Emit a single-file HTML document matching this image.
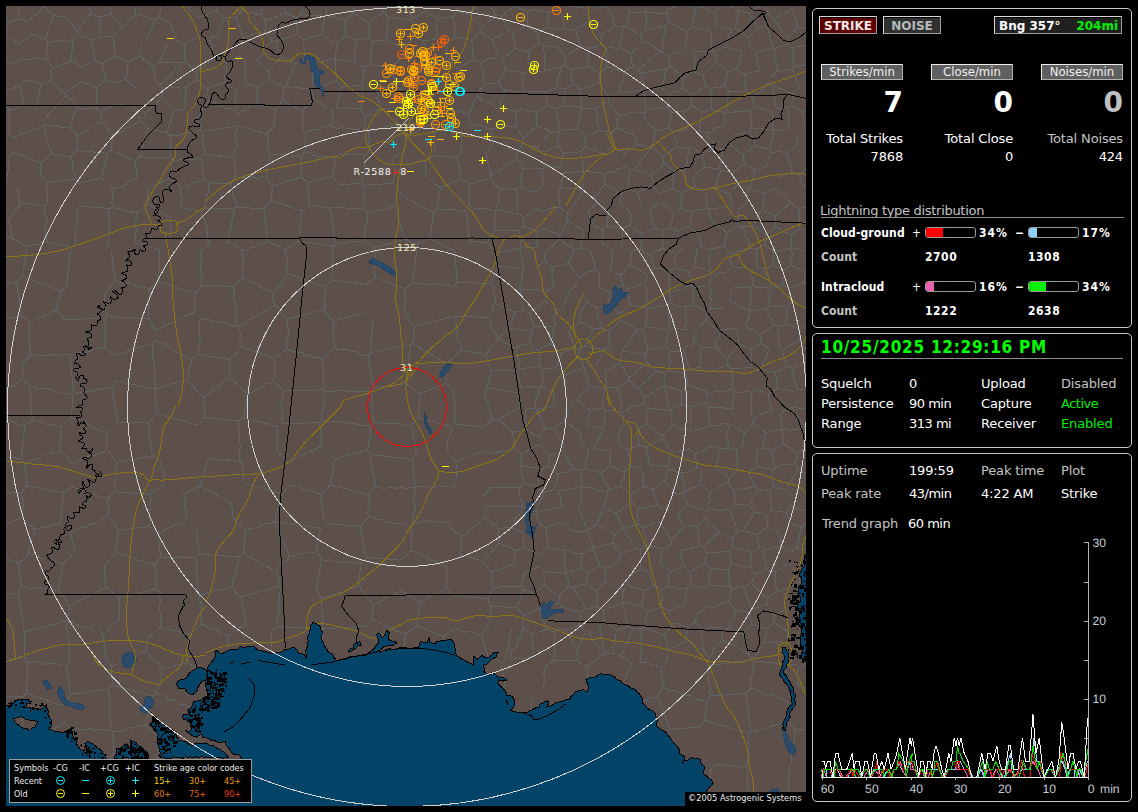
<!DOCTYPE html>
<html lang="en">
<head>
<meta charset="utf-8">
<title>Lightning Map</title>
<style>
html,body{margin:0;padding:0;background:#000;}
body{width:1138px;height:812px;position:relative;overflow:hidden;font-family:"DejaVu Sans","Liberation Sans",sans-serif;font-size:13px;color:#fff;}
#map{position:absolute;left:6px;top:6px;width:800px;height:800px;background:#5d504a;overflow:hidden;}
#map svg{position:absolute;left:0;top:0;}
.panel{position:absolute;left:812px;width:318px;border:1px solid #c8c8c8;border-radius:5px;background:#000;}
.t{position:absolute;white-space:pre;line-height:16px;height:16px;font-size:13px;letter-spacing:-0.15px;color:#fff;}
.r{text-align:right;}
.g{color:#c4c4c4;}
.gr{color:#00f000;}
.b{font-family:"DejaVu Sans Condensed","DejaVu Sans","Liberation Sans",sans-serif;font-weight:bold;font-size:12px;letter-spacing:0.1px;}
.hb{position:absolute;top:16px;height:16px;border:1px solid #d8d8d8;border-bottom-color:#a0a0a0;border-right-color:#a0a0a0;box-shadow:inset 0 1px 0 #000;font-family:"DejaVu Sans","Liberation Sans",sans-serif;font-weight:bold;font-size:12px;line-height:18px;text-align:center;white-space:pre;letter-spacing:0;}
.lb{position:absolute;top:64px;width:80px;height:14px;border:1px solid #ececec;border-bottom-color:#b0b0b0;border-right-color:#b0b0b0;background:#5f5f5f;font-family:"DejaVu Sans Condensed","Liberation Sans",sans-serif;font-size:13px;line-height:14px;text-align:center;color:#f0f0f0;}
.big{position:absolute;top:86px;width:90px;height:34px;line-height:34px;font-weight:bold;font-size:28px;text-align:right;letter-spacing:0;}
.bar{position:absolute;width:49px;height:9px;border:1px solid #9a9a9a;border-radius:3px;background:#000;overflow:hidden;}
.bar i{position:absolute;left:0;top:0;height:9px;display:block;}
.pc{letter-spacing:1px;}
.ct{letter-spacing:0.55px;}
.mn{letter-spacing:-0.5px;}
.hr{position:absolute;height:1px;background:#8c8c8c;}
</style>
</head>
<body>
<!-- ============ map ============ -->
<div id="map">
<svg width="800" height="800" viewBox="6 6 800 800" shape-rendering="crispEdges" fill="none" stroke-width="1">
<path id="counties" stroke="#606465" d="M-25.7 2.2L3 -8.7M-6.2 399.1L22.8 378.8M22.8 378.8L22.9 362.8M28.9 -6.4L42.1 1.8M42.1 1.8L49.2 -5.9M794.8 806.2L794.9 810.3L795 814.5L796.6 818.6L796.3 822.8L796.3 826.9L795.9 831.1M3.6 -8L2.1 14.8M16 -4.5L20.3 18.9M20.3 18.9L8.6 21.8M2.1 14.8L4.6 18.9L8.6 21.8M2.1 14.8L-2.8 14.7L-7.4 16.2L-11.6 18.8L-16.4 19.5M54 15.6L42.8 6.4M54 15.6L51.6 19.2L50.8 23.4L48.8 27.2L47.6 31.2L47.7 35.7L45.8 39.5M42.8 6.4L40.6 10.1L37.9 13.3L34.5 15.9L31.1 18.4L28.4 21.6M45.8 39.5L40.8 38.2L36.4 35.1L31.3 34.1M20.3 18.9L28.4 21.6M42.1 1.8L42.8 6.4M-15.4 245.3L11.1 236.6M11.1 236.6L11.5 232.1L11.4 227.7L9 223.5L9.9 219M-9.6 283.5L-5.2 283.5L-1 281.8L3.4 281.6L7.8 281.7L12.2 283.5L16.5 282M-14.3 321.5L22.1 316.5M16.5 282L22.1 316.5M26.7 247.3L22.9 244.6L19.3 241.3L14.4 240.1L11.1 236.6M26.7 247.3L22.6 276.1M16.5 282L22.6 276.1M-17.2 187.2L-13.5 185.4L-9.4 184.7L-5.2 184.1L-1.9 181.3L2.5 181.4L6 179M8.9 157.7L8.8 162L8.6 166.3L8.3 170.6L7.5 174.9L6 179M9.7 134.9L-21.1 128.3M9.7 134.9L12.5 137.8M8.9 157.7L12.7 152.4M20.4 202.6L18.3 207.1L14.9 210.7L11.8 214.5L9.9 219M20.4 202.6L18.1 198.2L19.2 193L17.1 188.6M9.7 134.9L9.9 110.2M9.9 110.2L-1 99.8M8.6 21.8L4.8 34.6M31.3 34.1L28.4 36.8L25.9 40.1L21.7 41.4L19.3 44.7M4.8 34.6L19.3 44.7M52.4 67.9L45.9 57.9M52.4 67.9L71.3 61M45.9 57.9L48.1 42.5M48.1 42.5L52.2 41.8L56.2 40.6L60.4 40.6L64.7 41.7L68.8 41.1L72.8 39.4M72.8 39.4L71.3 61M45.8 39.5L48.1 42.5M18.8 60L45.9 57.9M77.7 34.3L72.8 39.4M77.7 34.3L77.1 30.1M54 15.6L65.3 16.7M77.1 30.1L65.3 16.7M77.7 34.3L82.1 36.7L87.2 37.7L91.7 40.1M81 67.6L95 60.5M81 67.6L76.8 63.4L71.3 61M91.7 40.1L95 60.5M170.6 136.2L170.2 140.5L170.8 144.8L169.9 149.1L170.4 153.5L170.8 157.8M170.6 136.2L166.9 132.5M139.8 156.9L148 128.5M139.8 156.9L170.8 157.8M166.9 132.5L148 128.5M134.9 161L111.6 150.3M134.9 161L139.8 156.9M111.6 150.3L112.4 134.6M112.4 134.6L116.9 133.4L121.1 131.6L124.6 128.5L129 126.9L133.1 125L137.2 123L141 120.4M148 128.5L141 120.4M132.8 106.3L141 118.9M132.8 106.3L115.8 103.7M115.8 103.7L100.2 112.2M100.2 112.2L101.8 116.9L101.6 121.8M112.4 134.6L101.6 121.8M166.9 132.5L173.7 110.6M141 118.9L144 115.9L146.6 112.5L149.4 109.3L152.6 106.5L156.1 104L158.9 100.8L162.6 98.5M162.6 98.5L165.4 101.4L168.4 104.3L170.7 107.8L173.7 110.6M200.9 130.2L201.1 125.5L198 121.4L198.4 116.7M200.9 130.2L196.6 131.3L192.5 132.9L187.8 131.9L183.7 133.9L179.5 135.6L174.9 135L170.6 136.2M185.4 109.2L179.5 109.7L173.7 110.6M162.6 98.5L163 88.9M185.4 109.2L186.1 87M186.1 87L181.6 88.3L176.8 87.5L172.2 88L167.5 87.4L163 88.9M330.8 208.4L335.1 244.4M330.8 208.4L332.6 206.9M335.1 244.4L339.2 242.8L343.5 243.4L347.8 242.9L351.8 241.1L356.2 241.8L360.5 241.9L364.6 240.3M367.5 213.3L367.8 217.9L367.1 222.4L364.8 226.7L365.9 231.4L363.9 235.7L364.6 240.3M367.5 213.3L364.7 209.6M364.7 209.6L360.8 208L356.6 208.9L352.6 208.8L348.6 208.7L344.7 206.7L340.6 207.6L336.5 207.8L332.6 206.9M364.7 209.6L364.7 205.5L364 201.4L363.3 197.4L364.3 193.2L364.1 189.1L363 185.1M338.6 183.7L343.3 185L348.1 184.7L352.8 183.4L357.6 183.5L362.3 184.2M321.9 34.5L324.8 16.3M321.9 34.5L303.4 39.6M324.8 16.3L300.3 14.6M303.4 39.6L297.6 34.5M297.6 34.5L297.9 30.3L296.4 26.2L296.6 22L296.2 17.9M300.3 14.6L296.2 17.9M310.8 62.9L335.1 58.7M310.8 62.9L305.3 59.3M305.3 59.3L303.4 39.6M336 43.9L336.3 48.9L335.5 53.8L335.1 58.7M336 43.9L321.9 34.5M280.3 -7.2L280.7 -3L282.8 0.7L283.6 4.8L284.4 8.9L286.1 12.8M286.1 12.8L296.2 17.9M305.6 -0.7L304.5 3.2L302.1 6.6L302.4 11L300.3 14.6M324.8 16.3L326 15.1M327 -2.8L325.9 1.7L326 6.1L326.5 10.6L326 15.1M96 87.6L96.9 109.1M96 87.6L92.2 86.1L88.6 84.4L84.8 83L81.1 81.5M96.9 109.1L92.9 108.6L89 107.7L84.8 109.3L80.9 108.6L76.9 107.6M81.1 81.5L65.6 93.1M76.9 107.6L74.6 104.2L72.3 100.8L69.6 97.8L65.9 95.7M65.6 93.1L65.9 95.7M50.5 80.4L54.1 83.9L57.3 87.7L61.5 90.4L65.6 93.1M50.5 80.4L52.2 76.4L50.9 71.9L52.4 67.9M12.7 152.4L17 153.1L20.6 155.8L25.1 156L29 157.8L32.7 160L37 160.8L40.6 163.5M40.6 163.5L40.6 175M134.9 161L135.6 165.4L136.4 169.7L136.2 174.2L137 178.5M172.4 160.3L169.9 178.3M172.4 160.3L170.8 157.8M147.5 187.2L151.3 186L155 184.2L159.1 183.7L162.5 181.4L166.3 180.1L169.9 178.3M201.1 158.8L172.4 160.3M201.1 158.8L204.2 179.1M204.2 179.1L200.6 181.2L196.6 182.4L192.4 183L189 185.9L184.6 186.1L180.9 188.1M169.9 178.3L173.3 181.9L178 184L180.9 188.1M147.5 187.2L148 203.9M148 203.9L170.8 218.1M180.9 188.1L180.4 193.1L182.6 198L181 203L181.7 208M22.9 362.8L29.4 355.9M22.1 316.5L29.2 321.8M29.4 355.9L30.6 351.6L29.8 347.3L30.2 343.1L28.4 338.8L29.6 334.5L28.9 330.3L28.6 326L29.2 321.8M22.6 276.1L60.9 291.5M60.9 291.5L60.8 296.3L58 300.6L57.5 305.4L56.9 310.2M29.2 321.8L33.5 320.9L37.1 318.5L41.2 317L45.1 315.3L49.2 314.1L52.8 311.6L56.9 310.2M371.4 804.2L375.6 803.7L379.1 801.2L383.2 800.4L386.4 797.1L390.7 796.8L394.9 796.4L398.5 794.3L402.3 792.5M415.6 803.6L402.3 792.5M415.6 803.6L419.7 803L423.9 802.7L428.1 803.6L432.1 801.4L436.3 801.3L440.5 801.1L444.6 800.4L448.8 801M701.3 799.5L701.7 803.9L703.3 808.1L701.4 812.7L703.2 816.9L702.1 821.4L703.7 825.7M747.9 821.9L749.2 798.5M701.9 799L749.2 798.5M788 799.1L783.7 798.5L779.4 798.2L775.1 799.6L770.8 799.4L766.5 799.7L762.3 799L758 799.3L753.7 798.4L749.4 798M795.5 729.8L791.4 726L788 721.5M795.5 729.8L794.4 733.9L793.9 738L794.9 742.4L794.2 746.5L792.5 750.5L791.3 754.6L791.6 758.8L791.5 763M788 721.5L750.7 732.4M747.5 767.1L746.6 762.8L748.2 758.7L749.6 754.6L748.6 750.3L748.5 746L748.1 741.8L748.3 737.6L749.6 733.4M829.8 730.7L795.5 729.8M788 701.9L788.6 706.8L789.1 711.7L788.2 716.6L788 721.5M835.5 698.7L831.2 697.8L826.9 697L822.8 695.6L819.6 691.9L814.8 692.4L811 690.2L806.8 689.1L802.9 687.3L798.8 686M788 701.9L784 700.3L780.3 697.8L776 697L772.2 694.9L767.6 694.9L763.3 693.8L759.8 691L755.7 689.6L751.7 688M751.7 688L746.1 693.1M746.1 693.1L750.7 732.4M788 799.1L789.5 764.6M749.4 798L750 793.5L748.2 789.3L747.7 784.9L747.9 780.5L747.1 776.1L748.6 771.6L747.7 767.3M701.9 799L702.3 794.9L703.5 791.1L705.3 787.5L706.2 783.6L708.4 780.1L710.1 776.4L710.6 772.4L711.5 768.4L713.9 765.1M713.9 765.1L718.2 764.5L722.4 765L726.6 765.5L730.8 765L734.9 766.1L739.2 766.1L743.3 767.5L747.5 767.1M710.4 696L746.1 693.1M710.4 696L706.5 702.4M706.5 702.4L704.9 720.3M704.9 720.3L749.6 733.4M577.4 833.3L578.2 801.1M578.2 801.1L620 804.1M620 804.1L620.1 833.2M406.1 314.9L404.8 310.7L404.9 306.3L405 302L405.9 297.6L404.8 293.3L405.2 289M405.2 289L376.1 278M376.1 278L371.1 280.5L367.2 284.5M414.3 326.5L453.8 316.1M414.3 326.5L414.1 330.7L413.6 334.9L413.9 339.1L412 343.1M412 343.1L447 363.3M453.8 316.2L454.7 320.4L456.6 324.4L456.2 329L457.9 333.1L457.6 337.6L458.9 341.7L461.6 345.6L461.7 350M461.7 350L447 363.3M454 286.2L449.8 286L445.7 284.9L441.5 284.1L437.3 284.9L433.2 283.4L429 284.1L424.7 285.1L420.7 282.9L416.5 283.6L412.3 283.1M412.3 283.1L408.6 285.9L405.2 289M406.1 314.9L414.3 326.5M372.3 320L372.7 324.1L372.7 328.2L371.5 332.2L371.9 336.3L370.7 340.4L371.8 344.5L371.3 348.6L370.7 352.6M412 343.1L411 344.2M411 344.2L370.7 352.6M334.2 348L333.5 321M334.2 348L338.2 349.8L342.6 349.9L347.1 349.7L351.2 351L355.5 351.7L359.4 354.3L363.5 355.7L367.9 355.6M333.5 321L363.8 312.8M367.9 355.6L370.7 352.6M434.6 124.4L432.8 121.9M434.6 124.4L434.9 155.3M432.8 121.9L429.5 125.3L425 126.4L421 128.4L417.6 131.6L413.5 133.3L409.7 135.7L405.5 137.5M404.4 151L404.7 146.5L405.7 142.1L405.5 137.5M434.9 155.3L425.3 161.1M434.6 124.4L461.4 134.4M457 157.8L434.9 155.3M457 157.8L461.5 152M461.5 152L461.7 147.6L461.9 143.2L461.5 138.8L461.4 134.4M367.5 213.3L371.2 211.2L375.3 210.9L379.4 210.4L383.5 209.8L387.4 208.6L391 206.6L395.1 206M364.6 240.3L367.4 243.3L371.7 244.5L374.2 247.9M374.2 247.9L404.2 239.5M395.1 206L404.2 239.5M455 251L457 282.2M455 251L429.8 238.7M457 282.2L454 286.2M412.3 283.1L417.6 243.8M429.8 238.7L417.6 243.8M374.2 247.9L375.7 252.1L375 256.5L375.8 260.8L374.9 265.1L374.5 269.5L374.8 273.8L376.1 278M417.6 243.8L412.8 243.3L408.8 240.5L404.2 239.5M155.5 339.9L152.8 343.1M155.5 339.9L158.6 342.7L163 343.1L166.5 345.3L170.1 347.2L173.2 349.9L176.5 352.5L180.9 352.8L183.9 355.8L187.3 358L191.2 359.4M152.8 343.1L152.9 347.3L152.5 351.5L152.7 355.7L153.3 359.8L154.4 363.9L154.6 368.1L154.6 372.3L153.9 376.5L155.7 380.6L156 384.8L155.7 389M155.7 389L186.9 379.6M191.2 359.4L191.3 363.6L189.3 367.4L188.3 371.4L188.5 375.7L186.9 379.6M95 60.5L102.2 63.8M96 87.6L106 80.2M102.2 63.8L106 80.2M100.2 112.2L96.9 109.1M115.1 82.7L106 80.2M101.6 121.8L77 135.5M76.9 107.6L69.8 127.2M77 135.5L69.8 127.2M43.3 120.7L65.9 95.7M69.8 127.2L65.3 127.9L60.9 127.3L56.7 125.7L52.2 126.7L47.9 124.6L43.5 124.9M12.5 137.8L43.2 125.4M40.6 163.5L51.4 153.9M51.4 153.9L43.2 125.4M24 80.9L20.7 85.1M24 80.9L28.5 80.8L32.7 81.6L36.8 82.9L40.9 84.5M20.7 85.1L22.9 105.1M40.9 84.5L36.2 109.7M50.5 80.4L40.9 84.5M17 62.5L18.8 60M9.9 110.2L14.4 108.9L18.6 106.8L22.9 105.1M-0.2 92.8L20.7 85.1M17 62.5L-3.4 64.5M4.8 34.6L0.1 36.4L-4.4 38.4L-9.3 39.7M185.8 60.9L196.1 71.9M185.8 60.9L182.3 62.3M186.1 87L196.7 79.8M196.7 79.8L196.1 71.9M163 88.9L160.1 85M182.3 62.3L179.4 65.8L175.3 68.2L172.8 72L170.5 76.1L166.6 78.7L163.8 82.3L160.1 85M209.2 38.5L210.8 42.4L212.4 46.3L212.5 50.6L212.3 55L214.6 58.7M209.2 38.5L216 35.4M239.8 55.9L227.1 62M214.6 58.7L227.1 62M185.8 60.9L184.1 57L184.3 52.9L184.4 48.7L184.1 44.7M196.1 71.9L214.6 58.7M200.5 35.5L184.1 44.7M167.2 43.8L159.4 62.2M159.4 62.2L182.3 62.3M176.2 40.1L184.1 44.7M146.6 41L154.9 19.4M171.4 24.7L176.2 40.1M171.4 24.7L159.2 17.6M154.9 19.4L159.2 17.6M198.5 18.5L196.1 15L193 12.4L189.4 10.3M216 35.4L219.3 31.6L220.8 27L223.3 22.7L224.5 17.9M243.3 38L236.2 17.4M243.3 38L240 43.7M236.2 17.4L224.5 17.9M198.5 18.5L202.7 16L207.3 14.5L211.5 12.1L216.1 10.6M224.5 17.9L219.8 14.9L216.1 10.6M239.8 55.9L244.4 59.4M264.8 32.2L272.1 40.6M264.8 32.2L260.8 34.6L256 33.7L251.6 34.5L247.6 36.6L243.3 38M256.9 60.6L260.3 57.9L262.9 54.6L263.5 49.8L266.4 46.8L269.4 43.8L272.1 40.6M286.1 12.8L266 20.8M266 20.8L264.8 32.2M297.6 34.5L275.8 41.9M272.1 40.6L275.8 41.9M399.8 -7.9L402.6 -4.6L403.3 -0.1L405.9 3.3L407.8 7.1L409.5 11L411.2 15L413.3 18.7M413.3 18.7L417.4 16.4L421 13.2L425.3 11.3M429.3 -2L425.3 11.3M336 43.9L345.6 36.4M326 15.1L329.9 16.8L334.1 17L338 18.3L342 19.7L346.1 20.5M345.6 36.4L345.8 31.1L344.7 25.7L346.1 20.5M111.6 150.3L107.4 153.4M77 135.5L77.6 140.5L77.3 145.4L77.3 150.4M107.4 153.4L77.3 150.4M47.6 182.6L40.6 175M47.6 182.6L75.1 179M51.4 153.9L71 157.1M75.1 179L75.4 174.4L72.4 170.4L72.5 165.9L72.4 161.4L71 157.1M77.3 150.4L73.3 153L71 157.1M330.8 208.4L309.4 204.7M338.6 183.7L335.4 180L332.8 175.9M309.4 204.7L307.6 182.8M307.6 182.8L332.8 175.9M204 154.2L204.9 149.6L202.7 145.2L202.4 140.6L203.4 136L202.3 131.4M230.5 183.5L235.3 177.1M230.5 183.5L209.1 182.8M209.1 182.8L204.2 179.1M204 154.2L233.2 157.4M235.3 177.1L235.8 172L234.1 167.2L234.8 162.2L233.2 157.4M236.6 126.4L237.4 130.7L235.3 134.7L235.5 138.9L236.6 143.2L236.2 147.4L233.8 151.5L234.3 155.7M236.6 126.4L202.3 131.4M235.3 177.1L239.7 177.8L244.2 177.6L248.6 177.7L253.1 176.8L257.5 178.8L262 176.8L266.4 177.9M269.4 154.8L269.9 159.6L268.3 164L267.2 168.6L266 173.1L266.4 177.9M271.1 200.3L271.6 195.7L272.4 191.1L271.7 186.4M271.1 200.3L301.7 210.9M309.4 204.7L306.3 208.8L301.7 210.9M307.6 182.8L301.4 176.8M301.4 176.8L271.7 186.4M230.5 183.5L232.2 187.3L233 191.2L232.2 195.5L235.1 199L236.3 202.9L236.2 207M271.1 200.3L267.5 204.7L263.7 208.9M263.7 208.9L236.2 207M271.7 186.4L269 182.2L266.4 177.9M137 178.5L133.1 180.2L128.9 181.2L126 184.8L122 186.4L118 187.6L114.1 189.5M107.4 153.4L101.2 177.8M114.1 189.5L101.2 177.8M75.1 179L79 183.5M101.2 177.8L79 183.5M26.7 247.3L30.4 245.6L34.4 244.7L38.7 244.9L42.1 242.2L46.2 241.7M20.4 202.6L45.1 205.9M46.2 241.7L46.8 237.2L45.5 232.8L44.7 228.3L46 223.8L46.4 219.3L45.6 214.8L44 210.4L45.1 205.9M47.6 182.6L47.1 186.9L46.8 191.2L47.9 195.5L47.4 199.8L47.1 204.1M47.1 204.1L45.1 205.9M148 203.9L143.5 206.2L140.9 210.9L136.3 213M114.1 189.5L112.5 193.6L112.5 197.9L111.8 202.1L112.4 206.4M136.3 213L132.2 212.1L128.1 211.5L124 210.9L120.4 208.4L116.2 208L112.4 206.4M78.1 206L110 208.5M112.4 206.4L110 208.5M322.6 359L318.8 357.2L314.4 357.8L310.7 355.6L306.4 355.7L303 352.3L298.7 352.4L294.7 351.5L290.6 350.9L286.8 349.2M322.6 359L334.2 348M323.7 309.5L327 313.4L329.4 317.9L333.5 321M323.7 309.5L288.2 319M288.2 319L287.2 323.3L287.7 327.6L288.5 332L288.5 336.3L286 340.5L287.1 344.9L286.8 349.2M322.6 359L324.1 389.9M273.9 380.8L282.7 390.6M273.9 380.8L274.7 358.2M282.7 390.6L324.1 389.9M274.7 358.2L286.8 349.2M204.9 208.3L201.7 211.1M204.9 208.3L234.5 208.9M201.7 211.1L201.4 215.6L204.6 219.2L205.6 223.3L206.8 227.4L206.9 231.8L207.5 236L207.9 240.3L209.9 244.2M234.5 208.9L227.5 242.1M209.1 182.8L208.7 187.1L208.8 191.5L206.4 195.5L207.3 200L204.9 203.9L204.9 208.3M181.7 208L201.7 211.1M236.2 207L234.5 208.9M263.7 208.9L268.1 241.5M268.1 241.5L264 243.5L259.3 243.7L255.7 247.1L251.2 247.9L246.9 249.5L242.6 250.9M242.6 250.9L239 248.3L235.4 245.9L231.6 243.8L227.5 242.1M200.8 250.5L200.1 254.9L200.7 259.3L201.5 263.7L200.5 268.1L201.1 272.5L202.1 276.8L201.2 281.2L202 285.6M195.1 293.6L202 285.6M195.1 293.6L158.6 281.1M158.6 281.1L160 249.6M170.8 218.1L170.1 242.7M209.9 244.2L205.3 247.3L200.8 250.5M136.3 213L136.9 217.3L134.8 221.6L135.1 225.9L136.6 230.2L134.9 234.5L135.3 238.8L135.6 243.2M135.6 243.2L160 249.6M156.6 330.1L152.9 326.7L151.6 321.7L148.5 317.9M156.6 330.1L195.1 311.8M195.1 311.8L194.6 307.3L195.7 302.7L194.8 298.2L195.1 293.6M158.6 281.1L149.4 288.8M149.4 288.8L148.5 317.9M66.6 286.3L70.6 247.4M70.6 247.4L74.8 245.1M111.2 251.4L111.9 255.6L112.4 259.7L112 264L113.4 268.1L113.9 272.3L115.7 276.3L115 280.6M115 280.6L104.4 295M60.9 291.5L66.6 286.3M46.2 241.7L70.6 247.4M78.1 206L74.8 245.1M110 208.5L108.7 212.5L108.1 216.4L109.8 220.6L109.9 224.6L108.8 228.6L109.1 232.6L108.1 236.6L108.5 240.6L107.9 244.6L106.8 248.5M149.4 288.8L145.3 287.2L140.7 287.1L136.3 286.6L132.5 283.6L128.1 282.7L123.7 282.2L119.1 282.4L115 280.6M106.6 315.9L104.4 295M106.6 315.9L110.8 315.9L115 317L119.2 317L123.3 317.6L127.6 317.3L131.7 317.8L135.9 318.2L140.1 318.6L144.3 318.4L148.5 317.9M56.9 310.2L64.8 319.6M106.6 315.9L105.4 318.3M105.4 318.3L64.8 319.6M29.4 355.9L33.8 355.3L38.2 354.9L42.7 355.9L47.1 355.9L51.4 354.3L55.9 355L60.3 355.6L64.7 354.2L69.1 354.4M798.8 686L797.8 681.5L798.1 676.9L797.4 672.4L798.6 667.8M751.7 688L750.9 683.4L750.9 678.9L752.5 674.5L753.8 670L753.8 665.5L753.1 660.9M753.1 660.9L795.7 665M685 641.3L690 642.2L694 645.5L698.4 647.9L703.2 649.3M685 641.3L688.5 626.2M703.2 649.3L701.5 628.4M701.5 628.4L695.4 622.5M688.5 626.2L695.4 622.5M696.4 614.6L700.5 611.7L705.2 609.9L708.9 606.5M696.4 614.6L695.4 622.5M720.1 627.3L701.5 628.4M713.4 607.3L708.9 606.5M625.9 706.3L617.8 694.6M625.9 706.3L630 705.5L633.7 703.4L637.6 701.9L641.9 701.9L645.8 700.4L649.4 697.9L653.7 697.5L657.5 695.8M617.8 694.6L632.1 663.3M657.5 695.8L662.6 686.9M662.6 686.9L662.3 682.1L661.8 677.3L661.4 672.5L661.2 667.7M640.7 661.8L644.8 662.8L649.2 663.1L652.8 665.8L657.3 665.9L661.2 667.7M710.4 696L709.6 691.9L710.9 687.6L708.9 683.6L708 679.5L708.3 675.4L709.5 671.1L708 667.1M706.5 702.4L702.7 700.6L698.5 699.7L694.2 699.2L690.8 695.9L686.4 695.8L682.7 693.5L678.5 692.7L674.9 690.2L670.2 690.8L666.3 689L662.6 686.9M661.2 667.7L665.3 664M708 667.1L708.9 665.6M685 641.3L668.6 649.7M703.2 649.3L708.6 657.9M708.6 657.9L708.9 665.6M665.3 664L668.6 649.7M672.1 623.7L664.7 635.9M672.1 623.7L676.4 623.4L680.4 624.8L684.3 626.6L688.5 626.2M668.6 649.7L667.5 645L666.2 640.4L664.7 635.9M622.7 411.4L627.2 410.2L630.9 406.8L635.2 405.3L640.1 405.1L644.2 402.8M622.7 411.4L620.9 407.6L621.6 403.3L620 399.4L620.2 395.3L617.9 391.5L618.4 387.3M639.1 388.6L635.4 386.3L632.6 383L628.8 380.8M639.1 388.6L644.2 397.9M618.4 387.3L628.8 380.8M644.2 397.9L644.2 402.8M457 282.2L490.9 283.6M494.4 288.1L490.9 283.6M494.4 288.1L493.6 293.3L495.2 298.4L495.1 303.6M453.8 316.2L486.9 317.3M486.9 317.3L489.8 314.3L492.1 311.1L492.2 306.5L495.1 303.6M461.7 350L485.3 354.4M486.9 317.3L489.5 320.6L490.7 324.5L491.3 328.7L494.3 331.7L496.5 335.2L497.7 339.1M485.3 354.4L488.7 350.8L491.4 346.7L494.2 342.6L497.7 339.1M520.7 387.5L517.4 370.8M491.3 370.6L517.4 370.8M491.3 370.6L486.6 387.6M518 392.8L486.6 387.6M447 363.3L446.4 367.4L447.2 371.5L444.9 375.4L446.8 379.6L445.3 383.6M453.9 390.4L449.6 386.9L445.3 383.6M485.3 354.4L491.3 370.6M484.2 391L486.6 387.6M325.9 827.2L321.9 794.7M321.9 794.7L325.9 796.2L330 794.7L334.1 794.8L338.1 794.6L342.1 794.9L346 797.5L350.1 797.1L354.1 797.8L358.1 797.8L362.2 797.9L366.3 797.4M367.5 756.9L364.8 761.2M367.5 756.9L372.1 756.5L376.4 757.5L380.5 759.6L384.9 759.7L389.5 759.1L393.7 760.6L397.8 762.7L402.2 763.4L406.7 763.2M402.3 792.5L406.7 763.2M366.3 797.4L364.8 761.2M323.4 726.4L363.4 734.2M323.4 726.4L322.6 722.3L322.9 718.2L321.8 714.1L321.5 710.1L321.7 705.9L322.2 701.8M370.1 696.2L368.7 694.3M370.1 696.2L367.4 728.5M368.7 694.3L330.3 689.9M367.4 728.5L363.4 734.2M322.2 701.8L324.5 697.6L327.9 694.1L330.3 689.9M443.3 660.4L411.5 668.4M443.3 660.4L442.1 655.7L443.6 651L442.8 646.2L442.3 641.5L443.7 636.7M411.5 668.4L407.2 664.8L403.9 660.2M443.7 636.7L417.1 626M417.1 626L405.1 633.9M405.1 633.9L403.9 660.2M573.1 794.6L538.8 800.4M572.9 763.2L577.1 770.4M572.9 763.2L542.4 760M538.8 800.4L531.8 793.1M542.4 760L527.5 774.2M576.4 730.5L575.3 734.6L575.9 738.7L575.2 742.8L574.6 746.9L573.4 750.9L574.3 755.1L573.2 759.1L572.9 763.2M576.4 730.5L534.8 727.7M542.4 760L541.4 756L540.8 751.9L539.9 747.8L537.7 744.1L537.5 739.8L536.9 735.7L535 731.9L534.8 727.7M620 804.1L625.5 797.6M618.2 764.7L620.3 768.6L620.6 772.8L621.8 776.9L622.1 781.1L621.7 785.5L624.7 789.2L624.9 793.5L625.5 797.6M663.7 831.1L658.9 798.2M701.3 799.5L697.4 797.3L692.8 797.1L688.5 796.3L684.4 794.5L680.2 793.2L675.7 792.8L671.9 790.2L667.6 789.4M667.6 789.4L658.9 798.2M453.9 390.4L454.7 423.8M445.3 383.6L420.2 393.8M451.3 426.5L418.1 417.9M418.1 417.9L420.2 393.8M411 344.2L405.7 383.8M420.2 393.8L405.7 383.8M367.9 355.6L373.9 387.9M405.7 383.8L373.9 387.9M430.2 80.4L415.5 83.4M430.2 80.4L430.6 75.6L429 70.8L429.5 65.9M415.5 83.4L412.2 62.1M429.5 65.9L412.2 62.1M432.8 121.1L451.4 108M432.8 121.1L426 109.8M426 109.8L428.5 106.2L431 102.6L431 97.7L434.6 94.7L436.3 90.6L437.9 86.6M451.4 108L450.1 86.1M450.1 86.1L446 86.3L442 86.1L437.9 86.6M468.8 114.2L471 124.1M468.8 114.2L451.4 108M405.3 101.1L426 109.8M405.3 101.1L403.6 92.7M403.6 92.7L408 90.1L411.6 86.6L415.5 83.4M430.2 80.4L437.9 86.6M489.8 178.6L469.5 184.1M489.8 178.6L490.7 175.5M457 157.8L461.3 178.5M490.7 175.5L485.8 153.3M469.5 184.1L465.4 181.3L461.3 178.5M401.9 195.7L433.8 212.8M425.6 175.1L428.8 178.9L433.5 181L436.5 185L440.6 187.8M440.6 187.8L436.6 210.2M433.8 212.8L436.6 210.2M392.6 158.6L393.1 162.7L394.2 166.8L394.1 170.9L394.1 175.1L393.9 179.2L393.5 183.4M392.6 158.6L404.4 151M393.5 183.4L396.7 186.7L398.8 190.9L401.8 194.4M425.3 161.1L425.4 165.8L426.1 170.4L425.6 175.1M393.5 183.4L363 185.1M429.8 238.7L433.8 212.8M461.3 178.5L440.6 187.8M469.5 184.1L469.3 206.4M466.1 210.3L461.9 211.6L457.7 210.9L453.4 209L449.2 209.7L445 209.6L440.8 209.4L436.6 210.2M469.7 241.6L466.1 210.3M419.7 602.2L417.1 626M419.7 602.2L400.3 589.6M371.8 620.3L376.4 621L380.2 623.5L384.3 625.5L388.5 627L392.8 628.3L396.3 631.6L401 632.1L405.1 633.9M371.8 620.3L373.4 606M400.3 589.6L397 592.8L393 594.9L388.1 595.5L384.8 598.7L381.1 601.2L377 603.2L373.4 606M411.1 551.1L400.2 560.1M411.1 551.1L415.5 551.7L419.3 553.6L422.9 556L427.2 556.7L430.4 560L434.6 560.8L438.6 562.3L442.4 564.1L446.1 566.3M419.7 602.2L423.9 601L427.3 598.1L430.6 595.2L434.4 593.2L439.2 593.1L442.6 590.3L446.4 588.2M446.1 566.3L446.4 588.2M411.1 526.8L411.1 551.1M411.1 526.8L406.8 526L402.8 523.9L398.4 523.5L393.9 523.5L389.7 522.4L385.3 521.8L381.3 519.6L376.9 519.4L372.8 517.7L368.6 516.6M368.6 516.6L360.4 526.4M360.4 526.4L366.3 557.7M400.2 560.1L366.3 557.7M321.7 558.8L316.4 590.7M321.7 558.8L325.9 560.7L330.4 559.5L334.5 561.7L338.9 562L343.1 562.9L347.5 562.9L352.1 561.8L356.3 562.9L360.5 564.1M359 585.7L360.5 564.1M359 585.7L355 587.5L350.8 588.8L346.8 590.6L342.6 591.9L338.2 592.5L334.2 594.2L330.1 595.9L325.8 596.9L321.6 598M321.6 598L316.4 590.7M373.4 606L359 585.7M366.3 557.7L360.5 564.1M35 763.6L31.4 767.1L26.6 768.9L22.6 771.7L18.9 775.1M18.9 775.1L18.6 798.3M18.6 798.3L21.5 801.3L23.8 804.9L26.4 808.3L27.9 812.4M27.9 812.4L68.5 788M-10.8 739.7L-6.9 738.1L-2.6 738.3L1.3 736.5L5.1 734.6L9.7 735.4L13.7 734.4L17.2 731.1L21.6 731.2M35 763.6L35.1 759.5L34.1 755.4L33.7 751.3L33.5 747.2L34.1 743.1L33.5 739M-11.4 757.6L18.9 775.1M21.6 731.2L33.5 739M21.6 731.2L22.5 726.9L23 722.6L22.4 718.2L22.5 713.8L23.1 709.5L23.1 705.2L21.9 700.8L22.9 696.5M-12.9 700.1L-9.1 698.5L-4.9 699.8L-1 698.4L2.9 697.8L6.8 696.9L10.8 696.4L15 697.7L18.9 696.5L22.9 696.5M247.7 394L243.9 417.3M247.7 394L229.5 377.5M229.5 377.5L203.5 397.7M203.5 397.7L204.7 417.5M243.9 417.3L238.7 420.8M204.7 417.5L238.7 420.8M156.3 413.6L197.8 425.1M156.3 413.6L155.5 389.2M186.9 379.6L203.5 397.7M204.7 417.5L201.7 421.7L197.8 425.1M117.6 422.7L107 433.3M117.6 422.7L147.9 423M107 433.3L106.7 449.7M147.9 423L149.7 427L149.2 431.4L149.8 435.5L149.6 439.8L151.2 443.8L151.4 448L151.7 452.2L153.7 456.1M153.7 456.1L149.6 457L145.6 458L141.3 457.7L137.3 458.9L133.4 460.8L129 459.4L125.1 461.3L120.9 461.4L116.9 462.8M106.7 449.7L116.9 462.8M61.1 426.5L56.8 426.6L53 424.2L48.7 424.3L44.5 424L40.7 421.4L36.6 420.7L32.4 420.5M61.1 426.5L61.9 430.5L60.1 434.5L61.4 438.5L60.1 442.5L59.9 446.5L60.3 450.5M60.3 450.5L56.3 451.7L52.2 452.6L48.4 454.5L44.1 454.9L40.8 458.2L36.4 458.4L32.8 460.5L28.7 461.5L24.8 463.1M32.4 420.5L28.6 423L24.9 425.7M24.9 425.7L21.4 459.4M21.4 459.4L24.8 463.1M29.8 386.8L32.4 420.5M29.8 386.8L34.2 387L38.3 388.8L42.8 388.8L47.3 388.7L51.5 389.8L55.7 391.1L59.9 392.7L64.2 393.4L68.6 393.7L73 394.5M71.2 417L71.2 412.4L72.6 408L72.7 403.5L72.4 399L73 394.5M71.2 417L67.8 420.1L63.8 422.6L61.1 426.5M71.2 417L74.8 419.5L79.1 420.7L82.7 423.4L87.3 423.8L90.9 426.4L94.9 428.2L98.5 430.8L103.2 431.1L107 433.3M72.3 463.5L76.3 462.4L79.5 459.4L84.1 459.7L87.2 456.5L91.1 455.1L95.6 455.4L99 452.8L103.1 451.9L106.7 449.7M72.3 463.5L69 460.5L67.2 456.2L62.7 454.3L60.3 450.5M22.8 378.8L29.8 386.8M-6 417.6L-1.7 419.4L2.6 421L7.2 421.3L11.9 421.6L16 423.7L20.2 425.7L24.9 425.7M-10.4 454.1L-6.3 454L-2.5 455.8L1.7 455L5.7 455.5L9.5 457.1L13.5 457.5L17.4 458.7L21.4 459.4M71.8 486.8L63.7 492.9M24.8 463.1L26.9 485.5M63.7 492.9L26.9 485.5M-14.3 493.4L21.2 492.8M21.2 492.8L26.9 485.5M191.2 359.4L198.6 354.4M200.6 318.1L199.4 322L199.9 326.1L199 330.1L199.2 334.2L199.8 338.3L200.3 342.3L198.4 346.3L198.3 350.3L198.6 354.4M229.5 377.5L229 373L230.5 368.4L229.1 363.9L229.2 359.4M198.6 354.4L229.2 359.4M273.9 380.8L270.5 383.4L266.1 384L262.8 386.7L259 388.4L255 389.8L251.7 392.6L247.7 394M274.7 358.2L270.3 357.4L266.5 355.2L262.3 354L258.6 351.4L253.9 351.7L250.4 348.4L245.8 348.5L241.9 346.5M229.2 359.4L232 355.8L236.4 353.8L238.4 349.4L241.9 346.5M106.1 587L119.7 597.9M106.1 587L105.6 582.8L104.5 578.6L104.3 574.4L104.1 570.2L104.1 565.9M104.1 565.9L115.6 553.1M115.6 553.1L119.7 553.7L123.8 554.7L127.8 555.8L131.5 557.9L135.7 558.2L139.4 560.5L143.5 561.1L147.1 563.6L151.5 563.5L155.2 565.3M119.7 597.9L155.9 588.7M155.9 588.7L156.9 584L155.6 579.4L156.5 574.7L155.3 570L155.2 565.3M160.5 592.7L159.7 597.1L160.7 601.4L159.3 605.8L159.7 610.1L160.4 614.5L161.3 618.9L160.7 623.2L160 627.5M160.5 592.7L155.9 588.7M119.9 618.4L119.7 597.9M160 627.5L147.6 638.6M77.1 30.1L90.5 13.7M90.5 13.7L88.7 -2.2M122.4 27.1L112.1 36.7M122.4 26.6L111.8 14.4M100.4 37.1L112.1 36.7M100.4 37.1L100.6 33L99.8 28.9L100.6 24.8L100.5 20.7L98.9 16.7M98.9 16.7L111.8 14.4M154.9 19.4L135.4 13.7M135.4 13.7L132.9 17.7L129.4 20.6L126.3 24.1L122.4 26.6M134.4 -0.1L135.4 13.7M110.9 -2.6L110.8 1.7L112.3 5.9L110.7 10.2L111.8 14.4M91.7 40.1L100.4 37.1M102.2 63.8L116.1 56.2M116.1 56.2L114.8 51.4L113.8 46.5L114.1 41.4L112.1 36.7M90.5 13.7L98.9 16.7M156.3 82.2L153.1 66.3M153.1 66.3L139.8 56M136.2 88.1L132.2 85.6L128.9 82.4L125.6 79.2M125.6 79.2L127.6 75L127.7 70.5L127.7 66L129.1 61.7M139.8 56L129.1 61.7M159.4 62.2L153.1 66.3M160.1 85L156.3 82.2M141.6 44.3L139.8 56M115.1 82.7L125.6 79.2M116.1 56.2L129.1 61.7M159.2 17.6L160 13.5L160.5 9.3L160.4 5L161.7 0.9L162.5 -3.2M187.7 -2.1L189.4 10.3M216.1 10.6L216.2 5.4L215.8 0.3L215.5 -4.9M266 20.8L261.3 14.3M265.6 -8.1L264.4 -3.7L262.9 0.7L263.3 5.4L262 9.8L261.3 14.3M236.2 17.4L241 11.3M261.3 14.3L257.1 14.3L253.3 12L249 13.4L245.1 11.4L241 11.3M256.9 60.6L268.3 71M275.8 41.9L277.8 45.7L277 50.2L280.5 53.5L280.5 57.8M268.3 71L280.5 57.8M305.3 59.3L300.1 60.9L295.4 63.8M295.4 63.8L291.9 61.8L287.9 61L284.7 58.1L280.5 57.8M301.4 176.8L301.2 155.6M269.8 154.1L274.3 154.2L278.7 155.1L283.3 153.9L287.8 153.9L292.2 156.4L296.7 156.5L301.2 155.6M332.8 175.9L333.6 171.8L334.7 167.7L334.5 163.5L334.1 159.3M334.1 159.3L329.9 157.9L325.8 156.2L321.3 156.2L316.8 156.3L312.6 155.1L308.8 152.1L304.3 152.2M304.3 152.2L301.2 155.6M196.7 79.8L200.8 82L203.2 86L206.9 88.6M227.1 62L225.5 82.3M225.5 82.3L206.9 88.6M198.4 116.7L208.6 100M206.9 88.6L208.6 100M244.4 59.4L245.9 83.3M268.3 71L269.8 79.4M269.8 79.4L257.1 86.5M245.9 83.3L251.4 85.3L257.1 86.5M225.5 82.3L228.5 85.4L231.9 87.6L236 88.8M208.6 100L212.5 101.5L216.2 103.3L219.7 105.6L223.8 106.7L227.4 108.9L231.9 108.9L235.4 111.1M236 88.8L236.7 93.3L235 97.7L235.5 102.2L236.3 106.7L235.4 111.1M335.2 58.9L354.4 62M335.2 58.9L336.5 81.6M336.5 81.6L342.1 87.1M342.1 87.1L362.1 85M354.4 62L364.6 67.4M364.6 67.4L362.1 85M345.6 36.4L356.4 39.5M356.4 39.5L355.6 43.9L355.9 48.5L354.5 52.9L355.1 57.5L354.4 62M310.8 62.9L312.3 67.3L312.5 71.9L313.6 76.4L312.3 81.2L313.8 85.6M313.8 85.6L318.3 84.1L323.1 85L327.6 84.1L331.9 81.7L336.5 81.6M363 86L360.7 109.1M335.9 108.2L340 108.1L344.2 107.5L348.3 107.7L352.4 109.1L356.6 108.4L360.7 109.1M335.9 108.2L342.1 87.1M403.6 92.7L399.7 88.3L394.9 84.9M394.9 84.9L393 67.2M412.2 62.1L402.9 54.8M402.9 54.8L393 67.2M394.9 84.9L390.6 87.1L385.9 87.8L381 87.5L376.7 89.9M364.6 67.4L369.9 63.3M393 67.2L388.6 65.5L383.6 66.5L379 65.9L374.3 65.3L369.9 63.3M369.4 38.7L356.4 39.5M369.4 38.7L372.4 41.2M372.4 41.2L369.9 63.3M413 38L410.6 42L405.7 43.5L403.3 47.5M413 38L412.1 33.6L413.4 29.1L412.6 24.7L412.4 20.3M388.4 16.8L386.3 39.3M388.4 16.8L412.4 20.3M386.3 39.3L390.3 41.9L394.4 44.1L399.3 45L403.3 47.5M402.9 54.8L403.3 47.5M372.4 41.2L377 40.4L381.9 41.2L386.3 39.3M353.2 13.4L368.4 22.5M353.2 13.4L354.4 -3.1M368.4 22.5L372 19.7L375.4 16.4L380.3 15.2L383.4 11.6M383.4 11.6L382.1 -2.6M346.1 20.5L353.2 13.4M369.4 38.7L368.4 34.7L369.8 30.6L368.9 26.6L368.4 22.5M388.4 16.8L383.4 11.6M413.3 18.7L412.4 20.3M299 241.1L333.1 246.1M299 241.1L286 249.3M286 249.3L285.2 253.5L286.6 257.4L288.2 261.4L286.9 265.6L286.3 269.7L287.9 273.7M287.9 273.7L325.3 286.9M333.1 246.1L332 280M332 280L325.3 286.9M335.1 244.4L333.1 246.1M301.7 210.9L299 241.1M268.1 241.5L286 249.3M367.2 284.5L332 280M323.7 309.5L325.2 305L323.7 300.4L325.5 296L325.9 291.4L325.3 286.9M232.9 286.2L234.3 290.4L233.5 294.9L233.9 299.3L235.3 303.5L235.1 308L236.7 312.2L235.9 316.7L236.1 321.1L237.3 325.4M232.9 286.2L242.6 278.7M242.6 278.7L246.7 279.9L250.4 282L254.7 282.9L258.5 284.6L261.4 288.4L265.6 289.5L269.6 290.9L273.5 292.5M237.3 325.4L238.6 326.4M238.6 326.4L274.7 305.3M273.5 292.5L272.7 296.9L273.2 301.1L274.7 305.3M202 285.6L232.9 286.2M200.6 318.1L204.6 319.4L208.9 319.1L212.7 321.1L216.9 321.4L221 322.3L225.3 321.8L229 324.8L233 325.7L237.3 325.4M242.6 250.9L242 255.5L243.6 260.2L242.5 264.8L243 269.4L242.7 274.1L242.6 278.7M287.9 273.7L285.2 277.5L282.7 281.6L279.9 285.5L276.7 289L273.5 292.5M241.9 346.5L242.4 342.3L239.4 338.7L240.9 334.3L239 330.5L238.6 326.4M288.2 319L284.9 315.6L280.7 313L278.2 308.6L274.7 305.3M114.4 355.5L104.9 347.1M104.9 347.1L100.6 348.3L95.9 347.9L91.9 350.5L87.6 352L83.2 352.6L78.4 352L74.3 354.3L69.9 354.9M111.7 387.6L73.8 393.4M111.7 387.6L116.7 381M73.8 393.4L69.9 354.9M152.8 343.1L114.4 355.5M155.5 389.2L116.7 381M105.4 318.3L104.9 347.1M117.6 422.7L111.7 387.6M156.3 413.6L147.9 423M709.1 584.8L703.2 588.1M709.1 584.8L709.8 579.7L709.4 574.5L711.4 569.6M703.2 588.1L691.3 584.8M711.4 569.6L708 566.4L704.9 563.2M704.9 563.2L690.2 571.9M691.3 584.8L690.2 571.9M781.8 429.5L783.4 443.5M783.4 443.5L771.2 450.4M765.2 432.6L781.4 429M765.2 432.6L763.2 447.2M771.2 450.4L763.2 447.2M806.6 430L792.2 407.3M792.2 407.3L816.3 410.6M817.6 454L803.2 449.5M803.2 449.5L803.3 444.6L804.3 439.8L806.9 435.3L807.2 430.4M781.8 429.5L786 428.7L790.1 430.8L794.2 429L798.3 429.2L802.4 430.2L806.6 430M783.4 443.5L786.8 446.1L790.4 448.3L793.9 450.8L797.6 453M803.2 449.5L797.6 453M781.4 429L780.8 413.8M780.8 413.8L784 410.6L788.3 409.3L792.1 407.2M794.8 392.2L797.8 389.2M797.8 389.2L815.2 388.8M681.3 404.5L681.9 391.1M681.3 404.5L677.3 406L673.7 408.3L670.2 410.7M669.9 410.5L664.7 385.8M681.9 391.1L664.8 385.7M644.2 397.9L664.7 385.8M644.2 402.8L648.5 408M648.5 408L669.9 410.5M687.2 385.2L705.7 391M687.2 385.2L687.1 381L686.5 376.9L684.5 373.2M700.7 367.1L694.9 368.2L689.2 369M684.5 373.2L689.2 369M534.1 326.3L531.7 329.8M534.1 326.3L529.3 313.1M529.3 313.1L522.7 310M522.7 310L515.3 312.4M515.3 312.4L508.6 330M531.7 329.8L527.1 330.7L522.4 330.2L517.8 329.8L513.2 328.8L508.6 330M515.3 312.4L495.1 303.6M508.6 330L505 333L500.8 335.4L497.8 339.1M519.7 368.7L518.3 364.7L519.2 360.4L517.5 356.4L516.8 352.3L516.9 348.1M519.7 368.7L539.7 366.1M539.7 366.1L538.9 351.3M538.9 351.3L530 343.3M530 343.3L525.6 344.7L520.8 345.3L516.9 348.1M517.4 370.8L519.7 368.7M497.8 339.1L502.2 339.8L505.2 343.2L509.4 344.3L512.7 347L516.9 348.1M534.1 326.3L538.1 326.1L542.2 326.3L546.2 326.6L550.3 326.2L554.2 327.8M531.7 329.8L531.2 334.3L530.5 338.8L530 343.3M550.2 344.3L550.3 339.9L553.2 336.3L552.7 331.8L554.2 327.8M550.2 344.3L545.9 345.7L542 348L538.9 351.3M484.2 391L485.6 395L485.9 399.3L487.3 403.3L489.1 407.2L490 411.3L491.9 415.2L491.9 419.6M454.7 423.8L484.4 427.4M491.9 419.6L484.4 427.4M446.7 451.4L455.8 461.6M446.7 451.4L448.1 447.4L447.7 443L447.9 438.7L450.1 434.9L451.1 430.7L451.3 426.5M455.8 461.6L484.1 450.3M446 521L442 522.2L438 522L433.9 521.5L429.8 520.9L425.8 521.8L421.7 521.3L417.8 523L413.7 523M413.7 523L412.7 518.6L412.8 514.2L415 509.9L415 505.5L413.1 501.1L413 496.7L415.4 492.3L414.2 487.9M414.5 487.6L418.5 486.8L422.5 486.7L426.5 486.1L430.6 487.1L434.6 487.8L438.6 485.9L442.6 486.9L446.6 485.8L450.7 487.4L454.7 486.6M443.7 636.7L453.7 629.3M446.4 588.2L449.6 592.2L453.6 595.5M206.2 824.6L206.4 820.3L203.9 816.5L204.2 812.1L202.7 808.1L201.2 804.1L200.9 799.8M159.4 829.7L158.3 825.1L159.2 820.6L159 816L159.2 811.4L158.2 806.9L158.4 802.4M158.4 802.4L162.4 802L166.3 800.9L170.5 801.8L174.3 799.9L178.3 799.7L182.2 798.7L186.3 798.9L190.4 799.1L194.3 797.8L198.3 798.1M198.3 798.1L200.9 799.8M245.9 806.9L246.1 811.2L245.2 815.4L243.5 819.5L243.3 823.8L243.4 828.1M245.9 806.9L230.4 789.7M200.9 799.8L230.4 789.7M154.2 770.2L156.5 767.2M152.2 795.3L158.4 802.4M198.3 798.1L194.6 763.3M156.5 767.2L160.7 766.9L164.9 765.5L169.3 767L173.4 765.5L177.6 764.2L182 765.9L186.2 764.5L190.3 763L194.6 763.3M230.4 789.7L236 764.5M236 764.5L195.8 761.8M194.6 763.3L195.8 761.8M244.6 755.4L241.9 737.5M244.6 755.4L236 764.5M241.9 737.5L237.5 737.8L233.3 736.9L229.2 735.1L225.2 733.5L220.9 733.1L216.7 732.3L212.3 732.3L208.2 730.9L203.7 731.4L199.5 730.6L195.3 729.5M195.8 761.8L196 757.8L195.8 753.8L194.4 749.7L195.7 745.7L196.3 741.6L196.5 737.6L195.2 733.6L195.3 729.5M448.8 801L451.1 797.1M406.7 763.2L413.9 758.2M413.9 758.2L449.5 768.8M443.3 660.4L457.9 674.9M481.6 634.9L477.5 634.9L473.8 632.6L469.9 631.5L465.5 632.4L461.7 630.7L457.7 630L453.7 629.3M481.6 634.9L488 656.3M488 656.3L457.9 674.9M285.5 828.8L286.7 824.5L284.6 820.3L284.4 816L284.2 811.7L285 807.5L285.4 803.2M319.4 791.8L285.4 803.2M245.9 806.9L273.9 794.2M244.6 755.4L248.9 755.9L252.6 757.8L255.5 761.5L259.8 761.9L263.8 763.1L267.8 764.3L271.1 767M271.1 767L272.4 771.5L272.2 776.1L271.9 780.7L273.4 785.1L273.2 789.7L273.9 794.2M273.9 794.2L285.4 803.2M280.4 587L277.2 626.6M321.6 598L322.6 628.4M277.2 626.6L322.6 628.4M160 627.5L190.1 634.3M147.6 638.6L146.2 644.3L146 650.3M188.2 662.4L187.8 658.4L188 654.3L190 650.4L188.8 646.3L190.2 642.4L188.6 638.2L190.1 634.3M188.2 662.4L162 669.3M162 669.3L159.5 665.9L157.3 662.4L153.6 660.1L150.5 657.3L148.4 653.6L146 650.3M154.2 770.2L113.2 754.3M113 801.1L108.7 760.6M113.2 754.3L108.7 760.6M365.2 626.4L323 628.8M368.3 660.7L326.2 663.9M323 628.8L322 658.1M326.2 663.9L322 658.1M372.3 665.5L403.9 660.2M372.3 665.5L368.3 660.7M371.8 620.3L365.2 626.4M368.7 694.3L372.3 665.5M330.3 689.9L326.2 663.9M272.3 659.4L284.4 669.7M272.3 659.4L271.2 631.3M284.4 669.7L322 658.1M271.2 631.3L277.2 626.6M285.8 693L284.4 669.7M285.8 693L322.2 701.8M577.4 649.3L565.3 630.2M577.4 649.3L585.6 631.8M565.3 630.2L570.2 628.9L575.2 627.5L579.4 624.4M585.6 631.8L579.4 624.4M589.2 631.8L591.1 635.9L592.5 640.2L596.7 643L598.6 647.1L599.1 652L602.1 655.5M589.2 631.8L585.6 631.8M602.1 655.5L586.5 666.5M586.5 666.5L581.9 664L577.8 660.8M577.8 660.8L577.4 649.3M558.9 628.7L565.3 630.2M561.7 607.5L565.7 607.7L569.4 609.8L573.2 611L577.3 611.2L581.3 611.5M581.3 611.5L579.4 624.4M558.9 628.7L554.1 631.5M577.8 660.8L554 660.7M554.1 631.5L554 660.7M505.2 684.7L500.6 662.2M533.2 657.2L529.1 656.5L525.2 658.5L521.2 658L517.2 658.8L513.2 658.5L509.1 658.7M546.1 665L545.3 669.4L543.5 673.6L544.9 678.3L544.1 682.7L543.5 687L542 691.3M505.7 659.6L500.6 662.2M483.9 705.2L480.6 701.9L476.5 700L472.1 698.2L469.4 694.2L464.5 693.4L461.5 689.7L457.5 687.5M483.9 705.2L505.2 684.7M488 656.3L492 658.5L496.6 659.7L500.6 662.2M457.9 674.9L457.5 687.5M577.6 701.1L589.9 686.7M589.9 686.7L586.5 666.5M554 660.7L546.1 665M576.4 730.5L578.7 728M534.8 727.7L529.5 723.7M529.5 723.7L532.6 698.9M533.2 657.2L532.7 634.7M509.1 658.7L511.6 655.3L511.9 650.7L515.8 648.1L517.5 644.3L518.1 639.9L520.5 636.4L521.4 632.2L524.4 629.1M524.4 629.1L532.7 634.7M554.1 631.5L546.3 629.2M546.3 629.2L532.7 634.7M558.5 603.3L561.7 607.5M558.5 603.3L539.4 608.5M546.3 629.2L539.4 608.5M491 800.7L486.6 800.1L482.1 799.6L477.6 800.3L473.2 799.5L468.8 799.2L464.3 799.6L460 798.2L455.5 797.8L451.1 797.1M493.2 803L497.6 828.5M493.2 803L531.8 793.1M538.8 800.4L533.6 825.6M486.1 719.7L459.2 737.4M486.1 719.7L489.4 722.2L493.3 723.8L495.9 727.4L500 728.6L503 731.5L506.8 733.3M457.3 760.6L459.2 737.4M457.3 760.6L461.6 761.9L465.9 762.7L470.4 760.9L474.8 761.2L479 763.1L483.2 764.4L487.8 762.3L492 764.8L496.4 764.4M496.4 764.4L502 760.9M529.5 723.7L525.7 725.3L521.9 726.9L518.4 729.2L513.9 729.2L510.3 731.2L506.8 733.3M483.9 705.2L486.1 719.7M527.5 774.2L502 760.9M491 800.7L496.4 764.4M620.6 554.2L618.6 550.1L614.6 547.5L612.9 543.2M620.6 554.2L618.3 563.3M618.3 563.3L605 568.9M612.9 543.2L593 547.8M600 566.2L605 568.9M600 566.2L592.7 548.6M602.1 655.5L605.3 654M599.5 627.1L600.6 631.6L600.6 636.3L602.7 640.5L602.8 645.2L603.6 649.7L605.3 654M581.3 611.5L586 608.3M603 610.5L604.3 620.8M603 610.5L596.2 606.1M596.2 606.1L591.3 608L586 608.3M599.5 627.1L604.3 620.8M623.2 590.5L605.7 581.8M623.2 590.5L622.4 602.7M603 610.5L622.2 602.9M596.2 606.1L597.3 601.1L597.1 596.1L596 591.2M605.7 581.8L601.8 584.3L599.4 588.2L596 591.2M640.7 661.8L641.8 628.9M664.7 635.9L644.4 627.1M641.8 628.9L644.4 627.1M578.7 728L583.2 727.5L587.6 728.5L591.9 729.6L596.2 730.9L600.7 730.8L605 732.4L609.6 730.9L613.9 732.2M618.2 764.7L620.1 761.3M620.1 761.3L613.9 732.2M625.9 706.3L624.4 719.4M624.4 719.4L613.9 732.2M418.1 417.9L414.4 421.5L411.4 425.8M411.4 425.8L413.4 430.1L413.8 434.7L413.8 439.5L415 444L415.2 448.7L416.9 453M414.5 487.6L412.9 459.6M455.8 461.6L456.4 465.8L456.4 469.9L456.1 474.1L456.3 478.3L453.7 482.4L454.7 486.6M416.9 453L412.9 459.6M371 392.3L371.4 396.7L372.4 401.1L371.1 405.6L373.4 409.9L371.9 414.4L372.7 418.8L373.9 423.1M371 392.3L366.8 391L362.6 391.7L358.4 391.8L354.2 391.7L350 391.9L345.8 390.4L341.6 390.2L337.4 390.2L333.2 392.1L329 391L324.8 391M324.8 391L323.4 395L323.3 399.2L324.5 403.5L323.6 407.5L322.2 411.6L321.2 415.6L321.8 419.9M321.8 419.9L325.8 421.3L330 421.3L334.2 421.3L338.3 421.6L342.5 421.9L346.7 422.3L350.6 423.9L354.9 423.7L358.9 424.5L363 425.4L367.2 425.5L371.2 427M371.2 427L373.9 423.1M373.9 387.9L371 392.3M411.4 425.8L407.2 425.2L403.1 425.1L399 423.7L394.8 423.7L390.6 423.2L386.4 423L382.3 423.1L378.1 422.4L373.9 423.1M469.7 241.6L487.1 242.3M497.1 266.1L490.9 283.6M497.1 266.1L495.6 252.9M495.6 252.9L493.2 249L490.1 245.7L487.1 242.3M425.3 11.3L428.8 14.6L433.6 15.5L437.2 18.6M453.8 16.4L437.2 18.6M453.8 16.4L457.5 11.3M457.5 11.3L457.6 6.2L455.8 1.4L454.5 -3.5M334.9 458.8L333.6 463L333.7 467.5L333.4 471.9L332.2 476.1L330.3 480.2L330.2 484.7M334.9 458.8L367.7 450.3M330.2 484.7L368.8 494.8M367.7 450.3L370.7 454.3M370.7 454.3L370.2 458.6L371 462.8L371.9 467L372.3 471.2L373.8 475.3L374.6 479.4L375 483.7L374.2 488M368.8 494.8L374.2 488M412.9 459.6L370.7 454.3M371.2 427L367.7 450.3M414.2 487.9L409.8 487.6L405.3 488.7L400.9 486.8L396.4 488.8L392 486.9L387.6 487.9L383.1 488.9L378.7 486.7L374.2 488M411.1 526.8L413.7 523M368.6 516.6L367.7 512.2L369.4 507.9L369.7 503.5L369.8 499.1L368.8 494.8M319.7 422.9L281.6 423.2M319.7 422.9L322.1 445.8M322.1 445.8L287.7 462.6M277.7 426.9L277.1 451.9M277.1 451.9L280.8 455.3L285 458.2L287.7 462.6M282.7 390.6L283.5 394.7L282.7 398.8L281.8 402.8L281.5 406.9L282.2 411L282.9 415.1L281.4 419.1L281.6 423.2M321.8 419.9L319.7 422.9M334.9 458.8L322.1 445.8M243.9 417.3L277.7 426.9M242 462.3L240.3 460.8M240.3 460.8L239.3 456.4L238.9 451.9L240.8 447.4L239.8 443L239.4 438.6L239.4 434.1L238.5 429.7L239.8 425.2L238.7 420.8M330.2 484.7L327.6 488.6L324.2 491.7L319.9 493.8M319.9 493.8L315.8 492.7L311.7 491.3L307.5 490.5L303.3 489.5L299.6 486.7L295.5 485.4L291.1 485.4M360.4 526.4L324.6 523.4M319.9 493.8L324.6 523.4M317 551.3L321.7 558.8M317 551.3L316.7 546.5L318.2 542.1L319.5 537.6L319.2 532.9L320.7 528.4M242 462.3L244.2 482.8M244.2 482.8L281.7 493.6M291.1 485.4L287.4 487.5L285.2 491.3L281.7 493.6M66.5 772.7L70.2 767.7M68.5 788L72.4 792.4L76.5 796.7M70.2 767.7L108.7 760.6M112.1 801.9L76.5 796.7M76.5 796.7L75.9 801L74 805.1L73.8 809.5L74 814L72.5 818.1L72.2 822.5L70.5 826.6L70.7 831.1L69.4 835.2M18.6 798.3L-19.4 800.9M-19.4 668.6L-15.6 667.1L-11.5 666.6L-7.6 665.4L-3.9 663.5L0.5 664.1L4.4 662.7L8 660.3L11.9 659.2L15.8 658L20.1 658L24 656.9M24 656.9L24 633.6M24.5 632.8L17.9 593M-16.9 597.2L17.9 593M208.6 459L200.2 486.2M183.8 493.9L200.2 486.2M164.3 483.7L163.4 479.3L163.7 474.8L162.9 470.4L161.1 466.2L160.7 461.7M240.3 460.8L235.7 461.1L231.3 459.1L226.7 460.6L222.2 460L217.7 459.1L213.2 458.1L208.6 459M231.4 503L200.2 486.2M153.7 456.1L160.7 461.7M185.9 520.7L186.1 516.2L186.4 511.6L185.3 507.2L184.3 502.8L185.4 498.2L183.8 493.9M231.4 503L232.1 507.5L232.5 512.1L233.1 516.7M118.6 530.5L108.3 515.7M118.6 530.5L149.6 526.5M149.6 526.5L150.4 494.3M150.4 494.3L114.3 491.9M108.3 515.7L107.9 498.9M107.9 498.9L114.3 491.9M74 553.9L74.3 549.7L73.1 545.7L72.9 541.5L71.1 537.6L70.9 533.5M70.9 533.5L74.2 530.8L78 529L81.8 527.4L86.2 527.1L89.7 524.7L93.8 523.7L97.6 522.2L100.8 519.1L104.2 516.8L108.3 515.7M115.6 553.1L116.2 548.6L117.7 544.2L116.4 539.4L117.4 534.9L118.6 530.5M158.7 533.1L158 537.2L158.6 541.3L159.4 545.4L159.1 549.5L161 553.5L160.3 557.7M158.7 533.1L149.6 526.5M160.3 557.7L155.2 565.3M158.7 533.1L162.8 531.8L166 528.4L170.4 527.9L174 525.3L178.1 524L182 522.3L185.9 520.7M164.3 483.7L150.4 494.3M116.9 462.8L115.8 466.9L117.3 471.2L115.6 475.3L114.8 479.4L114.7 483.6L115.9 487.9L114.3 491.9M71.8 486.8L107.9 498.9M60.3 524L63.7 492.9M241 11.3L241.9 7L239.7 2.9L239 -1.3L239.7 -5.6M313.8 85.6L311.6 89.2M332.7 111.2L313.6 98.9M311.6 89.2L313.6 98.9M295.4 63.8L285.5 86.6M311.6 89.2L285.5 86.6M269.8 79.4L273.2 81.6L276.6 83.8L280.7 84.8L283.8 87.5M285.5 86.6L283.8 87.5M269.8 154.1L268.1 150.2L268 146.1L267.8 141.9L268.1 137.7L266.8 133.8M266.8 133.8L237.4 125.5M257.1 86.5L257.5 102.6M235.4 111.1L237.5 114.8M257.5 102.6L253.2 104.5L249 106.7L245.7 110.2L241.3 112.1L237.5 114.8M362.3 184.2L362.6 180L362.3 175.8L364.4 171.8L365 167.6L364 163.3L364.7 159.2L365 155M334.1 159.3L338.6 154.9M338.6 154.9L365 155M305.6 132.6L305.2 137.5L303.7 142.3L305.8 147.4L304.3 152.2M305.6 132.6L309.6 130.4L314.1 129.6L318.9 129.9L322.6 126.8L327.1 126.2L331.5 124.9M331.5 124.9L333.9 127.4M368.5 152.2L365 155M365.5 116.1L364.7 120.4L365 124.6L365.7 128.8M365.5 116.1L369.7 114.9L372.2 111.1L376.9 110.7L379.7 107.4M379.7 107.4L396.8 112.3M368 131.9L365.7 128.8M368 131.9L395.6 124M395.6 124L397.4 118.2L396.8 112.3M331.5 124.9L332.8 120.4L333 115.8L332.7 111.2M360.7 109.1L365.5 116.1M333.9 127.4L338.4 128.5L343 126.7L347.5 128.9L352.1 129L356.6 129.7L361.2 127.6L365.7 128.8M376.7 89.9L378.5 94.1L377.3 98.8L379.9 102.8L379.7 107.4M405.3 101.1L396.8 112.3M368.5 152.2L369.4 148.1L368.7 144.1L369.5 140L368.6 136L368 131.9M405.5 137.5L403.9 133.5L401.1 130.4L397.3 127.9L395.6 124M471 124.1L474.9 125L479 125.3L482.9 126.1L486.6 128L490.4 129.1M485.8 153.3L493.2 144.4M493.2 144.4L490.4 129.1M477.5 96L480.9 99.2L484.8 101.6L489.5 102.8L493.5 105.1L496.7 108.7M477.5 96L474.9 99.2L473 102.8L472.5 107L470.5 110.5L468.8 114.2M583.3 7.7L561.3 5.1M583.3 7.7L582.2 3.2L584 -1.4L582.7 -5.9L583.3 -10.5M445.5 43.9L446.7 48.2L446.1 52.7L446.6 57.1M446.6 57.1L430.3 65M430.3 65L423.2 40.5M423.2 40.5L435.9 39.5M454.9 37.1L450.3 40.6L445.5 43.9M454.9 37.1L453.8 16.4M437.2 18.6L435.9 39.5M413 38L418.1 39.1L423.2 40.5M798.6 667.8L802.9 666.5L806.7 663.9L810.9 662.5L815.3 661.2L818.9 658.3L823.2 657.1M809.3 631.5L794 655.2M809.3 631.5L814.4 632.3M816.2 531.4L805.4 524.6M814.3 549.2L810.8 550.1M805.4 524.6L801.2 526.5M801.2 526.5L796.8 548.6M796.8 548.6L810.8 550.1M708.9 665.6L751.8 659.9M794 655.2L788.2 641.5M788.2 641.5L784.2 642.4L780 640.9L776.1 642.9L772 642.7L767.9 642.4L763.9 642.8M752.8 660.4L754.5 656.6L757.8 653.7L758.6 649.3L761.6 646.3L763.9 642.8M691.3 584.8L686.6 588.9M685.1 604L686.6 588.9M685.1 604L668.8 610.9M647.8 612.5L644.4 627.1M647.8 612.5L661.7 606.7M668.8 610.9L661.7 606.7M686.6 588.9L681.8 588.8L677.1 588.4L672.6 586.4L667.8 586.4M661.7 606.7L661.3 602.4L662.9 598.1L660.8 593.8L662 589.6M662 589.6L667.8 586.4M709.3 492.4L728.4 482.4M709.3 492.4L701.6 484.3M701.6 484.3L700.6 480L701.5 475.6L700.8 471.3M728.4 482.4L729.1 477.9M715.5 467.6L729.1 477.9M605.3 371.1L609.2 369.3L613.2 367.6L616.3 364.3L620.5 363.1M596.4 365.1L605.2 348.7M620.5 363.1L620.7 351.7M605.2 348.7L611.1 345.3M590.1 385.9L604.5 388.6M590.1 385.9L587.9 381.7L587.2 377L585.6 372.6L584.7 368M606.5 387.4L605.3 371.1M606.5 387.4L604.5 388.6M628.8 377.7L628.8 380.8M628.8 377.7L620.5 363.1M618.4 387.3L606.5 387.4M583.9 346.6L588.2 346.6L592.3 348.2L596.6 348.6L600.8 349.1L605.2 348.7M583.9 346.6L586.9 343.6L587.2 339.3L589.7 336L591.2 332.3L593.2 328.8M608.8 331.2L608.8 336L609.3 340.8L611.1 345.3M608.8 331.2L601.2 328M593.2 328.8L601.2 328M604.5 388.6L603.4 393.4L602.8 398.2L602.9 403.1L602.7 407.9M602.7 407.9L605.2 409.9M622.4 411.7L605.2 409.9M624.1 424.9L622.4 411.7M624.1 424.9L618.4 433.6M605.2 409.9L603.8 428.6M620 445.9L618.4 433.6M610.2 451.5L593.8 448.8M603.9 428.8L602.2 433L599.4 436.6L597.5 440.7L595.6 444.7L593.8 448.8M590.4 410.1L588.5 415L587.2 420L587.4 425.2M590.4 410.1L585.9 407.6L582.2 404L578.1 401M578.1 401L565.2 414M580.1 431.7L575.7 429.7L572.1 426.6L568.7 423.3L564.8 420.7M564.8 420.7L565.2 414M602.7 407.9L590.4 410.1M603.8 428.6L587.4 425.2M590.1 385.9L587.7 389.5L583.5 391.2L580.8 394.5L577.9 397.6M577.9 397.6L578.1 401M580.8 441.6L588.8 450M580.8 441.6L580.1 431.7M564 447.4L554.6 428M554.6 428L564.8 420.7M553.7 405.1L536.8 410.1M536.8 410.1L545.2 429.3M554.6 428L549.8 428L545.2 429.3M553.7 405.1L554.4 400.9L553.4 396.6L554.2 392.4M534.7 408.9L536 404.4L535.9 399.6L538.2 395.5L538.9 390.9L540.8 386.7M534.7 408.9L536.8 410.1M554.2 392.4L541.5 386.1M540.8 386.7L536.8 387.4L532.8 386.7L528.7 386.5L524.7 388L520.7 387.5M539.7 366.1L543.1 369M541.5 386.1L542.6 381.9L542.4 377.5L541.6 373.1L543.1 369M731.7 368.8L727.4 364.8M731.7 368.8L751.6 367.2M751.6 367.2L751.7 349M726.9 359.1L727.4 364.8M726.9 359.1L738.7 344.4M751.7 349L738.7 344.4M758.9 370.9L760.7 370.2M758.9 370.9L751.6 367.2M760.7 370.2L769.3 349.1M769.3 349.1L761.2 343.1M751.7 349L756.7 346.6L761.2 343.1M779.8 349L777.4 326.3M773.6 325L777.4 326.3M773.6 325L770.2 327.4L767.1 330.2L763.2 332.1L760.6 335.5M760.6 335.5L761.2 343.1M726.9 359.1L715.5 346.8M727.4 364.8L708.7 372.3M700.7 367.1L701 346.9M715.5 346.8L710.7 347.5L705.9 347.8L701 346.9M760.6 335.5L757.3 332.3L753.3 330.1L749 328.4L745.8 325M738.7 344.4L737.5 330.1M497.1 266.1L523.8 268.9M495.6 252.9L519.7 248.4M519.7 248.4L523.8 268.9M578.2 349.2L583.1 367.1M578.2 349.2L575.1 347.5M575.1 347.5L561.8 353.6M583.1 367.1L579.2 369.9L574.4 370.7L570.1 372.7L566.1 375.1M561.8 353.6L555.7 367.7M566.1 375.1L555.7 367.7M583.9 346.6L578.2 349.2M584.7 368L583.1 367.1M579.8 322L584.5 323.8L589 326.1L593.2 328.8M579.8 322L576.6 325.5L571.6 326.9L568.6 330.8M568.6 330.8L575.1 347.5M550.2 344.3L554.7 346.5L557.2 351.3L561.8 353.6M566 387L564.8 381L566.1 375.1M543.1 369L555.7 367.7M583.3 7.7L589 12.6M589 12.6L588.4 20.6M565.5 29.5L560.2 7.1M565.5 29.5L575.7 30.4M561.3 5.1L560.2 7.1M575.7 30.4L578.3 27.1L582.6 26.2L585.2 23L588.4 20.6M518 392.8L520.3 407M491.9 419.6L498.4 420M498.4 420L520.3 407M534.7 408.9L526.3 409M545.2 429.3L539.3 436.7M526.3 409L525.2 413.2L526.1 417.5L525.2 421.7L526.7 426L526 430.2M539.3 436.7L534.3 435.7L530.6 432L526 430.2M498.4 420L502.2 422.7L505.4 426L508.5 429.5L512.1 432.4M526 430.2L512.1 432.4M556.9 490.9L559.7 494.3L560.9 498.2L560.9 502.8L563.3 506.3M563.3 506.3L536.7 512.5M555 489.5L544.1 492.3M536 511.5L544.1 492.3M446 521L449.2 524.1L451.5 528.1L454.4 531.4L458.4 533.6L461.6 536.8M461.6 536.8L460.8 541.2L461.2 545.7L460.8 550.2L460.2 554.6M481.6 634.9L489.9 621.5M505.7 659.6L511.8 628.2M524.4 629.1L522 626M145.2 725.1L147.3 721.2L147.3 716.8L147.5 712.4L150 708.6L150.1 704.2L151.6 700.2L152.5 696M145.2 725.1L148.4 728.3L152.4 730.4L155.2 734L158.1 737.4M156.5 693.2L152.5 696M156.5 693.2L160.4 694.4L164.4 695.1L167.2 698.9L171 700.2L175.2 700.4L178.3 703.5L182.2 704.4L186.1 705.4L190 706.4L193.6 708.4M193.6 708.4L193.4 727M156.5 767.2L157.7 763L156.2 758.7L157.9 754.5L158.6 750.3L156.4 745.9L157 741.7L158.1 737.4M112.9 731.7L113.2 754.3M112.9 731.7L117.1 732L121.2 731.3L125.2 730.3L128.8 727.3L133.2 728.2L137.1 726.6L141.1 725.6L145.2 725.1M195.3 729.5L193.4 727M162 669.3L161.9 673.5L161.3 677.5L160.4 681.5L158.5 685.3L156.9 689.1L156.5 693.2M146 650.3L111.9 666.4M112.1 684.8L111.9 666.4M112.1 684.8L152.5 696M406.2 726.5L413.5 735.8M406.2 726.5L408.6 696.5M413.5 735.8L443.5 721.7M408.6 696.5L410.9 694.3M410.9 694.3L442.2 701.4M442.2 701.4L441.2 705.5L442.1 709.5L443.6 713.5L442.4 717.7L443.5 721.7M367.5 756.9L366.2 752.5L365.1 748L363.8 743.5L363.6 738.8L363.4 734.2M367.4 728.5L406.2 726.5M413.9 758.2L413.5 735.8M459.2 737.4L443.5 721.7M411.5 668.4L410.3 672.7L411 677L410.1 681.3L412.2 685.7L410.1 690L410.9 694.3M457.5 687.5L442.2 701.4M320.7 770.3L319.2 772.7M319.2 772.7L315 772.5L311 771.6L306.9 770.8L303.2 768.5L299.3 767.1L294.9 767.8L290.9 766.6L287.3 764L282.9 764.5L279.1 762.9M279.1 762.9L281.5 759.5L282.5 755.5L283 751.2L285.2 747.7L287.6 744.3L288.2 740.1L289.5 736.3L292 732.9M318.6 731.6L314.2 733L309.8 733L305.3 732.8L300.8 731.7L296.4 731.7L292 732.9M364.8 761.2L320.7 770.3M319.4 791.8L319.2 772.7M323.4 726.4L318.6 731.6M271.1 767L279.1 762.9M273.9 716.3L242.6 735.9M242.6 735.9L241.9 737.5M275.1 705.5L285.8 693M199.2 670.8L227.7 662.1M227.7 662.1L231.7 664.5L234.3 668.4L238.2 670.8L241.2 674.3M241.2 674.3L240.5 680.2L241.2 686M193.6 708.4L199.3 701.7M188.2 662.4L199.2 670.8M228 635.4L224 634.6L220.2 633.4L217.4 629.6L213.4 628.8L209.1 628.5L206 625.5L202.2 624.3M228 635.4L226.8 639.8L228.8 644.3L228 648.8L228 653.2L226.5 657.7L227.7 662.1M190.1 634.3L202.2 624.3M275.1 705.5L271.3 703.4L267.5 701.3L263.6 699.4L259.7 697.5L255.8 695.4L253.2 691.4L249.3 689.4L244.6 688.9L241.2 686M245.6 624.4L241.7 626L238.6 628.9L235.1 631L231.6 633.3L228 635.4M272.3 659.4L268 660.3L264.4 662.9L260.9 665.5L256.4 666.1L252.8 668.6L248.8 670.3L244.8 671.9L241.2 674.3M245.6 624.4L245.8 620.3L244.8 616.4L244.1 612.4L243.3 608.4L241.3 604.7L242.5 600.4L240.5 596.7M240.5 596.7L279.9 586.4M568.3 586.1L568.4 581.6L567.8 577.3L565.7 573.3M568.3 586.1L573.1 587.3M573.1 587.3L577.5 586.4L581.6 584L586.3 584.3M565.7 573.2L580 568.6M586.3 584.3L587.5 572.4M580 568.6L587.5 572.4M559.5 596.1L568.3 586.1M559.5 596.1L556.1 593.1L551.7 591.2L547.7 589L544.7 585.2M544.7 585.2L545 580.8L543.6 576.3L544.6 571.8M544.6 571.8L565.7 573.3M558.5 603.3L559.5 596.1M586 608.3L573.1 587.3M596 591.2L586.3 584.3M581.8 553.3L577.3 553.8L573 552.6L568.9 550.9L564.5 550.5M581.8 553.3L582.1 558.5L581.1 563.5L580 568.6M564.5 550.5L564.1 555L565.3 559.5L564.6 564.2L565.1 568.7L565.7 573.2M605.7 581.8L605 568.9M600 566.2L595.8 568.1L592 571L587.5 572.4M581.8 553.3L587.6 551.8L592.7 548.6M616.7 630.3L612.8 653M616.7 630.3L622.4 628.6L628.1 626.7M633 628.5L628.1 626.7M633 628.5L621.1 656.2M621.1 656.2L612.8 653M604.3 620.8L616.7 630.3M605.3 654L612.8 653M622.2 602.9L628.1 626.7M622.4 602.7L627.5 602.6L632.1 604.1L636.9 605.3L641.5 606.8M641.5 606.8L647.8 612.5M641.8 628.9L633 628.5M632.1 663.3L628.5 660.8L624.8 658.5L621.1 656.2M667.8 773.3L665 770.2L663.9 766L662.1 762.3L658.1 760L656.6 756.1M656.6 756.1L661.1 737M661.1 737L669.8 729.4M669.8 729.4L699.8 726.8M620.1 761.3L656.6 756.1M624.4 719.4L628.5 720.5L631.5 723.5L635.2 725.3L639.1 726.5L642.6 728.5L646.3 730.2L650.3 731.2L653.9 733.2L657.3 735.6L661.1 737M657.5 695.8L669.8 729.4M704.9 720.3L699.8 726.8M457.5 11.3L461.8 11.9L465.6 13.7L469.8 14.6M469.8 14.6L471.5 10.7L474.9 8.3L477.5 5.3L479.6 1.8L484 0.2L485.7 -3.7M508.7 30.7L501.8 16.1M508.7 30.7L491.9 39.5M491.9 39.5L488.4 36.9L485 34.2L481 32.3M501.8 16.1L494.7 15.7M494.7 15.7L491.8 19.1L488.4 21.9L484.7 24.5L481.4 27.5M481 32.3L481.4 27.5M469.8 14.6L471.7 18.7L475.9 20.8L477.8 24.9L481.4 27.5M485.7 -3.7L488.2 -0.1L489.9 3.8L492.3 7.4L493.6 11.5L494.7 15.7M454.9 37.1L471.7 40.3M471.7 40.3L481 32.3M22.9 696.5L26.9 693.1M24 656.9L27.3 662.1M27.3 662.1L26.9 693.1M64.8 722.7L70.4 728.2M70.4 728.2L74.5 728.9L78.5 729.1L82.5 729.3L86.6 729.3L90.6 728.7L94.6 730.1L98.7 729.7L102.8 729.3L106.8 730.4L110.8 729.7M61.9 705.7L64.9 702.1L68.5 699L70.3 694.5M70.3 694.5L74.4 692.9L78.9 693.8L83.1 692.7L87.4 692.2L91.6 691.3L95.9 690.8L100.2 690.8L104.3 689.1L108.7 689.4M110.8 729.7L110.6 725.6L110.4 721.6L110 717.6L109.5 713.6L110.5 709.5L108.9 705.6L109.4 701.5L110.3 697.4L108.6 693.5L108.7 689.4M33.5 739L64.8 722.7M26.9 693.1L61.9 705.7M70.2 767.7L70.3 763.3L70.2 758.9L70.2 754.5L70.7 750.1L69.6 745.7L69.8 741.3L69.7 736.9L70.3 732.6L70.4 728.2M112.9 731.7L110.8 729.7M66.3 664.9L70.3 694.5M66.3 664.9L61.9 665.6L57.6 663.9L53.3 663.7L49 663.4L44.5 664.5L40.3 662.7L36 661.9L31.6 662.2L27.3 662.1M112.1 684.8L108.7 689.4M67.4 620.4L71.6 621.3L75.1 624.1L79.1 625.6L83.2 626.7L87.2 628.2L91.4 629.2L94.7 632.4L99.6 631.7L103.1 634.4M67.4 620.4L66.9 624.8L66.8 629.3L68.2 633.6L68.1 638L69.8 642.3L68.1 646.9L69.8 651.1L69.1 655.6L70.4 659.9M103.1 634.4L106.4 660.5M119.9 618.4L116.9 621.9L112.8 624.4L109.2 627.3L107 631.8L103.1 634.4M67.3 620.2L69.6 606.2M69.6 606.2L106.1 587M67.3 620.2L63.5 621.9L59.4 622.3L55.7 624.1L51.6 624.3L48 626.6L43.9 626.8L40.3 629L36 628.9L32 629.6L28.1 630.7L24.5 632.8M66.3 664.9L70.4 659.9M111.9 666.4L106.4 660.5M21.2 492.8L22.1 496.8L22.1 500.9L23.3 504.9L22.8 509L22.5 513.1L23 517.1M-14.3 532.2L-10.1 531.7L-6.7 529.6L-2.9 528.2L1 527L4.2 524.3L8.4 523.8L11.8 521.6L15.3 519.6L19.4 519L23 517.1M60.3 524L55.9 524.3L51.5 524.6L47.6 527.8L42.9 526.3L38.9 528.5L34.6 529.2M34.6 529.2L31.6 526.2L29.1 522.9L25.5 520.5L23 517.1M21.7 586.5L18.1 562.8M21.7 586.5L25.9 586.3L29.8 588.3L33.9 588.3L38.1 587.1L42.1 588.5L46.2 589.1L50.3 588.4L54.3 590.5L58.4 590.1M63.1 563.4L58.4 590.1M63.1 563.4L58.6 562.9L54.5 560.6L50.3 558.9L45.9 558.1L41.1 558.4L37.4 555L33 554.1L28.4 553.9M28.4 553.9L25.5 557.5L22.2 560.6L18.1 562.8M17.9 593L21.7 586.5M-15.3 550.5L18.1 562.8M69.6 606.2L66.4 602.5L64.8 597.6L61.8 593.7L58.4 590.1M74 553.9L63.1 563.4M34.6 529.2L34.5 533.5L32 537.3L31.2 541.5L30.3 545.7L28.5 549.6L28.4 553.9M274.6 125.8L275.1 109.9M303.4 130.4L302.4 110.9M302.4 110.9L282.2 100.9M282.2 100.9L278.9 105.6L275.1 109.9M266.8 133.8L274.6 125.8M257.5 102.6L261.6 105.1L266.7 105.2L270.5 108.4L275.1 109.9M305.6 132.6L303.4 130.4M313.6 98.9L311.4 102.5L308.7 105.5L304.8 107.5L302.4 110.9M283.8 87.5L284 92.1L282.4 96.4L282.2 100.9M490.7 175.5L516.9 159.1M516.9 159.1L516.8 151.7M500 107.2L496.7 108.7M500 107.2L517.2 111.7M490.9 128.7L515 125.9M515 125.9L516.7 121.3L515.3 116.2L517.2 111.7M500 107.2L500.2 102.6L502.7 98.6L503 94.1L504.7 89.9M504.7 89.9L521.2 92.3M517.2 111.7L521.6 108.2M580.7 107L563.1 106.2M580.7 107L581.8 102.6L581.6 98.2L580 93.9L580.2 89.5M573.9 84L580.2 89.5M573.9 84L565.3 89M565.3 89L563.1 106.2M560 130.7L555.4 109.2M560 130.7L564.2 129.4L568.6 129L573 129.2L577.4 129.4M581.8 108.1L577.4 129.4M581.8 108.1L580.7 107M555.4 109.2L563.1 106.2M595.1 108.6L581.8 108.1M595.1 108.6L608.1 101.5M580.2 89.5L585 88L590 87L594.1 83.9L598.9 82.4M598.9 82.4L601.4 86.2L604.3 89.6L606.5 93.6L609.1 97.2M608.1 101.5L609.1 97.2M630.1 12.7L645.4 12.7M630.1 12.7L625.5 4.1M645.7 -7.6L646.2 -3.5L645.1 0.5L644.4 4.6L646.5 8.7L645.4 12.7M589 12.6L602 5.8M602 5.8L602.9 0.6L602.2 -4.7L603.9 -9.7M608.8 8.8L602 5.8M477.1 93.4L479.7 90L482.7 87L486 84.2M486 84.2L483.6 80.2L483.5 75.5L483.2 70.9L481.8 66.6L480 62.4M456 82.2L456.5 77.5L456.6 72.8L457.8 68.3M457.8 68.3L473.2 59.8M473.2 59.8L480 62.4M477.5 96L477.1 93.4M504.7 89.9L500.7 86.9L498.5 82.5M498.5 82.5L486 84.2M450.1 86.1L456 82.2M498.5 82.5L506 68.8M498.8 56L494.5 58.7L489 58L484.8 61.2L480 62.4M502 57.3L502.5 61.4L503.5 65.3L506 68.8M446.6 57.1L451 60.1L453.2 65.4L457.8 68.3M471.7 40.3L472.6 45.1L472.4 50L472.5 54.9L473.2 59.8M498.8 56L491.9 39.5M805.4 524.6L809.1 513.6M817.2 506.1L809.1 513.6M822.4 572.7L818 571.4L813.5 571L808.9 571.6M807.1 594.7L799.7 582.4M808.9 571.6L804.8 574.2L800 574.7M800 574.7L799.7 582.4M822.1 612.2L805.3 606.1M810.8 550.1L811.2 554.5L809.2 558.6L808.8 562.9L809.3 567.3L808.9 571.6M796.8 548.6L789.6 552.6M788.4 563.7L800 574.7M802.8 607.7L795.7 606.2M802.8 607.7L799 623.3M795.7 606.2L773.7 614.7M787.4 631.2L774.2 622.6M773.7 614.7L774.2 622.6M805.3 606.1L802.8 607.7M781.3 591.5L795.7 606.2M781.3 591.5L784.7 589.1L788.8 588L792.6 586.5L795.9 584L799.7 582.4M809.3 631.5L799 623.3M788.2 641.5L787.4 631.2M763.9 642.8L764.4 638.1L766.7 633.7L766.3 628.8M766.3 628.8L774.2 622.6M781.3 591.5L777.2 590.8M766.6 603.9L767.5 598.7M766.6 603.9L768.9 607.6L771.3 611.1L773.7 614.7M777.2 590.8L767.5 598.7M788.4 563.7L775.5 571.8M777.2 590.8L775.9 586.1L775.1 581.4L775.6 576.6L775.5 571.8M781.2 546L777 547.9L772.4 547.9L768.1 549.7L763.5 549.7M781.2 546L789.6 552.6M763.5 549.7L763.6 554.7L765.2 559.5L766.3 564.4L766 569.5M775.5 571.8L766 569.5M766.6 603.9L751.9 609.7M751.3 624.9L756.5 625.3L761.3 627.6L766.3 628.8M751.3 624.9L751 620.6L750.6 616.2L748.7 612.2M748.7 612.2L751.9 609.7M748.9 654.3L743.5 634.1M748.9 654.3L745 652.1L741.5 649.4L737.6 647.2L734 644.8L729.4 643.8L725.1 642.5L721.8 639.3M743.5 634.1L728.9 627.7M728.9 627.7L723.8 629.6M723.8 629.6L722.3 634.4L721.8 639.3M751.8 659.9L748.9 654.3M751.3 624.9L743.5 634.1M708.6 657.9L712.1 654.8L713 649.8L715.8 646.2L719.7 643.4L721.8 639.3M748.7 612.2L736 610.3M736 610.3L734.8 614.9L733.6 619.4L729.9 623L728.9 627.7M720.1 627.3L723.8 629.6M713.4 607.3L729.1 600.8M736 610.3L731.7 606.1L729.1 600.8M612.9 543.2L613.8 538.7L615.4 534.5M593 547.8L592.3 543.3L590 539.3L588.6 535L587.7 530.5M587.7 530.5L592.5 527.9L596.5 524.2M596.5 524.2L615.4 534.5M636.5 548.8L622.5 528.3M636.5 548.8L620.6 554.2M615.4 534.5L618.9 531.3L622.5 528.3M648.5 408L646.8 411.8L646.5 415.8L646.1 419.8L646.3 423.9M639.5 427.8L646.3 423.9M670.2 410.7L672.5 424.6M646.3 423.9L649 427L653.4 428.2L655.2 432.4L659.5 433.6L662.1 437M672.5 424.6L670.7 428.3L666.9 430.5L664.5 433.7L662.1 437M728.4 482.4L730.9 486.6L733.6 490.5M729.1 477.9L738.8 469.6M738.8 469.6L748.4 472.1M733.6 490.5L755.1 486.8M755.1 486.8L748.4 472.1M756.1 449.5L756.9 453.6L755.7 457.9L757.5 461.9L757 466.1M743.2 445.1L736 449.9M738.8 469.6L736.9 464.9L737.4 459.8L736.9 454.8L736 449.9M757 466.1L748.4 472.1M733.6 490.5L734.4 495.3L734.6 500.1L735.1 504.8M758.3 489.5L755.1 486.8M758.3 489.5L749.4 505.2M735.1 504.8L749.4 505.2M801.2 526.5L795.4 525.4L790.1 522.9M781.2 546L779.9 541.7L780.5 536.9L778.6 532.7M760.3 548L758.1 543.9L757.6 539.4L757.1 534.9M757.1 534.9L767.7 526.4M778.6 532.7L767.7 526.4M757.1 534.9L752.5 533.5L747.8 532.1L743.3 530.3M743.3 530.3L754.8 512.2M754.8 512.2L759 512.4L762.9 513.3L766.5 515.4M767.7 526.4L766.5 515.4M623.2 590.5L628.2 584.8M628.2 584.8L629.1 579.6L630.3 574.5M641.5 606.8L644.3 590.4M628.2 584.8L631.9 587.3L636.2 587.8L640 589.8L644.3 590.4M662 589.6L654.2 585.3M644.3 590.4L654.2 585.3M690.2 571.9L683.5 565.7M667.8 586.4L669.1 581.7L668.2 576.6L669.9 571.9M683.5 565.7L669.9 571.9M631.1 466.1L630.3 461.9L629.3 457.7L628.6 453.4L626.8 449.4M631.1 466.1L636.7 467L641.8 469.5M649.3 464.7L646.2 447.1M626.8 449.4L639 445M639 445L646.2 447.1M609.9 465.3L610.2 451.5M609.9 465.3L624.1 472.1M624.1 472.1L631.1 466.1M620 445.9L626.8 449.4M666.8 466.5L649.3 464.7M666.8 466.5L668.4 462L669.9 457.4L671.1 452.8M671.1 452.8L668.6 449.4L666.7 445.8L664.9 442L661.9 439M661.9 439L646.2 447.1M639.5 427.8L639.8 432.1L638.5 436.4L638.7 440.7L639 445M785.8 324.6L777.4 326.3M785.8 324.6L787.1 306.9M765.6 308.9L768.1 306M765.6 308.9L767.9 312.7L769.8 316.8L772.7 320.4L773.6 325M768.1 306L787.1 306.9M817.7 250.4L815.6 246.8L814.4 242.9L814.5 238.5L812.3 235L811.1 231.1M811.1 231.1L818.9 225.2M815.3 254.1L791.3 247.4M791.3 247.4L791.3 234.8M811.1 231.1L799.2 228.7M799.2 228.7L791.3 234.8M765.2 432.6L753.7 422.7M763.2 447.2L756.1 449.5M743.2 445.1L743.4 441L743.9 436.9L744.8 432.9M744.8 432.9L753.7 422.7M757 389.4L768.1 394.6M757 389.4L751 393M751 393L751.7 415.1M768.1 394.6L772.1 410M772.1 410L767.5 411.7L762.8 413.4L758.4 415.4L754 417.8M775 372.1L778 388.1M775 372.1L760.7 370.2M778 388.1L768.1 394.6M794.8 392.2L790.7 390.8L786.5 389.8L781.9 390.1L778 388.1M753.7 422.7L754 417.8M744.8 432.9L740.6 430.6L736.6 428.1L732.1 426.3L728.1 423.6M705.7 391L707.4 394.4M731.7 368.8L733.1 389.3M707.4 394.4L711.7 393.8L715.7 391.6L720.1 391.2L724.6 391.2L728.8 389.8L733.1 389.3M751 393L747 391.2L742.6 392.6L738.4 392.1L734.4 390.7M732.1 408.5L734.4 390.7M733.1 389.3L734.4 390.7M687.2 385.2L681.9 391.1M681.3 404.5L686 405.7L690.8 406.8M707.4 394.4L705.9 402.9M690.8 406.8L705.9 402.9M672.5 424.6L676.6 427.3L681.1 428.7L685.8 429.7L690.5 430.4M690.8 406.8L690.5 430.4M732.1 408.5L708.3 407M705.9 402.9L708.3 407M671.1 452.8L689.2 448.8M727.5 424L723 423.4L718.8 425.7L714.3 425.6L709.9 425.4M727.5 424L728.4 428L727.8 432.1L726.7 436.2L726.7 440.2L729.1 444.2L728.2 448.3M716 446.2L720.5 448.9M709 426.7L709.9 425.4M720.5 448.9L728.2 448.3M708.3 407L709.9 425.4M736 449.9L728.2 448.3M695 454L699.5 453.2L703.5 451.1L707.3 448.4L711.4 446.6L716 446.2M695 454L689.2 448.8M691.6 431.3L709 426.7M697.5 468.3L695 454M715.5 467.6L720.5 448.9M715.5 346.8L716 341.6L718.8 337L720.2 332M737.5 330.1L732.1 328.5M720.2 332L723.8 329.9L727.9 328.9L732.1 328.5M765.6 308.9L760.7 309.1L755.9 310.7L751 310.4M768.1 306L770 302.2L768.8 297.8L769.9 293.9L770.7 289.9M752.2 285.1L756.5 287.5L761.5 287.2L766.4 287.4L770.7 289.9M752.2 285.1L750 287.1M750 287.1L751.4 291.7L749.9 296.5L750.8 301.1L749.7 305.8L751 310.4M745.8 325L750.7 310.6M559.4 167.7L563.7 153.2M563.2 172.9L583.6 171.3M563.7 153.2L581.3 151.7M581.3 151.7L583.6 171.3M559.1 146.7L554.6 146.8L550.4 148.3L546.9 151.6L542.4 151.9M559.1 146.7L563.7 153.2M544.5 166.6L549.5 166.8L554.5 166.9L559.4 167.7M595.1 108.6L597 112.7L598.1 117.1L596.7 121.9L598.9 126L599.4 130.4M577.4 129.4L582.1 132.3L585.2 136.8M599.4 130.4L585.2 136.8M559.1 131.7L558.1 136.7L557.9 141.7L559.1 146.7M581.3 151.7L585.2 146.4M585.2 146.4L585.7 141.6L585.2 136.8M628.8 377.7L646.9 362.6M639.1 388.6L641.5 385.1L644.9 382.7L648.3 380.2L650.2 376.2L653.6 373.9L656.9 371.3M646.9 362.6L656.9 371.3M664.8 385.7L664.7 381.5L663.9 377.3L664.4 373.1M656.9 371.3L664.4 373.1M684.5 373.2L668.2 370.4M664.4 373.1L668.2 370.4M799.2 228.7L799.9 224.6L799.3 220.6L799.1 216.5L799.5 212.5L798.3 208.5M815.5 206.1L798.3 208.5M819.1 68.6L817.1 72.3L815.4 76.2L813.7 80.1L812.2 84.1L809.9 87.7M630.1 12.7L626.1 26.1M626.1 26.1L629.8 28.5L633.9 30.2L637 33.7L641.3 35.1M645.6 12.8L646.1 17.3L646.6 21.7L645.5 26.1L645.2 30.5M645.2 30.5L641.3 35.1M545.9 528.3L548.3 547.4M545.9 528.3L550.1 526L554.6 524.8L559 523.3L563.7 522.8M572.6 531.2L563.7 522.8M564.4 550.4L560.4 549.6L556.2 550L552.3 548.4L548.3 547.4M566.7 509.2L563.3 506.3M536.7 512.5L539.2 522.8M539.2 522.8L545.9 528.3M587.1 530.3L582.3 531.1L577.5 532L572.6 531.2M587.1 530.3L578.3 505.9M461.6 536.8L486.1 516.8M486.1 516.8L485.9 511.4L486.6 505.9M522 506.7L486.6 505.9M522 506.7L522.4 501.9L519.6 497.5L519.4 492.8L519.6 488M483.3 496L487.3 492.3L490.1 487.6M519.6 488L490.1 487.6M522 626L524 615.5M539.4 608.5L524 615.5M544.7 585.2L533.5 593.5M231.6 587.4L239.2 557M231.6 587.4L227.6 588.5L223.6 589.3L219.5 590L215.4 590.5L211.6 592.3L207.3 592L203.8 594.9L199.6 595.1M239.2 557L198.6 554.1M197.8 593.6L199.6 595.1M197.8 593.6L196.3 557.1M196.3 557.1L198.6 554.1M202.2 624.3L201.7 620.1L201.4 616L201.2 611.8L201.2 607.6L201.5 603.3L198.8 599.4L199.6 595.1M240.5 596.7L237.3 593.8L234.3 590.8L231.6 587.4M160.3 557.7L164.8 557.8L169.3 557L173.8 558.4L178.3 556.1L182.8 557.9L187.3 556.9L191.8 557.9L196.3 557.1M196.7 528.9L198.6 554.1M243.1 553.2L246.4 556.1L250.4 557.5L254 559.7L258.1 560.9L261.3 564L265 565.9L268.8 567.6L272.6 569.6L276.7 570.8M243.1 553.2L244.6 548.8L243.4 544L245.3 539.7L244.9 535L246 530.5M246 530.5L249.8 528.3L254.2 528L258.6 527.6L262.2 525L266.2 523.3L270.7 523.5L274.6 521.4M289.4 555.7L287.1 560.2L282.7 562.9L279 566.3L276.7 570.8M289.4 555.7L274.6 521.5M279.9 586.4L276.7 570.8M239.2 557L243.1 553.2M233.1 516.7L235.4 521.1L239.2 524L243 526.9L246 530.5M281.7 493.6L274.6 521.4M317 551.3L312.5 552.9L307.6 551.6L303.1 553L298.6 553.8L294.1 555.7L289.4 555.7M320.7 528.4L274.6 521.5M544.6 571.8L539.6 566.5M548.3 547.4L544.4 550.5L540.9 554.2M500.7 190L498.6 193.9L498.2 198.2L498.8 202.8L496.8 206.8L496 211M500.7 190L504.7 189.8L508.7 188L512.9 189.4L516.9 188.4M516.9 188.4L517.7 212.9M517.7 212.9L513.2 213.6L509 211.7L504.7 211.3L500.4 210.7L496 211M469.3 206.4L473.6 208L478.2 208.2L482.7 208.1L487.3 208.5L491.4 210.8L496 211M487.1 242.3L495.3 230.3M495.3 230.3L494.7 225.5L494.4 220.6L495.9 215.8L496 211M500.7 190L496.9 186.3L493.2 182.6L489.8 178.6M514.2 6.1L512.1 -2.1M514.2 6.1L501.8 16.1M560.2 7.1L556.3 8.4L552.9 10.7L549.2 12.5M564.5 30.3L546.7 27.5M546.7 27.5L549.2 12.5M549.2 12.5L532.1 9.1M514.2 6.1L518.7 8L523.1 9.9L527.4 12.2M532.1 9.1L527.4 12.2M536.8 112.4L531.7 111.1L526.4 110.7L521.6 108.2M536.8 112.4L540.4 109.9L543.8 107.1L547.9 105.6M547.9 105.6L547 101L546.2 96.5L545.5 92M522.2 91.2L545.5 92M506 68.8L510.5 70.1L514.8 71.7L519.5 72.2L523.9 73.9M522.2 91.2L523.9 73.9M508.7 30.7L513.2 33M527.4 12.2L527.3 16.4L526.8 20.7L528 24.9M513.2 33L528 24.9M502 57.3L507 55.3L511.2 52.2L514.9 48.3M513.2 33L514.9 48.3M546.7 27.5L537.7 34.1M528 24.9L530.6 28.7L535.1 30.3L537.7 34.1M112.1 801.9L110.7 823.6M522.7 168.2L527.5 168.8L532.3 167.7L537.1 168.6L542 168.6M522.7 168.2L520 186.9M542 168.6L542.2 187M520 186.9L532.4 192.3M542.2 187L537.5 190.1L532.4 192.3M516.9 188.4L520 186.9M516.9 159.1L520.7 163.1L522.7 168.2M550.8 132.1L537.2 147.4M550.8 132.1L546.5 129.3L541.6 127.8L536.9 126M536.9 126L523.6 138.2M537.2 147.4L523.4 143.8M523.4 143.8L523.6 138.2M559.1 131.7L550.8 132.1M542.4 151.9L537.2 147.4M536.8 112.4L536.9 126M547.9 105.6L555.4 109.2M515 125.9L523.6 138.2M544.5 166.6L542 168.6M516.8 151.7L523.4 143.8M625 92.9L619.8 91.5M619.8 91.5L609.1 97.2M608.1 101.5L618.5 115.8M634.6 111.8L618.5 115.8M611.9 132.6L599.4 130.4M611.9 132.6L616.3 128.1M616.3 128.1L618.5 115.8M645.6 12.8L667.2 13.2M665.4 25.9L645.2 30.5M665.4 25.9L668.8 22.2M668.8 22.2L667.2 13.2M730.3 586.9L731.6 588.5M730.3 586.9L728.1 569.2M731.6 588.5L735.6 588.7L739.4 586.2L743.6 586.9M728.1 569.2L730.9 563.3M730.9 563.3L750.2 568.1M743.6 586.9L751.6 583.4M751.6 583.4L755.1 573.7M750.2 568.1L755.1 573.7M709.1 584.8L730.3 586.9M729.1 600.8L731.6 588.5M711.4 569.6L715.5 568.8L719.7 569L723.9 569.8L728.1 569.2M751.9 609.7L743.6 586.9M704.9 563.2L706.7 552.7M706.7 552.7L729.5 551.7M729.5 551.7L730.9 563.3M751.4 552.4L750.2 568.1M751.4 552.4L732.2 547M732.2 547L729.5 551.7M767.5 598.7L751.6 583.4M766 569.5L760.8 572.3L755.1 573.7M760.3 548L751.4 552.4M735.1 504.8L730.3 510M743.3 530.3L737.7 531.2M754.8 512.2L749.4 505.2M730.3 510L737.7 531.2M709.3 492.4L709.6 496.8L710.2 501.1L708.6 505.5L709.3 509.9M730.3 510L726.1 508.9L721.9 510.8L717.7 510.4L713.5 509L709.3 509.9M732.2 547L732.5 538.1M732.5 538.1L737.7 531.2M596.5 524.2L603.4 507.8M622.7 527.8L616.2 513.3M603.4 507.8L616.2 513.3M638 523.8L638.5 518.8L637.1 513.9L638 508.9M638 523.8L633.1 525.9L627.8 526.4L622.7 527.8M638 508.9L634.7 505.7L631.8 502.2M616.2 513.3L631.8 502.2M624.1 472.1L624.1 477.2L622.3 481.9L620.4 486.5M644.2 486.7L642.9 482.5L643.9 477.9L642.4 473.8L641.8 469.5M644.2 486.7L631.4 493.7M620.4 486.5L631.4 493.7M701.6 484.3L697.8 486.6L693.2 487.5L689.1 489.2L685.1 491.4M697.5 468.3L693.2 468.6L689.6 471.5L685.5 472.8L681.2 473M681.2 473L685.1 491.4M666.8 466.5L667.9 468.9M681.2 473L676.5 472.2L672.4 469.9L667.9 468.9M688.7 504.7L686.1 501.1L684.6 497.2L684 492.9M688.7 504.7L692.2 506.7L696.1 507.8L699.9 509.1L703.9 509.8L707.5 511.7M709.3 509.9L707.5 511.7M685.1 491.4L684 492.9M797.6 453L796.3 458L794.8 463M771.2 450.4L774.6 467.5M794.8 463L791 464.9L786.5 463.9L782.5 464.9L778.5 466.1L774.6 467.5M757 466.1L772.9 469.7M774.6 467.5L772.9 469.7M790.1 522.9L788.1 517.7L786.1 512.4M766.5 515.4L771.2 510.7M771.2 510.7L786.1 512.4M758.3 489.5L762.5 490.3L766.5 490.3L770.6 489.1M771.2 510.7L770.6 489.1M809.1 513.6L805.2 510.4L799.9 509.7L795.5 507.5L791.5 504.5M786.1 512.4L791.5 504.5M772.9 469.7L772.1 474.1L772.8 478.5L773.1 482.9L773 487.3M770.6 489.1L773 487.3M641.7 569.4L649.4 572.4M641.7 569.4L640.6 565.4L640.2 561.3L641.5 557.2L640.4 553.2L640.7 549.2M660.1 564.4L662.6 548.9M662.6 548.9L658.3 548.5L654.5 546.2L650.2 546L645.9 545.6M645.9 545.6L640.7 549.2M630.3 574.5L634.3 573.3L638.1 571.5L641.7 569.4M654.2 585.3L652.6 581L650.4 576.9L649.4 572.4M636.5 548.8L640.7 549.2M669.9 571.9L667.2 568.6L663.5 566.7L660.1 564.4M683.5 565.7L680.4 550.9M671.3 544.4L667.5 547.7L662.6 548.9M671.8 540L669 536.4L667 532.3L664 528.8L661.3 525.1L658.7 521.4M671.8 540L671.3 544.4M644.1 527.6L658.7 521.4M644.1 527.6L643.7 532.2L645.8 536.5L646.3 541L645.9 545.6M644.1 527.6L638 523.8M807.8 350.7L798.1 340.8M807.8 350.7L803.9 363.3M798.1 340.8L782.3 350.3M782.3 350.3L786.2 365.5M803.9 363.3L798.2 365.2L793.3 368.8M786.2 365.5L793.3 368.8M820.7 373.8L803.9 363.3M820.9 348.4L816.4 348.4L812.1 349.5L807.8 350.7M785.8 324.6L790.5 325.4L795 327L799.2 329.3M779.8 349L782.3 350.3M799.2 329.3L799.6 335.2L798.1 340.8M775 372.1L779.1 370.6L783.1 368.8L786.2 365.5M797.8 389.2L796.1 385.3L794.7 381.3L793.9 377.2L793.4 373.1L793.3 368.8M799.2 329.3L804.4 325.1M804.4 325.1L815.7 327M805.4 271.2L790.9 265.4M805.4 271.2L815.4 263.3M790.9 265.4L790.5 261.1L792 256.8L792 252.5L790.6 248.3M791.3 234.8L787.8 232.3L783.1 232.2L780.2 228.2L775.7 227.5M798.3 208.5L790.4 202.5M790.4 202.5L775 216.5M775.7 227.5L775.9 222L775 216.5M773.1 129.8L751.6 127.9M773.1 129.8L772.2 111.6M751.6 127.9L750 111.3M750 111.3L754 106.7M754 106.7L772.2 111.6M710.2 249.2L710.1 253.8L708.8 258.3L709.2 263L710.4 267.6L709.3 272.1M710.2 249.2L700.1 247M697.1 248.8L694.5 267.4M709.3 272.1L704.7 269.7L699.8 267.9L694.5 267.4M752.6 270.6L751.3 275.4L753.4 280.3L752.2 285.1M752.6 270.6L748.4 269.6L744.5 267.5L740.2 267.3L735.8 267.3L731.7 266M731.7 266L729.2 270M750 287.1L733.2 287.3M731.7 266L729.9 260.4L730.7 254.6M710.2 249.2L724 246.2M730.7 254.6L726.9 250.7L724 246.2M709.3 272.1L711.5 274.4M729.2 270L725 272L720.5 272.6L716.1 274.2L711.5 274.4M563.2 172.9L560.5 187.8M558.1 190.9L560.5 187.8M517.7 212.9L523.7 217.2M535.7 208.7L532.4 212.6L528.1 214.9L523.7 217.2M611.9 132.6L611.1 137.6L612.7 142.4L613.4 147.2M585.2 146.4L602.2 153.8M613.4 147.2L602.2 153.8M753.5 97.9L754 106.7M753.5 97.9L756.4 94.5L760.6 92.3L763.4 88.9L765.7 84.8L769.2 82M776.4 108.9L771.9 84.9M769.2 82L771.9 84.9M789.7 -5.8L792.3 7.3M798.2 27.4L802.5 28.5L807.1 28L811.4 28.8L815.6 30.4M798.2 27.4L791.5 8.7M792.3 7.3L791.5 8.7M723 150L730.1 145.1M723 150L715.7 148M715.7 148L714.3 143.7L712.1 140L707.8 137.4L706.6 133.1M724.8 125.4L720.1 127L715.2 128.1L711.6 132.3L706.6 133.1M579.8 322L579.9 316.8L580.6 311.8M555.8 326.8L554.9 321.5L554.8 316.3L556.2 311M556.2 311L562.4 307.8M529.3 313.1L545.4 300.9M556.2 311L545.4 300.9M646.9 362.6L645.4 358.3L645.3 353.6M621.6 351.5L626.4 351.7L631.1 352.2L635.8 353.2L640.5 353.9L645.3 353.6M701 346.9L694.5 342M720.2 332L705.7 320.9M705.7 320.9L693 332.9M694.5 342L693 332.9M689.2 369L683.7 350.8M694.5 342L691.5 345.6L686.5 346.9L683.7 350.8M668.2 370.4L669.8 365.9L670.4 361.2L668.8 356.3L670.6 351.8M683.7 350.8L670.6 351.8M601.2 328L601.3 323.7L598.4 320.1L597.6 316.1L597.3 311.9L596.6 307.8M580.6 311.8L586.6 303.3M596.6 307.8L592 304.5L586.6 303.3M755.9 145.9L743.1 154.8M755.9 145.9L760.4 147.2L765.2 147.9L769.5 150M769.5 150L770.8 152.2M770.8 152.2L766.7 167.1M766.7 167.1L755.1 170M755.1 170L744.5 164M744.5 164L743.1 154.8M749.8 131L755.9 145.9M749.8 131L731.6 136.4M730.1 145.1L743.1 154.8M751.6 127.9L749.8 131M773.5 130.4L772.6 134.3L772.5 138.3L770.2 141.9L771 146.2L769.5 150M818 189L814.3 186.7L810 186L805.6 185.7L801.9 183.4M588.4 20.6L601.4 34.3M608.8 8.8L614.9 25.7M601.4 34.3L604.8 32.1L608.8 31L612.1 28.7L614.9 25.7M626.1 26.1L623.4 26.9M614.9 25.7L623.4 26.9M598.9 82.4L599.6 73.5M619.8 91.5L619.7 87.2L621.2 83.2L623.7 79.4L623.7 75.1L624.8 71M624.8 71L620 71.1L615.5 69.1L610.9 67.7L606 67.8M599.6 73.5L606 67.8M619.7 47.8L615.2 48.5L610.5 47.2L606 48.6M619.7 47.8L623.4 26.9M601.4 34.3L601.4 44.2M601.4 44.2L606 48.6M624.8 71L632.4 66.9M619.7 47.8L631.2 53.6M606 67.8L606 48.6M631.2 53.6L632.4 66.9M641.3 35.1L642.1 41.6M631.2 53.6L642.1 41.6M536 511.5L531.3 510.7L527.3 507.4L522.4 507M544.1 492.3L536.7 485.8M519.6 488L523.4 483.5M536.7 485.8L532.1 485.9L527.9 484L523.4 483.5M523.1 533.5L523.1 546.7M523.1 533.5L511.5 527.1M511.5 527.1L498 528.7M523.1 546.7L519.3 549L515.3 551.2M515.3 551.2L511.6 548.5L507.6 546.4L503.3 544.7L499 543.2M498 528.7L499 543.2M540.9 554.2L536.2 553.1L531.9 550.7L527.3 549.3L523.1 546.7M522.4 507L520.9 511.4L518.7 515.5L514.7 518.5L514.4 523.5L511.5 527.1M486.1 516.8L488.9 519.9L491.4 523.4L495.8 525L498 528.7M539.6 566.5L524.8 573.3M513.6 563.8L515.3 551.2M491.6 572.3L513.6 563.8M491.6 572.3L483.7 561.7M483.7 561.7L499 543.2M460.2 554.6L483.7 561.7M516.5 607.7L519.3 603.4L521 598.8L521.2 593.6L523.1 589M516.5 607.7L490.9 606.1M493.2 587L497.9 587.7L502.5 586L507.2 587.1L511.8 585.9L516.5 587.1L521.2 586M493.2 587L491.6 591L490 595L487.9 598.8M521.2 586L523.1 589M487.9 598.8L490.9 606.1M524 615.5L516.5 607.7M533.5 593.5L523.1 589M489.9 621.5L490.9 606.1M491.6 572.3L491.3 577.3L492.5 582.1L493.2 587M524.8 573.3L522.9 577.3L521.7 581.6L521.2 586M453.6 595.5L487.9 598.8M565.3 89L556.2 87.8M556.2 87.8L545.5 91.9M527.5 51.5L538.8 42.7M527.5 51.5L529.2 55.9L527.7 60.7L530.6 64.9L530.1 69.6M530.1 69.6L542.4 72.2M543.7 45.5L538.8 42.7M543.7 45.5L545 70.5M545 70.5L542.4 72.2M514.9 48.3L527.5 51.5M537.7 34.1L538.8 42.7M523.9 73.9L530.1 69.6M557.7 47.2L553.1 46L548.3 46.7L543.7 45.5M561.2 67.1L545 70.5M561.2 67.1L560.6 71.3L558.7 75.3L557 79.2L558.3 83.9L556.2 87.8M644.5 90.1L645 95L644.3 99.9L645.3 104.7L646 109.6M644.5 90.1L639.5 90.3L634.7 91.2L629.8 92L625 92.9M634.6 111.8L643.9 112.6M646 109.6L643.9 112.6M718.1 532.5L716 527.9L712 524.8L708.3 521.4L706.3 516.8M718.1 532.5L702.8 547.4M700 545.8L697 526.4M700 545.8L702.8 547.4M697 526.4L706.3 516.8M732.5 538.1L727.4 537.1L722.9 534.3L718.1 532.5M706.7 552.7L702.8 547.4M671.8 540L683.3 526.7M683.3 526.7L687.9 525.4L692.5 525.9L697 526.4M680.4 550.9L700 545.8M683.3 526.7L677.8 514M688.7 504.7L684.9 507.6L681 510.5L677.8 514M578.3 505.9L581.7 502.6M556.9 490.9L580.6 487.2M581.7 502.6L580.6 487.2M652.8 489.6L664.7 481M652.8 489.6L657.6 505.3M664.7 481L667.2 484.2L670.1 487.2L673.5 489.6L675.7 493.1M675.7 493.1L672.9 496.1L670.2 499.2L669.2 503.6L666.8 506.9L663.3 509.4M657.6 505.3L662.6 509.5M644.2 486.7L648.7 487.7L652.8 489.6M667.9 468.9L664.7 481M638 508.9L642.9 507.9L647.8 507.1L652.6 505.9L657.6 505.3M631.4 493.7L631.8 502.2M684 492.9L675.7 493.1M811.4 490.7L806.8 474.6M806.8 474.6L802.1 471.4L797.3 468.3M797.3 468.3L796.4 472.4L794.6 475.9L792 479.1L789.5 482.3L787.8 486L786.2 489.7M791.9 494.4L786.2 489.7M815.6 493.2L811.4 490.7M821.2 465.7L806.8 474.6M794.8 463L797.3 468.3M773 487.3L786.2 489.7M814.4 293.2L803.9 282.5M813.4 300.3L808.8 304L804 307.5M804 307.5L800.3 305.6L796.6 303.6L792.3 303.1M792.3 303.1L788.7 288.4M803.9 282.5L788.7 288.4M805.4 271.2L803.9 282.5M787.1 306.9L792.3 303.1M782.4 285L777.5 287.4L772.2 288.4M782.4 285L788.7 288.4M790.9 265.4L787.1 267.9L783.5 270.7M782.4 285L783.5 270.7M773.4 264.9L769 267.3L764.2 269M773.4 264.9L773.9 251.9M773.9 251.9L764 244.9M756.5 267.6L764.2 269M756.5 267.6L756.1 249.3M756.1 249.3L764 244.9M772.2 288.4L770.6 284.6L769.9 280.3L768.1 276.5L764.6 273.4L764.2 269M783.5 270.7L778.2 268.1L773.4 264.9M790.6 248.3L773.9 251.9M766.4 234.5L770.5 230.3L775.7 227.5M766.4 234.5L766.2 239.9L764 244.9M751.5 248.1L747.2 249.1L742.9 249.7L738.7 250.9L734.6 252.7L730.7 254.6M751.5 248.1L756.1 249.3M751.5 248.1L749.2 244L748.7 239.1L744.5 235.9L744.7 230.6L741.6 226.9M766.4 234.5L753.3 225.8M753.3 225.8L741.6 226.9M726.7 232.7L724 246.2M726.7 232.7L738.4 225.7M738.4 225.7L741.6 226.9M730.8 302L730.8 291.5M723.8 307.8L710.4 309M710.4 309L709.8 304.8L711.5 300.6L709.5 296.4L711.1 292.2L710.1 288.1M750.7 310.6L746.7 308.8L742.4 307.9L738.3 306.6L735.2 302.8L730.8 302M733.2 287.3L730.8 291.5M708.5 285.5L710.7 280.2L711.5 274.4M708.5 285.5L710.1 288.1M706.8 311.8L706.6 316.4L705.7 320.9M706.8 311.8L710.4 309M560.5 187.8L581.9 189.4M581.9 189.4L584 171.7M584 171.7L600.9 172.4M613.4 147.2L617.3 149.1L620.9 151.5L623.8 154.7M625.9 166.4L621.5 168L616.8 169.2L613 172.5L607.9 172.4L603.7 174.7M600.9 172.4L603.7 174.7M559.5 235.2L544.4 228.4M559.5 235.2L562.2 231.9L563.1 227.5L565.7 224.2L567.6 220.4M543.8 211.5L547.6 209.5L551.6 208L555.9 207.6L560.1 207M567.6 220.4L567.4 212.7M560.1 207L563 210.8L567.4 212.7M558.1 190.9L560.1 207M535.7 208.7L543.8 211.5M537.7 231.7L537.4 247.7M537.7 231.7L523.2 226.1M519.6 230.5L523.2 226.1M519.6 230.5L521.1 246.8M521.1 246.8L537.4 247.7M523.7 217.2L523.2 226.1M544.4 228.4L537.7 231.7M495.3 230.3L519.6 230.5M519.7 248.4L521.1 246.8M723 150L722.4 154.9L721.1 159.6L719.8 164.4L720.1 169.3M732.1 172.8L720.8 170.3M732.1 172.8L744.5 164M651.5 175.7L653.2 180.6L652.6 185.8M651.5 175.7L634.9 169.5M652.6 185.8L637.2 192.3M634.9 169.5L629.8 169.6M629.8 169.6L627.6 189.4M627.6 189.4L637.2 192.3M659.4 193.5L652.6 185.8M659.4 193.5L672.4 188.4M663.7 163L674.3 170.8M663.7 163L661.6 167L657.9 169.6L654.1 172L651.5 175.7M674.3 170.8L672.4 188.4M681.2 208.5L673.8 212.2M681.2 208.5L682.1 192.8M682.1 192.8L677.1 191.1L672.4 188.4M658.9 202L662.6 204.6L666.9 206.3L669.4 210.6L673.8 212.2M677.5 231.6L670.6 227.9M662.5 247.1L663 243L662.5 238.9L662.8 234.8L663.2 230.8M662.5 247.1L666.3 250.4L671.6 251.2L675.4 254.6M663.2 230.8L670.6 227.9M675.4 254.6L682.9 247.6M674.4 267.6L688.1 271.4M674.4 267.6L675.4 254.6M694.5 267.4L688.1 271.4M681.2 208.5L692.3 212.2M673.8 212.2L670.6 227.9M677.5 231.6L681.2 229.5L685 228L689.3 227.8M692.3 212.2L689.3 227.8M700.1 247L700.3 242.6L699.8 238.2L699.1 233.8M726.7 232.7L711.9 220.7M699.1 233.8L689.3 227.8M798.2 27.4L787.5 37.4M791.5 8.7L788.4 11.6L784.5 13.3L780.5 14.9L777.1 17.3L773.9 20.2M787.5 37.4L773.9 20.2M791.6 69.7L776.9 71.3M791.6 69.7L794.6 73.7L795.8 78.6L798.1 82.9L799.1 87.8M799.1 87.8L793.3 94.2M793.3 94.2L771.9 84.9M769.3 77.2L773.6 74.9L776.9 71.3M811.9 44.6L816.7 53.4M811.9 44.6L791.8 47.4M794.3 66.1L792.9 61.5L794.2 56.6L793 52L791.8 47.4M794.3 66.1L815.8 63.8M815.6 30.4L815.3 35.4L814.2 40.2L811.9 44.6M787.5 37.4L787.4 43.9M787.4 43.9L791.8 47.4M791.6 69.7L794.3 66.1M787.4 43.9L774.3 48.8M776.9 71.3L777.4 66.6L775.7 62.3L774.1 57.9L774.5 53.3L774.3 48.8M673.5 132.1L668.6 127.6M673.5 132.1L678.6 131.5L683.3 129.9L687.7 127.3M668.6 127.6L671.7 112.3M671.7 112.3L683 111.6M683 111.6L687.7 127.3M674.4 267.6L670.2 270.6M650.5 254.7L654.5 267.4M650.5 254.7L654 251.4L659 250.4L662.5 247.1M670.2 270.6L666.1 270.5L662.3 269.2L658.3 268.7L654.5 267.4M688.1 271.4L690 276L691.2 280.7L691 285.7M670.2 270.6L669 293.4M669.1 293.5L673.3 291.3L677.7 290L682.5 289.4L686.5 286.9L691 285.7M706.8 311.8L693.5 304.9M708.5 285.5L694 287.8M693.5 304.9L694 287.8M694 287.8L691 285.7M599.6 287.9L609.2 292.7M596.6 307.8L602.3 306.5L607.9 304.9M586.6 303.3L585.6 297.9M607.9 304.9L608.2 300.8L609.9 296.9L609.2 292.7M645.3 353.6L647.7 350.2M670.6 351.8L665.7 346.2M665.7 346.2L661.4 348.3L657 349.3L651.9 347.9L647.7 350.2M776.4 108.9L788.5 107.4M773.5 130.4L788 130.6M788 130.6L788.5 107.4M819.4 103.2L802.1 112.1M793.3 94.2L791.3 105.8M802.1 112.1L791.3 105.8M788.5 107.4L791.3 105.8M770.8 152.2L775 152.1L779.2 151.5L783.4 152.9L787.6 152.5M775.6 177.6L779.7 177L783.5 175.4L787.5 174.6L791 172.1M787.6 152.5L787.9 157.5L789.5 162.3L791.2 167L791 172.1M818.3 170.9L813.4 167.9L808 165.9M801.9 183.4L799.4 175M808 165.9L799.4 175M790.2 201.4L786.9 199L784.7 195.3L780.2 194.4L778.6 190L774.7 188.3M799.4 175L791 172.1M587 66.8L589 48.7M587 66.8L571.1 69.8M571.1 69.8L565.3 65.2M580.6 46.2L589 48.7M580.6 46.2L565.2 57.1M565.3 65.2L565.2 57.1M599.6 73.5L595.5 71.1L591.6 68.3L587 66.8M601.4 44.2L597.6 46.8L593.1 47.1L589 48.7M573.9 84L572 79.5L571 74.8L571.1 69.8M561.2 67.1L565.3 65.2M575.7 30.4L580.6 46.2M557.7 47.2L560.6 50.2L562.8 53.8L565.2 57.1M642.1 41.6L645.9 43.1L650.1 44.2L653.7 46.1L656.7 49.4L660.7 50.8M632.4 66.9L637.7 69.9M637.7 69.9L660.7 50.8M665.4 25.9L664 30L665.2 34.4L663.2 38.4L662.8 42.6L662.4 46.8L661.5 50.9M484.1 450.3L486.7 453M512.1 432.4L515.3 448.6M515.3 448.6L511.4 450.3L507.3 451.1L503.1 450.7L499 451.7L495 452.5L490.9 453L486.7 453M655.9 130.4L645.2 120.2M655.9 130.4L651.8 147.8M633.6 133.6L636.7 144.2M636.7 144.2L641.4 145L646 146.1L650.4 148M668.6 127.6L664.5 129.2L660.4 130.4L655.9 130.4M646 109.6L667 107.1M643.9 112.6L645.2 120.2M671.7 112.3L667 107.1M673.5 132.1L674.4 137L676.1 141.6L676.5 146.6M663.3 157L667 154.9L669.7 151.6L672.7 148.6L676.5 146.6M663.3 157L659 154.6L656.5 149.9L651.8 147.8M616.3 128.1L620.9 128.6L624.7 131.7L628.9 133.5L633.6 133.6M623.8 154.7L636.7 144.2M625.9 166.4L629.8 169.6M634.9 169.5L650.4 148M663.3 157L663.7 163M668.8 22.2L686 31.4M670 57L665.1 54.9L661.5 50.9M670 57L673.4 53.9L677.6 52.1L682.1 51L685.4 47.7M686 31.4L686.9 35.5L686.4 39.6L685.2 43.6L685.4 47.7M667.2 13.2L667.8 11.4M659.5 -4.7L667.8 11.4M609.3 489L607.2 491.7M609.3 489L607.7 484.8L604.2 481.7L603.3 477.1L601.2 473.2M607.2 491.7L602.8 491.4L598.4 490.5L594.3 488.7L590 487.6L585.5 487.5L581.3 485.9M601.2 473.2L584.6 468.4M581.3 485.9L581.3 480.8L581.2 475.8L581.7 470.7M581.7 470.7L584.6 468.4M620.4 486.5L609.3 489M603.2 507.4L604.9 503.6L605.2 499.5L607.3 495.9L607.2 491.7M609.9 465.3L601.2 473.2M588.8 450L584.6 468.4M574.1 469.4L581.7 470.7M574.1 469.4L570 470.8L565.8 472.1L561.3 472.3L557.3 474.2M557.3 474.2L557.8 479.4L554.9 484.2L555 489.5M574.1 469.4L561.9 450.4M743.5 206.3L745.9 202.3L747.4 198L746.8 192.9L749.2 188.9M749.8 188.6L754.7 190.5L760 191.3L764.7 193.7M764.7 193.7L762.8 209.6M762.8 209.6L761.2 210.3M753.3 225.8L761.2 210.3M738.4 225.7L738.2 221.7L738.4 217.6L737.8 213.6L738.5 209.6M738.5 209.6L743.5 206.3M737.5 185.1L749.2 188.9M755.1 170L749.8 188.6M774.7 188.3L769.5 190.7L764.7 193.7M775 216.5L771.3 213.5L766.4 212.7L762.8 209.6M581.9 189.4L583.2 191.6M567.4 212.7L569.2 212M569.2 212L571.5 208.5L574.6 205.7L575.4 201.3L578.9 198.6L579.9 194.3L583.2 191.6M715.3 188.5L719.9 190.5L724.5 192.3L729.6 192.4M732.1 205.8L729.6 192.4M732.1 205.8L708.8 209.3M706.6 195.3L707.3 207.8M708.8 209.3L707.3 207.8M737.5 185.1L729.6 192.4M720.8 170.3L715.3 188.5M711.9 220.7L708.8 209.3M695.2 186.2L682.1 192.8M695.2 186.2L706.6 195.3M692.3 212.2L697 209.8L702.4 209.5L707.3 207.8M685.9 170.6L685.6 166.1L687.7 161.9L686.6 157.3L688.9 153.2L689.1 148.8M694 175.9L704.6 167.1M704.6 167.1L704.1 162.3L702.2 157.9L700.9 153.3M700.9 153.3L696.7 150.4L692.5 147.5M689.1 148.8L692.5 147.5M674.3 170.8L685.9 170.6M695.2 186.2L693.7 181.1L694 175.9M676.5 146.6L689.1 148.8M720.1 169.3L715 168.3L709.8 167.7L704.6 167.1M715.7 148L711.1 150.8L706.1 152.1L700.9 153.3M706.6 133.1L698.7 131.6M649.8 210L654.7 228.2M631.2 214.4L629.8 224.8M629.8 224.8L633.5 228.7L638.3 231.3L642.4 234.6M642.4 234.6L645.9 231.4L650.4 230L654.7 228.2M637.2 192.3L639.1 196.4L639.5 200.8L641.6 204.8L642.1 209.2M658.9 202L649.8 210M663.2 230.8L654.7 228.2M621.9 248.1L622 243.3L623.2 238.5L622.3 233.6L622.6 228.7M621.9 248.1L632 252.8M632 252.8L635.5 249.7L640.2 249M640.2 249L642.4 234.6M622.6 228.7L629.8 224.8M640.2 249L644.7 252.9L650.5 254.7M758.8 27.9L765.7 26.1M758.8 27.9L748.7 12.8M773 20.1L763.4 4.1M748.7 12.8L763.4 4.1M772.7 48.4L772.1 43.7L769.9 39.5L769.7 34.7L768.3 30.2L765.7 26.1M763.8 -5.6L763.4 4.1M750 111.3L745.4 110.9L740.8 111.6L736.1 111.4L731.6 112.7L726.9 112.4M753.5 97.9L745.3 91.2M745.3 91.2L741.3 91.4L737.3 91.3L733.3 91.4L729.3 92M729.3 92L728.9 96.1L727.3 100.1L728.5 104.3L726.5 108.3L726.9 112.4M724.8 125.4L725 114M726.9 112.4L725 114M539.3 289.8L520.7 289.4M520.7 289.4L519.3 288.1M519.3 288.1L520.7 283.4L521.9 278.7L522.1 273.6L524.1 269.1M522.7 310L520.7 289.4M545.4 300.9L545.2 292.5M545.2 292.5L539.3 289.8M562.4 307.8L570.5 288.5M545.2 292.5L549.9 289L553.8 284.6M575 287.5L570.5 288.5M668.2 304.5L669.9 328.1M669.3 303.1L673.4 304.1L677.3 305.8L681.4 306.6L685.6 306.9M685.6 306.9L685.5 311.4L685.8 315.9L687.1 320.4L685.4 325L686.4 329.6M669.9 328.1L686.4 329.6M669.1 293.5L670.3 298.3L669.3 303.1M693.5 304.9L685.6 306.9M667.6 330.3L667.8 335.7L666.3 340.9L665.7 346.2M667.6 330.3L669.9 328.1M608.8 331.2L613.3 328.2L616.7 324.1L620 320M621.6 351.5L637.2 329.7M620 320L637.2 329.7M607.9 304.9L620.4 314.2M647.7 350.2L647.5 345.8L645 342.1L645.2 337.7L644.1 333.5L642.5 329.6M637.2 329.7L642.5 329.6M667.6 330.3L645.8 326.6M668.2 304.5L647.3 309.2M647.3 309.2L645.8 326.6M645.8 326.6L642.5 329.6M632 252.8L629.8 265.1M654.5 267.4L647.4 274.9M647.4 274.9L629.8 265.1M599.6 287.9L599 271.6M610.3 269.9L614.8 273.4L620.4 274.7M609.2 292.7L613.7 289.9L618.2 287L623.4 285.7M623.4 285.7L620.4 274.7M613.1 249.7L610.3 269.9M620.4 274.7L624.4 272.4L626.1 267.8L629.8 265.1M797.4 145.8L797.2 140.6L796.5 135.3M818.8 149.7L808.8 153M818.8 127.8L805.4 126.7M787.6 152.5L797.4 145.8M808 165.9L808.8 153M802.1 112.1L805.4 126.7M660.2 87.4L662.8 83.2L664.4 78.6L665.1 73.8L666.4 69.1M660.2 87.4L655.1 88.5L650 89.2L644.8 89.5M666.4 69.1L640.7 73.2M644.8 89.5L640.7 73.2M668.9 95.1L673.1 92L678.4 91.3L682.5 88.2M668.9 95.1L665 90.7L660.2 87.4M669.9 65.9L666.4 69.1M669.9 65.9L682.2 77.2M682.2 77.2L682.5 88.2M668.9 95.1L667 107.1M669.9 65.9L670 57M637.7 69.9L640.7 73.2M521.1 465.8L542.4 468.9M520.8 465.3L521.3 459.8L521.7 454.3M521.7 454.3L538.3 444.7M538.3 444.7L549.4 455.2M549.4 455.2L548.9 465.9M548.9 465.9L542.4 468.9M536.7 485.8L542.4 468.9M523.4 483.5L523.3 479L521.9 474.7L521.7 470.3L521.1 465.8M515.3 448.6L521.7 454.3M561.9 450.4L557.6 451.7L554 454.6L549.4 455.2M557.3 474.2L548.9 465.9M756.4 51.4L756.8 56.3L757.3 61.2L758.3 66L759.6 70.8M756.4 51.4L749.7 46.9M742 51.8L740.6 56.3L740.1 60.9L738.6 65.3L736 69.3M759.6 70.8L745 74.2M745 74.2L740.2 72.3L736 69.3M772.7 48.4L768.8 49.8L764.4 49.1L760.7 51.6L756.4 51.4M749 37.3L749.7 46.9M749 37.3L752 33.9L755.1 30.6L758.8 27.9M745.3 91.2L745 74.2M727.7 71.7L724.1 85.5M727.7 71.7L736 69.3M729.3 92L724.1 85.5M716 61.9L702.8 75.2M716 61.9L716 56.6L713.5 51.8M712.6 51.2L694 52M694 52L694.5 72.2M694.5 72.2L702.8 75.2M727.7 71.7L716 61.9M724.9 47.1L729.5 47.1L733.4 49.5L737.8 50.2L742 51.8M724.9 47.1L713.5 51.8M682.2 77.2L686.7 76.5L690 72.8L694.5 72.2M567.6 220.4L583.2 230.4M588.3 211.9L589.8 216.8L591.6 221.5L593.8 226M613.1 249.7L609.2 248.3L606.4 245L602.4 244M622.6 228.7L617.6 226.9L612.2 227.1L606.9 226.4M602.4 244L601.7 239.1L602.9 234.3L603 229.4M606.9 226.4L603 229.4M749 37.3L735.5 28M748.7 12.8L738.6 11.1M738.6 11.1L735.5 28M724.9 47.1L731.6 29.4M735.5 28L731.6 29.4M724.4 -8.4L725 -2.5L725.5 3.4M748.2 -5.8L738.4 10.8M738.4 10.8L725.5 3.4M686 31.4L692 27.2M712.6 51.2L711.3 47.3L711.7 43.1L711.9 39L711.6 34.9L710.1 31M692 27.2L710.1 31M731.6 29.4L715.6 25.3M725.5 3.4L714.9 11.6M714.9 11.6L715.1 16.2L716.1 20.7L715.6 25.3M702.4 111.7L692 105.5M702.4 111.7L711.3 109.3M711.3 109.3L710.9 88.5M692 105.5L690.8 95.2M690.8 95.2L694.4 92.4L699 91.6L702 87.9L706.2 86.3M706.2 86.3L710.9 88.5M683 111.6L688.1 109.5L692 105.5M698.7 131.6L702.4 111.7M725 114L720.9 111.3L715.7 111.6L711.3 109.3M724.1 85.5L719.9 87.3L715.3 87.4L710.9 88.5M682.5 88.2L687.3 91L690.8 95.2M702.8 75.2L704.3 80.8L706.2 86.3M599 271.6L594.7 269.3M594.7 269.3L594.8 264.6L593.6 260.3L592 256.1L590.8 251.7M575 287.5L577.3 282.3L578.5 276.8M594.7 269.3L590.8 271.4L586.2 272.2L582.9 275.7L578.5 276.8M583.2 230.4L580.8 248.3M593.8 226L603 229.4M590.8 251.7L580.8 248.3M545.2 262L551.8 267.3M545.2 262L544.6 253.4M551.8 267.3L568.7 263.2M544.6 253.4L559.9 238.9M568.7 263.2L574.1 249.8M559.9 238.9L563.2 241.9L566.5 245L571 246.5L574.1 249.8M533.2 268.4L545.2 262M553.8 284.6L553.6 280.3L551.7 276.1L552.8 271.6L551.8 267.3M578.5 276.8L568.7 263.2M559.5 235.2L559.9 238.9M580.8 248.3L574.1 249.8M627.5 288.9L645.7 283.8M627.5 288.9L629.4 304.3M646.9 308.8L629.4 304.3M646.9 308.8L646.5 284.8M647.4 274.9L646.1 279.3L645.7 283.8M623.4 285.7L627.5 288.9M620.4 314.2L623.4 310.9L626.4 307.6L629.4 304.3M594.9 196.8L596.2 203M594.9 196.8L598.9 193.2L601.1 188.1L605.2 184.7M596.2 203L608.9 210.1M605.2 184.7L621.2 194.1M621.2 194.1L619.9 204.2M583.2 191.6L587 193.6L590.6 196.1L594.9 196.8M588.3 211.9L596.2 203M603.7 174.7L605.2 184.7M606.9 226.4L608.9 210.1M627.6 189.4L621.2 194.1M631.2 214.4L628.1 210.3L624.2 207L619.9 204.2M705 -7L703.8 -2.3L701.5 2.1L701.3 7.1M695.6 8.9L701.3 7.1M695.6 8.9L683.9 1.3M683.9 1.3L683.8 -2.8M714.9 11.6L710.1 11L705.9 8.3L701.3 7.1M692 27.2L695.6 8.9M667.8 11.4L671.3 8.1L676.2 6.9L679.6 3.4L683.9 1.3"/>
<path id="lakes" fill="#2b4b6d" stroke="#27445f" d="M299.4 59.2 L300.6 58.9 L301.8 60.8 L303.4 61.4 L304.6 60.5 L304.3 58.6 L305.2 56.8 L307.1 55.2 L309.2 55.5 L311.4 57.4 L314.5 57.7 L314.5 60.5 L315.7 62.3 L316 65.4 L317.2 67.8 L318.8 69.7 L319.7 71.5 L321.8 70.3 L323.7 71.5 L323.7 73.1 L321.2 73.7 L319.7 74.9 L319.4 77.1 L319.7 78.9 L319.1 81.4 L319.7 83.8 L321.2 86.3 L322.8 88.8 L323.7 91.2 L323.7 94.3 L322.8 96.8 L322.2 95.2 L322.2 92.5 L320.6 90 L318.8 88.2 L316.3 86.3 L314.5 83.5 L314.2 79.5 L314.5 76.5 L313.8 73.4 L312.3 70.9 L310.5 68.8 L310.2 64.8 L309.8 60.5 L308.6 58 L307.1 58 L306.2 59.8 L305.8 62 L304.3 63.2 L302.5 63.2 L300.6 62 L299.4 60.5ZM368.6 261.4 L373.5 258.2 L378.4 261.4 L388.3 266.3 L394.4 271.3 L396.9 276.9 L390.7 273.7 L383.3 268.8 L376 265.1 L369.8 263.1ZM439.3 376 L442.9 368.6 L447.9 363.6 L451.6 364.9 L449.1 369.8 L445.4 373.5 L442.9 377.2ZM604 304.5 L606 305.8 L610.9 303.3 L613.4 297.1 L612.9 288.5 L615.9 285.3 L617.1 291 L620.8 287.3 L623.2 292.2 L627.7 292.7 L624.5 297.1 L619.5 299.6 L617.1 304.5 L613.4 308.2 L608.5 313.1 L604.8 313.6 L603.5 309.4ZM526.2 502.1 L529.2 504.5 L532.8 500.8 L534.1 507 L530.4 514.4 L529.2 521.8 L532.8 527.9 L536.5 525.5 L534.1 530.4 L533.6 537.8 L529.2 534.1 L525.5 531.6 L527.9 527.9 L525.5 521.8 L526.7 511.9 L526.7 505.8ZM424.5 413.4 L426.9 417.1 L426.9 423.2 L430.6 428.2 L431.9 433.1 L429.4 434.3 L428.2 430.6 L425.2 425.7 L424.5 419.5ZM542 604.8 L543.9 601.6 L545.9 604.8 L551.3 600.6 L553.8 603 L550.1 607.2 L548.9 610.4 L553.8 609.4 L562.7 609 L563.6 612.4 L555 612.9 L550.1 615.9 L546.4 618.8 L542.7 617.8 L541.5 612.9ZM121.8 659 L124.2 654 L129.2 652.1 L134.1 654 L136.5 659 L134.6 665.1 L129.2 668.1 L123.7 666.3ZM143.9 698.4 L150.1 695.9 L153.8 700.8 L152.6 705.8 L148.9 709.4 L146.4 713.1 L141.5 711.9 L140.2 707 L145.2 703.3ZM57.7 691 L60.2 686 L63.9 692.2 L65.1 698.4 L68.8 702.1 L76.2 703.3 L82.4 704.5 L84.8 708.2 L79.9 709.9 L72.5 707 L66.3 705.8 L61.4 700.8 L58.2 695.9ZM42.9 681.1 L46.6 679.9 L50.3 684.8 L51.6 688.5 L47.9 689.3 L44.2 685.3ZM783.3 729.2 L787 734.1 L789.5 740.2 L795.7 747.6 L794.4 755 L789.5 752.6 L785.3 743.9 L783.3 735.3ZM769.8 790.7 L773.5 788.8 L778.4 789.5 L778.4 793.2 L769.8 793.2Z"/>
<path id="highways" stroke="#8a7412" d="M187.3 115.7C187.3 117.2 187.8 120.9 187.3 124.6C186.8 128.3 186.2 134.2 184.3 137.9C182.5 141.6 177.7 143.8 176.2 146.7C174.7 149.7 176.9 152.2 175.4 155.6C174 159.1 169.7 163.7 167.3 167.4C165 171.1 163.4 174.6 161.4 177.8C159.4 181 157.5 183.5 155.5 186.7C153.5 189.9 151.2 194.1 149.6 197C147.9 200 145.9 201.9 145.4 204.4C144.9 206.9 146.2 210 146.6 211.8C147.1 213.6 147.2 213.1 148.1 215C149 217 151.2 222.2 151.8 223.6M181.5 6C182.5 7.1 185.8 10.5 187.6 12.8C189.4 15 191 17.1 192.4 19.6C193.7 22 194.7 24.9 195.7 27.7C196.8 30.5 197.7 34 198.5 36.5C199.2 39 200.1 40.2 200.5 42.6C200.9 45 200.8 47.8 200.9 50.7C201 53.7 201 56.7 200.9 60.2C200.8 63.7 200.6 68.1 200.5 71.7C200.4 75.3 200.6 78.6 200.5 81.9C200.4 85.2 200.3 88.7 199.8 91.4C199.4 94.1 198.5 96.1 197.8 98.1C197.1 100.2 196.8 101.9 195.7 103.6C194.7 105.3 192.9 106.9 191.7 108.3C190.4 109.7 189 110.4 188.3 111.7C187.6 113 187.7 115.3 187.6 116M240.5 6C239.8 6.9 237.9 9.8 236.4 11.4C234.9 13 232.9 14.1 231.7 15.5C230.4 16.8 229.5 18 228.9 19.6C228.4 21.1 228.3 22.7 228.3 25C228.2 27.2 228.5 30.6 228.5 33.1C228.5 35.6 228.4 37.6 228.3 39.9C228.1 42.1 228 44.6 227.6 46.7C227.1 48.7 226.2 50.2 225.6 52.1C224.9 54 224.2 56.4 223.5 58.2C222.8 60 223 61.2 221.5 62.9C220 64.6 217.2 67.2 214.7 68.3C212.2 69.5 208.9 69.3 206.6 70C204.3 70.6 201.8 71.8 200.9 72.1M240.5 6C241.4 6.9 244.5 9.7 245.9 11.4C247.2 13.1 248 14.6 248.6 16.2C249.2 17.7 248.4 19.2 249.3 20.9C250.2 22.6 252.5 24.6 254 26.3C255.5 28 256.7 29 258.1 31.1C259.4 33.1 261.2 36.4 262.1 38.5C263 40.7 263.3 41.9 263.5 43.9C263.7 46 263 48.8 263.5 50.7C263.9 52.6 264.9 54 266.2 55.5C267.6 56.9 269.6 58.7 271.6 59.5C273.7 60.3 276.1 60 278.4 60.2C280.7 60.4 283.4 60.7 285.2 60.9C287 61.1 287.9 62 289.2 61.6C290.6 61.1 292.1 59.3 293.3 58.2C294.5 57 295 55.6 296.7 54.8C298.4 54 301.3 53.6 303.5 53.4C305.6 53.2 307.6 53.2 309.6 53.7C311.5 54.1 313.2 55.1 315 56.1C316.7 57.2 319.2 59.5 320 60.2M320.5 61.4C322.8 63.3 329.8 68.6 334.1 72.5C338.4 76.4 342.3 81.1 346.4 84.8C350.5 88.5 354.6 92.1 358.7 94.7C362.8 97.2 368.8 99.2 370.8 100.1M370.8 100C372.6 101.4 378.4 105.5 381.9 108.6C385.4 111.7 388.9 115.4 391.7 118.5C394.6 121.6 396.9 124.6 399.1 127.1C401.4 129.6 404.2 132.2 405.3 133.3M206 200.6C208.5 198.5 215.4 192 220.8 188.3C226.1 184.6 231 181.3 238 178.4C245 175.5 254.4 173.1 262.7 171C270.9 169 279.1 167.7 287.3 166.1C295.5 164.5 304.1 162.8 311.9 161.2C319.7 159.5 329.4 156.6 334.1 156.2C338.8 155.9 339 158.5 340 159M340 159.1C341.2 157.9 344.7 153.6 347.4 151.7C350.1 149.9 352.5 148.9 356 148C359.5 147.2 364.2 147.8 368.3 146.8C372.4 145.8 377.2 142.7 380.6 141.9C384.1 141.1 387 142.7 389.3 141.9C391.5 141.1 392.5 138.2 394.2 136.9C395.8 135.7 397.3 135.1 399.1 134.5C401 133.9 404.2 133.5 405.3 133.3M381.9 108.6C380.6 109.9 376.7 112.9 374.5 116C372.2 119.1 369.9 123.6 368.3 127.1C366.8 130.6 365.2 133.7 365.2 136.9C365.2 140.2 366.8 143.7 368.3 146.8C369.9 149.9 372.2 153 374.5 155.4C376.7 157.9 379 160 381.9 161.6C384.7 163.1 388.4 164.1 391.7 164.7C395 165.2 398.5 164.8 401.6 164.7C404.7 164.6 407.3 164.6 410.2 164C413.1 163.5 415.8 162.4 418.8 161.6C421.8 160.8 426 160.8 428.1 159.1C430.1 157.5 430.5 154.4 431.1 151.7C431.7 149.1 431.7 145.8 431.7 143.1C431.7 140.4 431.2 136.9 431.1 135.7M405.3 133.3C405.5 134.3 406.7 136.7 406.5 139.4C406.3 142.1 404.9 146 404 149.3C403.2 152.5 402.1 156.5 401.6 159.1C401.1 161.7 401.4 162.2 401 164.7C400.6 167.1 399.7 170.3 399.1 173.9C398.5 177.5 397.7 181.9 397.3 186.2C396.9 190.6 396.9 196.7 396.7 200C396.4 203.3 396.1 204.9 396 205.9M405.3 133.3C405.9 134.1 407.5 136.3 409 138.2C410.4 140 411.8 142.1 413.9 144.3C415.9 146.6 418.9 149.3 421.3 151.7C423.6 154.2 426 156.7 428.1 159.1C430.1 161.6 431.9 164 433.6 166.5C435.3 169 436.7 171.2 438.5 173.9C440.4 176.6 442.6 179.8 444.7 182.5C446.7 185.2 448.6 187.4 450.8 189.9C453.1 192.4 456.7 195.6 458.2 197.3C459.8 199 458.7 198.5 460.1 200C461.4 201.5 465.2 205.1 466.2 206.2M405.3 133.3C406.7 133.6 410.4 135.1 413.9 135.1C417.4 135.1 422.1 134 426.2 133.3C430.3 132.5 435.2 131.4 438.5 130.8C441.8 130.2 444.7 129.8 445.9 129.6M472.5 6C472.3 8.1 471.9 14.2 471.3 18.3C470.7 22.4 469.8 26.1 468.8 30.6C467.8 35.1 466.6 41.3 465.1 45.4C463.7 49.5 462.7 51.2 460.2 55.3C457.7 59.4 454.4 64.7 450.3 70C446.2 75.4 440.5 81.5 435.6 87.3C430.6 93 424.9 99.2 420.8 104.5C416.7 109.9 413.4 115.2 410.9 119.3C408.5 123.4 406.8 127.5 406 129.2M588.3 6C588.5 8.5 588.7 16.3 589.5 20.8C590.3 25.3 591.3 29.4 593.2 33.1C595 36.8 598.4 40.5 600.6 42.9C602.7 45.4 605.1 47.1 606 47.9M445.9 129.2C449.5 130.4 459.9 135.3 467.6 136.5C475.3 137.8 484 135.9 492.2 136.5C500.4 137.2 508.2 137.4 516.8 140.2C525.5 143.1 536.1 150.7 543.9 153.8C551.7 156.9 557.1 158.1 563.6 158.7C570.2 159.3 576.3 158.3 583.3 157.5C590.4 156.7 602.2 154.4 606 153.8M606 153.8C603.5 155.8 595.3 161.2 590.7 166.1C586.1 171 582.5 176.7 578.4 183.3C574.3 190 568.2 202.2 566.1 206M806 71.3C802.6 72.5 792 76.4 785.8 78.7C779.6 80.9 773.9 82.8 768.6 84.8C763.2 86.9 758.7 88.7 753.8 91C748.9 93.2 743.9 95.7 739 98.4C734.1 101 729.2 104.1 724.2 107C719.3 109.9 714.8 112.7 709.4 115.6C704.1 118.5 698 121.6 692.2 124.2C686.5 126.9 679.9 129.4 675 131.6C670 133.9 665.9 135.7 662.7 137.8C659.4 139.8 658.5 141.9 655.3 143.9C652 146 647.1 149.3 642.9 150.1C638.8 150.9 635.1 149.1 630.6 148.9C626.1 148.7 619.1 149.9 615.9 148.9C612.6 147.8 612.2 145 610.9 142.7C609.7 140.4 609.3 136.7 608.5 135.3C607.6 133.9 606.4 134.3 606 134.1M615.9 148.9 L606 155M659 142.7C660.2 144.1 664.3 149.1 666.3 151.3C668.4 153.6 670.2 154.2 671.3 156.2C672.3 158.3 671.1 161.4 672.5 163.6C673.9 165.9 677.8 167.7 679.9 169.8C681.9 171.8 683.8 173.7 684.8 176C685.8 178.2 684.4 181.1 686 183.3C687.7 185.6 691.6 188.5 694.7 189.5C697.7 190.5 701.2 189.7 704.5 189.5C707.8 189.3 711.5 186.8 714.4 188.3C717.2 189.7 719.7 195.2 721.8 198.1C723.8 201.1 725.9 204.7 726.7 206M714.4 188.3C717.7 187.4 727.5 184.8 734.1 183.3C740.6 181.9 748 180.9 753.8 179.6C759.5 178.4 763.6 176.9 768.6 176C773.5 175 778.4 174.5 783.3 174C788.3 173.5 794.3 172.9 798.1 173C801.9 173.1 804.7 174.4 806 174.7M6 256.5C10.1 256.3 22.4 256.1 30.6 255.3C38.8 254.4 47.1 253.4 55.3 251.6C63.5 249.7 71.7 246.8 79.9 244.2C88.1 241.5 97.1 238.2 104.5 235.6C111.9 232.9 117.7 230 124.2 228.2C130.8 226.3 138 225.1 143.9 224.5C149.9 223.9 157.3 224.5 159.9 224.5M161.2 221.3C163.6 221.3 173.5 219.5 176 221.3C178.4 223 178.4 230.1 176 231.9C173.5 233.6 163.6 233.6 161.2 231.9C158.7 230.1 161.2 223 161.2 221.3M176 224.5C178 223.4 184.6 220.6 188.3 218.3C192 216.1 195.2 212.8 198.1 210.9C201.1 209.1 204.7 207.8 206 207.2M164.9 231.9C165.3 234.1 166.5 240.7 167.3 245.4C168.2 250.1 169 254.4 169.8 260.2C170.6 265.9 171.7 273.3 172.3 279.9C172.8 286.5 172.6 293.4 173 299.6C173.4 305.8 174 310.7 174.7 316.8C175.4 323 176.2 330.4 177.2 336.5C178.2 342.7 179.9 347.6 180.9 353.8C181.9 359.9 183.1 367.3 183.3 373.5C183.5 379.6 182.9 385.3 182.1 390.7C181.3 396.1 179 403.5 178.4 406M398.1 206C398.2 209.3 399 220.4 398.6 225.7C398.2 231 396.4 233.1 395.7 238C395 242.9 394.2 248.7 394.4 255.3C394.6 261.8 396.7 270 396.9 277.4C397.1 284.8 395.2 293 395.7 299.6C396.1 306.2 398.5 311.1 399.3 316.8C400.2 322.6 400 328.7 400.6 334.1C401.2 339.4 402.8 344.3 403 348.9C403.3 353.4 401.6 357.6 402.3 361.2C403 364.7 406.6 368.6 407.5 370M407.5 370C405.4 372.1 401.2 378.8 395 382.5C388.8 386.2 378.3 389.6 370 392.5C361.7 395.4 349.8 397.8 345 400C340.2 402.2 342.1 405 341.5 406M407.5 370C407.2 373.3 405.8 384 406 390C406.2 396 408.1 403.3 408.5 406M387.3 386.8C388.7 386.5 393.2 386 395.9 385.3C398.6 384.6 401 383.7 403.3 382.4C405.5 381 407.6 379.3 409.4 377.4C411.3 375.6 412.9 373.3 414.4 371.3C415.8 369.2 417.5 366.1 418.1 365.1M406 368.6C407.6 367.7 411.7 366.9 415.9 363.6C420 360.4 425.7 353.4 430.6 348.9C435.6 344.3 440.9 340.2 445.4 336.5C449.9 332.8 454.4 330.4 457.7 326.7C461 323 462.2 318.9 465.1 314.4C468 309.9 471.7 304.9 475 299.6C478.2 294.3 481.9 287.3 484.8 282.4C487.7 277.4 490.2 274.6 492.2 270C494.3 265.5 495.7 259.4 497.1 255.3C498.6 251.2 499.6 248.1 500.8 245.4C502.1 242.7 503.9 240.3 504.5 239.3M466.3 206C467.8 207.6 472.3 212.2 475 215.9C477.6 219.5 479.9 225.1 482.4 228.2C484.8 231.2 486 232.5 489.7 234.3C493.4 236.2 500.4 239 504.5 239.3C508.6 239.5 511.5 235.8 514.4 235.6C517.2 235.4 520.5 237.6 521.8 238M521.8 238C523.8 236.8 530.4 233.5 534.1 230.6C537.8 227.8 541.1 223.9 543.9 220.8C546.8 217.7 549.3 214.6 551.3 212.2C553.4 209.7 555.4 207 556.2 206M521.8 238C522.6 239.3 524.6 243.4 526.7 245.4C528.7 247.5 532.4 247.5 534.1 250.3C535.7 253.2 535.3 258.1 536.5 262.7C537.8 267.2 540.2 272.5 541.5 277.4C542.7 282.4 541.9 287.7 543.9 292.2C546 296.7 551.5 300.8 553.8 304.5C556 308.2 555 311.1 557.5 314.4C559.9 317.7 565.1 320.1 568.6 324.2C572.1 328.3 576.2 334.9 578.4 339C580.7 343.1 581.5 347.2 582.1 348.9M415.9 363.6C420.4 363.4 434.3 362.4 442.9 362.4C451.6 362.4 459.4 364 467.6 363.6C475.8 363.2 484.8 361.2 492.2 359.9C499.6 358.7 504.9 357.5 511.9 356.2C518.9 355 527.1 353.4 534.1 352.6C541.1 351.7 546.8 352.3 553.8 351.3C560.8 350.3 572.3 347.2 576 346.4M588.3 353.8 L606 350.1M588.3 343.9C589.9 342.3 595.2 336.5 598.1 334.1C601.1 331.6 604.7 330 606 329.2M576 339C575.5 336.5 573.5 329.2 573.5 324.2C573.5 319.3 574.7 313.6 576 309.4C577.2 305.3 579.6 302.3 580.9 299.6C582.2 296.9 583.3 294.5 583.8 293.4M578.4 356.2C576.8 357.9 571.8 362.4 568.6 366.1C565.3 369.8 561.6 373.9 558.7 378.4C555.8 382.9 553.4 388.6 551.3 393.2C549.3 397.8 547.2 403.9 546.4 406M585.8 358.7C587 360.4 590.7 364.9 593.2 368.6C595.7 372.3 598.4 377.6 600.6 380.9C602.7 384.2 605.1 387 606 388.3M574.7 348.9C575.1 347.6 575.7 343.1 577.2 341.5C578.6 339.8 581.1 338.8 583.3 339C585.6 339.2 589.2 340.9 590.7 342.7C592.3 344.5 592.9 347.6 592.7 350.1C592.5 352.6 591.3 356 589.5 357.5C587.7 359 584.3 359.5 582.1 359.2C579.9 358.9 577.7 357.5 576.4 355.8C575.2 354 575 350 574.7 348.9M406 378.4 L413.4 368.6M606 326.7C608.5 325 615.4 319.7 620.8 316.8C626.1 314 632.3 312.3 638 309.4C643.8 306.6 649.9 302.9 655.3 299.6C660.6 296.3 665.1 292.6 670 289.7C675 286.9 679.1 284.6 684.8 282.4C690.6 280.1 699.2 278.5 704.5 276.2C709.9 273.9 713.6 271.7 716.8 268.8C720.1 265.9 720.5 261.4 724.2 259C727.9 256.5 734.1 256.5 739 254C743.9 251.6 748 247.3 753.8 244.2C759.5 241.1 767.3 238.2 773.5 235.6C779.6 232.9 785.3 230.4 790.7 228.2C796.1 225.9 803.5 223 806 222M726.7 206C727.9 207.6 731.2 214.2 734.1 215.9C737 217.5 741.1 214.2 743.9 215.9C746.8 217.5 748.9 221.6 751.3 225.7C753.8 229.8 756.7 235.1 758.7 240.5C760.8 245.8 762.2 252.4 763.6 257.7C765.1 263.1 766.3 268.8 767.3 272.5C768.4 276.2 769.4 278.7 769.8 279.9M739 254C739.4 255.5 739.4 259.8 741.5 262.7C743.5 265.5 747.6 268.8 751.3 271.3C755 273.7 759.1 274.8 763.6 277.4C768.2 280.1 774.3 284 778.4 287.3C782.5 290.6 785 294.3 788.3 297.1C791.6 300 795.2 302.7 798.1 304.5C801.1 306.4 804.7 307.6 806 308.2M606 352.6C608.1 353.8 613.4 358.3 618.3 359.9C623.2 361.6 629.4 361.2 635.6 362.4C641.7 363.6 647.9 366.3 655.3 367.3C662.7 368.4 671.7 367.9 679.9 368.6C688.1 369.2 696.3 370.5 704.5 371C712.7 371.5 722.2 371.1 729.2 371.5C736.1 371.9 741.5 374 746.4 373.5C751.3 373 754.2 370.6 758.7 368.6C763.2 366.5 768.6 363.2 773.5 361.2C778.4 359.1 783.8 358.7 788.3 356.2C792.8 353.8 797.6 349.7 800.6 346.4C803.5 343.1 805.1 338.2 806 336.5M606 395.7C606.4 396.5 607.8 398.9 608.5 400.6C609.1 402.3 609.5 405.1 609.7 406M6 460.7C10.1 461.2 22.4 462.9 30.6 463.9C38.8 464.8 47.5 464.9 55.3 466.3C63.1 467.8 70.9 470.7 77.4 472.5C84 474.3 88.5 477.2 94.7 477.4C100.8 477.6 107.8 474.6 114.4 473.7C120.9 472.9 129.2 472.3 134.1 472.5C139 472.7 141.7 473.7 143.9 475C146.2 476.2 146 479.1 147.6 479.9C149.3 480.7 150.3 479.9 153.8 479.9C157.3 479.9 162.8 480.2 168.6 479.9C174.3 479.6 182 478.5 188.3 477.9C194.5 477.3 203 476.5 206 476.2M176 406C175.1 407.6 173.1 412.2 171 415.9C169 419.5 165.3 423.7 163.6 428.2C162 432.7 162 438.4 161.2 442.9C160.4 447.5 159.9 451.2 158.7 455.3C157.5 459.4 154.8 464.3 153.8 467.6C152.8 470.9 153.6 472.1 152.6 475C151.5 477.8 149.5 481.1 147.6 484.8C145.8 488.5 143.3 493 141.5 497.1C139.6 501.2 138 504.1 136.5 509.4C135.1 514.8 133.9 522.6 132.8 529.2C131.8 535.7 131 541.5 130.4 548.9C129.8 556.2 129.6 566.1 129.2 573.5C128.7 580.9 128.3 587.8 127.9 593.2C127.5 598.6 126.9 603.9 126.7 606M341.5 406C339.4 408.1 333.3 414.2 329.2 418.3C325 422.4 320.9 426.5 316.8 430.6C312.7 434.7 307.8 439.3 304.5 442.9C301.2 446.6 299.6 449.7 297.1 452.8C294.7 455.9 292.6 459 289.7 461.4C286.9 463.9 283.6 465.9 279.9 467.6C276.2 469.2 271.1 470.2 267.6 471.3C264.1 472.3 265.1 473.1 259 473.7C252.8 474.3 239.5 474.4 230.6 475C221.8 475.5 210.1 476.6 206 476.9M259 473.7C257.9 475.6 254.6 480.5 252.8 484.8C251 489.1 249.9 495.1 247.9 499.6C245.8 504.1 242.5 508.2 240.5 511.9C238.4 515.6 236.6 518.9 235.6 521.8C234.5 524.6 235.6 526.7 234.3 529.2C233.1 531.6 230.4 533.9 228.2 536.5C225.9 539.2 222.8 542.3 220.8 545.2C218.7 548 216.7 550.3 215.9 553.8C215 557.3 216.3 561.6 215.9 566.1C215.4 570.6 214.4 576.4 213.4 580.9C212.4 585.4 210.9 589.9 209.7 593.2C208.5 596.5 206.6 599.3 206 600.6M406 535.3C405.1 536.7 403.1 540.9 400.6 543.9C398 547 394.4 550.1 390.7 553.8C387 557.5 382.5 562.4 378.4 566.1C374.3 569.8 370.2 572.7 366.1 576C362 579.2 357.9 582.9 353.8 585.8C349.7 588.7 346.4 590.9 341.5 593.2C336.5 595.4 329.2 597.2 324.2 599.3C319.3 601.5 314 604.9 311.9 606M408.5 406C409.3 408.1 411.3 414.2 413.4 418.3C415.4 422.4 418.5 426.1 420.8 430.6C423 435.1 425.3 440.9 426.9 445.4C428.6 449.9 429.2 454.2 430.6 457.7C432.1 461.2 434.1 464.1 435.6 466.3C437 468.6 438.6 470.4 439.3 471.3M439.3 471.3C441.1 471.5 446.4 472.5 450.3 472.5C454.2 472.5 457.7 472.5 462.7 471.3C467.6 470 474.1 467.2 479.9 465.1C485.6 463.1 491.8 461.8 497.1 459C502.5 456.1 508.2 451.8 511.9 447.9C515.6 444 516.8 439.3 519.3 435.6C521.8 431.9 524.2 429 526.7 425.7C529.2 422.4 531.2 418.5 534.1 415.9C537 413.2 542.1 411.3 543.9 409.7C545.8 408.1 545 406.6 545.2 406M439.3 471.3C438.6 473.1 437.4 478.5 435.6 482.4C433.7 486.3 430.2 490.6 428.2 494.7C426.1 498.8 425.3 502.9 423.2 507C421.2 511.1 418.7 514.8 415.9 519.3C413 523.8 407.6 531.6 406 534.1M606 388.3C606.5 390 607.9 395.7 609 398.6C610 401.6 610.6 403.5 612.2 406C613.7 408.5 616.1 410.9 618.3 413.4C620.6 415.9 623.7 418.3 625.7 420.8C627.8 423.2 629.6 425.3 630.6 428.2C631.7 431 631.9 433.5 631.9 438C631.9 442.5 631 449.1 630.6 455.3C630.2 461.4 629.6 468.8 629.4 475C629.2 481.1 629.2 486.5 629.4 492.2C629.6 498 629.6 504.1 630.6 509.4C631.7 514.8 633.5 519.3 635.6 524.2C637.6 529.2 640.9 534.5 642.9 539C645 543.5 646.6 546.8 647.9 551.3C649.1 555.8 649.1 560.8 650.3 566.1C651.6 571.4 653.8 578 655.3 583.3C656.7 588.7 658.1 594.3 659 598.1C659.8 601.9 660 604.7 660.2 606M625.7 420.8C627.3 421.4 633.5 422.8 635.6 424.5C637.6 426.1 638.4 428.6 638 430.6C637.6 432.7 633.9 435.8 633.1 436.8M638 430.6C639.3 432.3 642.5 437.6 645.4 440.5C648.3 443.4 651.2 445.6 655.3 447.9C659.4 450.1 664.7 452 670 454C675.4 456.1 681.5 458.3 687.3 460.2C693 462 698.4 463.9 704.5 465.1C710.7 466.3 717.7 466.6 724.2 467.6C730.8 468.6 737.4 470 743.9 471.3C750.5 472.5 757.1 473.1 763.6 475C770.2 476.8 777.6 480.5 783.3 482.4C789.1 484.2 794.3 484.2 798.1 486C801.9 487.9 804.7 492.2 806 493.4M806 536.5C805.5 537.8 803.7 540.2 803 543.9C802.3 547.6 803 553.8 801.8 558.7C800.6 563.6 797.9 568.6 795.7 573.5C793.4 578.4 790.1 583.8 788.3 588.3C786.4 592.8 785.2 597.6 784.6 600.6C784 603.5 784.6 605.1 784.6 606M6 661.4C7.6 661 11.7 660.4 15.9 659C20 657.5 25.3 654.6 30.6 652.8C36 651 42.1 649.3 47.9 647.9C53.6 646.4 59 644.8 65.1 644.2C71.3 643.6 79.1 644.6 84.8 644.2C90.6 643.8 94.7 642.3 99.6 641.7C104.5 641.1 109.9 640.7 114.4 640.5C118.9 640.3 121.8 640.3 126.7 640.5C131.6 640.7 138.6 640.7 143.9 641.7C149.3 642.7 153.8 644.8 158.7 646.6C163.6 648.5 169.4 651.4 173.5 652.8C177.6 654.2 180.1 654.6 183.3 655.3C186.6 655.9 189.4 656.5 193.2 656.5C197 656.5 203.9 655.5 206 655.3M6 618.3C6.8 619.5 9.7 622.8 10.9 625.7C12.2 628.6 12.8 631.9 13.4 635.6C14 639.3 14.3 644 14.6 647.9C14.9 651.8 15.2 657.1 15.4 659M126.7 606C126.7 608.5 126.5 615.9 126.7 620.8C126.9 625.7 127.3 631.9 127.9 635.6C128.5 639.3 129.4 640.5 130.4 642.9C131.4 645.4 133.3 647.5 134.1 650.3C134.9 653.2 135.5 657.3 135.3 660.2C135.1 663.1 133.5 665.1 132.8 667.6C132.2 670 131.8 673.7 131.6 675M91 651.6C92 653.4 94.5 659.6 97.1 662.7C99.8 665.7 103.7 668.4 107 670C110.3 671.7 112.7 671.7 116.8 672.5C120.9 673.3 127.1 673.5 131.6 675C136.1 676.4 140.2 679.7 143.9 681.1C147.6 682.6 151.1 683 153.8 683.6C156.5 684.2 158.3 685.4 159.9 684.8C161.6 684.2 161.4 681.9 163.6 679.9C165.9 677.8 170.6 675 173.5 672.5C176.4 670 179.2 668 180.9 665.1C182.5 662.2 182.9 656.9 183.3 655.3M206 606C205.1 607.2 202.3 610.5 200.6 613.4C198.9 616.3 197.1 620 195.7 623.2C194.2 626.5 193.2 629.8 192 633.1C190.7 636.4 189.3 639.3 188.3 642.9C187.2 646.6 186 652 185.8 655.3C185.6 658.5 186.8 661.4 187 662.7M206 652.8C208.1 652 213.4 649.3 218.3 647.9C223.2 646.4 229.4 645 235.6 644.2C241.7 643.4 248.7 643.2 255.3 642.9C261.8 642.7 269.6 643.3 275 642.5C280.3 641.6 283.2 639.4 287.3 638C291.4 636.7 296.3 635.8 299.6 634.3C302.9 632.9 304.5 631.2 307 629.4C309.4 627.6 310.7 624.1 314.4 623.2C318.1 622.4 324.2 623.7 329.2 624.5C334.1 625.3 339 626.9 343.9 628.2C348.9 629.4 354.6 630.4 358.7 631.9C362.8 633.3 365.3 635.8 368.6 636.8C371.8 637.8 375.1 639 378.4 638C381.7 637 385 632.7 388.3 630.6C391.6 628.6 395.2 627.1 398.1 625.7C401.1 624.3 404.7 622.6 406 622M311.9 606C311.3 607.2 309 610.9 308.2 613.4C307.4 615.9 307.2 618.1 307 620.8C306.8 623.4 307 628 307 629.4M406 620.8C408.5 620.4 414.6 618.9 420.8 618.3C426.9 617.7 437.2 616.7 442.9 617.1C448.7 617.5 449.9 621 455.3 620.8C460.6 620.6 468.8 616.6 475 615.9C481.1 615.1 485.6 616.3 492.2 616.3C498.8 616.3 508.2 615.1 514.4 615.9C520.5 616.6 524.2 619.1 529.2 620.8C534.1 622.4 539 624.1 543.9 625.7C548.9 627.3 553.8 628.8 558.7 630.6C563.6 632.5 568.6 635.4 573.5 636.8C578.4 638.2 582.8 639 588.3 639.3C593.7 639.5 603 638.2 606 638M606 639.3C608.5 639.7 615.9 641.1 620.8 641.7C625.7 642.3 629.8 642.1 635.6 642.9C641.3 643.8 648.7 645.2 655.3 646.6C661.8 648.1 668.8 650.1 675 651.6C681.1 653 686.5 653.6 692.2 655.3C698 656.9 704.1 660.4 709.4 661.4C714.8 662.4 719.3 661.2 724.2 661.4C729.2 661.6 734.1 663.1 739 662.7C743.9 662.2 748.9 660 753.8 659C758.7 657.9 763.6 657.3 768.6 656.5C773.5 655.7 780.9 654.4 783.3 654M661.4 606C662 607.6 663.3 612.6 665.1 615.9C667 619.1 669.6 622.4 672.5 625.7C675.4 629 679.1 632.7 682.4 635.6C685.6 638.4 689.3 640.1 692.2 642.9C695.1 645.8 697.1 649.7 699.6 652.8C702.1 655.9 704.9 658.1 707 661.4C709 664.7 710.3 668.6 711.9 672.5C713.6 676.4 715.2 680.7 716.8 684.8C718.5 688.9 720.1 693.4 721.8 697.1C723.4 700.8 724.6 703.7 726.7 707C728.7 710.3 732 713.6 734.1 716.8C736.1 720.1 737.4 723 739 726.7C740.6 730.4 742.5 734.9 743.9 739C745.4 743.1 746.8 747.2 747.6 751.3C748.4 755.4 748 759.1 748.9 763.6C749.7 768.2 751.7 773.5 752.6 778.4C753.4 783.3 753.6 790.7 753.8 793.2M784.6 606C785 607.6 786.4 611.7 787 615.9C787.7 620 788.1 626.1 788.3 630.6C788.4 635.1 788.6 640.3 787.8 642.9C787 645.6 784.9 645 783.3 646.6C781.8 648.3 779 650.1 778.4 652.8C777.8 655.5 778 660.6 779.6 662.7C781.3 664.7 785.6 663.5 788.3 665.1C790.9 666.8 793.6 669.6 795.7 672.5C797.7 675.4 799.3 679.5 800.6 682.4C801.8 685.2 802.1 687.7 803 689.7C803.9 691.8 805.5 693.8 806 694.7M778.4 645.4C780.1 645 786 641.3 788.3 642.9C790.5 644.6 792 651.6 792 655.3C792 659 790.3 663.7 788.3 665.1C786.2 666.6 781.3 667.2 779.6 663.9C778 660.6 778.6 648.5 778.4 645.4M606 48C605.2 50.8 601.7 57.2 601 65C600.3 72.8 600.8 85 602 95C603.2 105 605.7 116 608 125C610.3 134 614.7 145 616 149"/>
<path id="ocean" fill="#024467" fill-rule="evenodd" stroke="#000" d="M393.2 645.4 L396.9 642.9 L394.2 641.2 L391 640.9 L388.3 639.3 L388.2 636 L389.5 633.1 L387 630.6 L385.3 633 L384.3 635.9 L382.1 638 L380.9 635.6 L379.6 633.1 L376 634.3 L377.6 637 L378.2 639.9 L378.4 642.9 L376.3 645.1 L374.7 647.6 L372.8 649.9 L370.1 651.5 L368.1 653.6 L365.5 655.4 L362.5 655.3 L359.5 655.5 L356.8 656.7 L353.8 656.5 L350.8 656.3 L348.2 657.4 L345.7 659.3 L343 660 L340.1 659.8 L337.4 660.7 L334.6 661.3 L335.3 659 L333.5 657 L332.8 654 L330.2 653 L327.9 651.6 L326.5 648.3 L324.2 645.4 L323.3 642.9 L322.2 640.5 L321.3 638 L321.6 635.2 L322.7 632.4 L320.7 629.7 L320.5 626.9 L316.8 623.7 L313.1 622 L310.7 625.7 L310.1 629.1 L309.7 632.4 L308.2 635.6 L307.2 638.1 L308.5 640.9 L306.7 643.3 L308 646.1 L306.3 648.6 L305.9 651.2 L306.1 653.8 L306.2 656.5 L305.9 659.1 L305.5 656.1 L303.3 654 L299.2 653.9 L297.1 650.3 L294.7 647.5 L291 647.9 L288.2 649.3 L285 649.7 L282.4 651.6 L278.7 652.6 L275 652.8 L272.2 653.1 L269.5 652.8 L266.9 652 L264.3 651.4 L261.7 650.4 L259 650.3 L256.5 649.1 L254.6 646.7 L251.6 646.6 L248.8 646.4 L246 647 L243.3 647.2 L240.5 646.6 L238.1 649.2 L235 650 L231.4 649 L228.6 650.3 L225.7 651.6 L222.8 653.4 L219.5 654 L217.2 650 L214.4 651.4 L215.8 655.6 L214.6 658.2 L213 660.5 L210.9 663 L208.8 665.5 L206.7 669.7 L203.7 668.5 L200.7 667.7 L197.5 667.6 L194.9 669.7 L191.9 671.1 L189.3 673.1 L187.7 676 L185.8 678 L183.4 679.5 L178.5 680.2 L176.4 683.8 L178.5 688 L181.6 688.8 L184.9 688.7 L187.7 692.9 L191.9 695 L196.1 692.2 L197.6 689.5 L198.2 686.6 L199.9 684.1 L201.7 681.6 L205.2 680.2 L205.1 683.5 L205.9 686.6 L206.9 689.9 L207.2 693.3 L208.8 696.4 L205.8 696.7 L203.1 697.8 L200.3 700.6 L196.7 701 L193.3 702 L191.9 706.3 L190.3 708.9 L187.7 710.5 L189.1 713.3 L187 715 L183.9 714.6 L182 716.8 L183.7 719.1 L186.3 720.3 L190.5 723.1 L191.1 726 L191.9 728.8 L189.7 731.5 L186.3 730.9 L188.1 732.9 L190.5 734.4 L193.2 736 L196.1 737.2 L198.7 735.4 L201.7 734.4 L203.1 737.7 L206.7 737.9 L209.2 738.6 L211.3 741 L214.4 740 L216.8 742.1 L220 742.8 L222.8 742 L225.6 741.4 L225.8 744.9 L228.1 747.2 L230 749.8 L231.3 752.7 L234.5 754.7 L238.3 754.1 L241.1 757.5 L243.1 760.4 L240 763.3 L240.5 766.2 L240.5 769.1 L240.8 772.1 L241 775 L105.8 775 L105.9 772.4 L105 769.8 L106.7 767.2 L106.2 764.6 L105.7 762 L106.2 759.3 L105.8 756.7 L103.9 754.1 L102.1 751.3 L99.7 749.2 L97 747.4 L94.7 745.2 L92.3 743.8 L89.9 742.4 L87.3 741.5 L84.8 743.9 L86.7 746.1 L89.2 747.8 L91 750.1 L89.3 752.1 L87.3 753.8 L84.5 752.6 L82.6 750.1 L79.9 748.9 L78.4 746.5 L76.9 744.2 L76.7 741.2 L74.9 739 L73.3 736.8 L72.5 734.1 L71.9 731 L71.3 727.9 L68.4 730.1 L65.1 731.6 L61.8 732.5 L58.5 731.8 L55.3 731.6 L52.3 730.2 L49.1 729.2 L51 725.7 L51.6 721.8 L50.6 719.1 L49.2 716.8 L47.9 714.4 L48.2 711 L46.8 707.8 L46.6 704.5 L44.9 706.5 L42.9 708.2 L39.8 709.5 L36.3 708.2 L33.1 709.4 L29.6 707.6 L25.7 707 L27 703.6 L30.6 703.3 L28.2 699.1 L24.9 699.6 L21.6 699.1 L18.3 699.6 L15.5 700.9 L13.4 703.3 L9.9 705.1 L6 705.8 L0 705.8 L0 815 L705.8 815 L706.5 812.3 L705.8 809.5 L705.2 806.8 L706.5 804.1 L706.3 801.4 L705.5 798.6 L705.9 795.9 L705.8 793.2 L706.9 790.7 L708.2 788.3 L711.1 786.2 L713.1 783.3 L711.9 780.4 L709.4 778.4 L703.3 773.5 L704.1 769.8 L704.5 766.1 L701.1 764 L700.8 759.9 L698.1 758.7 L695 758.7 L692.2 757.5 L689.4 758.5 L687.3 760.5 L684 760.8 L682.4 763.6 L683.9 760.7 L684.8 757.5 L682.6 755.3 L679.9 753.8 L679.2 749.9 L677.4 746.4 L675.4 744.5 L673.3 742.7 L671.6 740.5 L670.6 737.8 L668.6 735.9 L666.9 733.7 L665.1 731.6 L662.1 730.2 L659.3 728.4 L656.5 726.7 L656.4 723.5 L657.7 720.5 L656.1 717 L655.3 713.1 L652.6 710.6 L649.1 709.4 L646.8 707.6 L645.3 705 L642.9 703.3 L642.8 699.2 L640.5 695.9 L639.2 693.5 L637.1 691.9 L635.4 689.9 L633.1 688.5 L630.3 687.9 L628.4 685.7 L625.7 684.8 L623.2 683.7 L621.5 681.3 L618.7 680.5 L616.3 679.1 L614.5 676.9 L612.2 675.5 L609.2 674.2 L606 674.5 L603.4 674.8 L600.7 673.6 L598.1 675 L594.7 677 L590.7 677.4 L588 678.2 L585.8 679.9 L587.2 682.9 L588.3 686 L588 689.2 L587 692.2 L583.3 689.7 L578.4 691 L575.1 691.7 L573.5 694.7 L571 696.4 L569.8 699.1 L566.1 699.6 L562.6 701.4 L558.7 702.1 L555.9 702.5 L553.6 704.1 L551.3 705.8 L546.4 707 L548.9 703.3 L547.6 700.8 L544.8 701.4 L542.7 703.3 L539.7 704 L539 707 L536.4 707.6 L534 708.7 L531.7 710 L529.2 710.7 L527.1 712.7 L524.2 712.4 L521 712 L517.7 712.1 L514.4 711.9 L510 709.7 L511.4 709.9 L513.9 707 L514.5 703.9 L514.4 700.8 L513.5 697.7 L510.7 695.9 L506.9 695.9 L507 694.7 L505.5 691.4 L503.3 688.5 L500.4 685.9 L497.8 683 L498.4 679.9 L503.3 681.1 L507 679.9 L503.3 677.4 L500.1 677.5 L497.1 676.2 L495 673.9 L492.2 672.5 L488.3 675.2 L485.9 672.7 L482.7 671.5 L484.8 671.5 L484.4 668.3 L483.6 665.1 L487.3 663.9 L489.2 662.1 L491 660.2 L493.1 658.3 L495.9 657.7 L496.4 654.7 L498.4 652.3 L493.4 652.8 L491.9 655.1 L489.8 656.6 L487.3 657.7 L484.5 657.1 L482.4 655.3 L479.9 657.1 L477.4 659 L473.7 656.5 L473.2 659.5 L473.5 662.5 L473.7 665.6 L471.1 663.4 L467.9 662.2 L465.1 660.2 L461.8 659.5 L459.4 657.1 L456.4 655.8 L455.5 652.1 L455.3 648.4 L454 645.8 L454 642.9 L452.6 640.7 L450.3 639.3 L445.4 640.5 L442.6 640.2 L439.9 641 L437.1 641.2 L434.8 643.9 L431.9 642.9 L429.1 641.3 L429.4 638 L427.7 640.3 L426.9 642.9 L423.8 642.7 L420.8 641.7 L419.1 644.6 L418.9 647.9 L415.6 647.3 L412.5 648.3 L409.2 648.4 L406 648.4 L406 647.9 L402.8 647.8 L399.5 647.6 L396.4 649.1 L393.2 649.1 L390.5 649 L387.8 648.7 L385.3 649.9 L382.9 651.1 L380.4 652.1 L377.6 651.7 L378.4 650.3 L381.2 649.7 L383 647.1 L385.8 646.6 L389.4 645.2ZM506.7 699.3 L507.5 703.3 L507.7 705 L506.5 702.1ZM20.8 716.8 L23.4 717.3 L25.5 719.4 L28.2 719.6 L30.6 720.5 L34.4 720.9 L38 721.8 L36.3 724 L35.6 726.7 L32.1 727.9 L29.4 730.4 L26.8 728.6 L23.5 728.4 L20.8 726.7 L18.4 724.8 L15.9 723 L13.4 719.3 L16.9 717.6ZM356.2 642.9 L353.4 644.6 L353.8 647.9 L350.9 648.4 L348.9 650.3 L348.6 652.1 L351.3 651.6 L353.7 649.6 L356.2 647.9 L358.4 645.9 L361.2 645.4 L359.9 641.7ZM156.7 742.8 L158.5 745.4 L159.1 748.3 L159.5 751.3 L161.1 754.2 L160.9 757.5 L163.6 757.3 L166.3 758.3 L169 758.3 L171.7 758.1 L174.4 756.6 L177.1 757.8 L179.8 757.2 L182.5 758.9 L185.2 756.7 L187.9 757.1 L190.6 757 L193.3 758 L196 756.8 L198.7 757.2 L201.4 756.7 L204.1 757.3 L206.8 756.9 L209.5 757.5 L212.3 758 L215 757.9 L217.7 757.9 L220.4 757.6 L223.1 758.3 L225.8 757.7 L228.5 757.5 L226.8 755.2 L225.1 753 L222.8 751.3 L220.5 749.8 L218.1 748.6 L215.6 747.7 L213.5 745.8 L210.4 746 L208.3 744.1 L205.9 742.8 L202.7 743.6 L199.4 743.4 L196.1 742.8 L191.9 745.6 L188.7 744.1 L186.3 741.4 L182.6 741.4 L179.2 740 L177 737.6 L176.4 734.4 L173.4 733.8 L171.8 731.5 L169.8 729.7 L167.8 727.9 L166 725.7 L163.7 724.3 L161.8 722.4 L158.4 722.3 L156.9 719.9 L155.3 717.5 L152.6 715.1 L151.1 711.9 L151.9 714.7 L152.7 717.6 L153.9 720.3 L152 722.7 L149.7 724.5 L152.5 726.9 L153.9 730.2 L156.4 731.9 L158.1 734.4 L157.6 737.2 L158.3 740.2ZM144.7 750.5 L142 748.8 L139.7 746.7 L137.6 744.5 L135.6 742.1 L132.7 741.3 L130 740 L130.6 743.7 L130 747.4 L129.2 747.6 L126.7 743.9 L123.9 745.3 L121.8 747.6 L116.8 748.9 L116.5 751.6 L116 754.4 L114.4 756.7 L114.4 758.7 L117 758.6 L119.7 760.6 L122.3 758.4 L125 757.9 L127.6 757.8 L130.3 760.2 L132.9 759.4 L135.6 758.5 L138.2 759 L140.9 758.1 L143.6 758.7 L146.2 758.7 L148.9 758.7 L148.1 754.8 L146.4 751.3ZM798 590 L798.4 592.9 L799.1 595.7 L801 598 L800.7 601.2 L797.8 603 L797 606 L798 608.6 L799.4 611.2 L800 614 L799.4 616.7 L798.6 619.3 L798 622 L798.7 625 L800.6 627.4 L802 630 L801.6 633.4 L800.3 636.6 L800 640 L800.8 642.5 L800.8 645.2 L802.1 647.5 L803 650 L802 652.6 L801.2 655.2 L801 658 L803.4 659.2 L805.3 661.3 L808 662 L808 552 L805.9 553.9 L804 556 L804.9 559.3 L803.3 562.8 L805 566 L802.9 568 L801.3 570.4 L800 573 L799.9 576.2 L801.9 578.9 L802 582 L800.5 584.6 L799.1 587.2ZM788.8 688.5 L790.4 691.1 L790.7 694.2 L791.2 697.1 L791.1 700.7 L792.5 704 L789.5 705.9 L787.8 709 L786.5 712.5 L786.5 716.3 L785.3 718.8 L783.9 721.2 L782.8 723.7 L783.4 726.5 L782.4 729.2 L785.3 730.4 L785.8 727.5 L786.5 724.7 L787.1 721.9 L788.8 719.7 L790.2 717.3 L789.7 713.9 L791.2 710.7 L793.4 707.6 L796.1 705 L795.5 702.4 L794.6 699.9 L795.2 697.1 L795.3 694.4 L793.3 692.1 L793.9 689.2 L792.7 686.8 L790.9 684.3 L789.6 681.4 L787.8 678.9 L786.2 675.5 L783.3 673 L783.5 670.1 L786.2 668.1 L786.3 665.1 L788.5 662.1 L787.9 658.6 L788.3 655.3 L788.1 652.3 L786.3 650 L785.3 647.4 L782.4 647.9 L782.8 650.6 L782.4 653.6 L784.8 655.8 L784.8 659 L782.7 661.8 L782.8 665.1 L781.2 668.1 L780.3 671.3 L779.4 674.5 L781 676.8 L782.8 678.9 L783.9 681.6 L786.2 683.5 L787.8 685.8Z"/>
<path id="marsh" fill="#000" stroke="none" d="M85 745h1v3h-1zM84 746h1v1h-1zM87 755h3v1h-3zM83 750h3v1h-3zM90 753h1v1h-1zM89 751h2v2h-2zM73 736h1v3h-1zM81 744h1v3h-1zM68 736h1v1h-1zM91 751h2v2h-2zM67 737h2v1h-2zM84 748h1v2h-1zM101 757h3v2h-3zM65 731h2v2h-2zM67 733h3v1h-3zM89 753h1v2h-1zM71 731h1v3h-1zM74 732h3v3h-3zM104 754h3v1h-3zM66 734h3v3h-3zM72 727h2v2h-2zM71 738h3v1h-3zM67 731h2v2h-2zM92 748h3v1h-3zM89 756h2v2h-2zM94 757h1v3h-1zM87 750h3v3h-3zM94 752h2v2h-2zM67 730h2v2h-2zM82 753h1v3h-1zM85 746h2v2h-2zM86 750h2v3h-2zM74 739h2v1h-2zM91 752h1v1h-1zM80 745h2v1h-2zM99 753h3v1h-3zM71 741h2v1h-2zM86 748h3v3h-3zM74 731h1v3h-1zM68 730h3v3h-3zM67 733h2v2h-2zM84 749h1v1h-1zM75 737h3v3h-3zM98 756h1v1h-1zM74 739h1v2h-1zM46 708h1v1h-1zM14 708h1v2h-1zM10 704h2v1h-2zM32 707h2v1h-2zM20 702h2v2h-2zM30 710h1v2h-1zM10 702h2v2h-2zM49 722h2v2h-2zM30 701h2v1h-2zM15 704h2v2h-2zM39 705h2v1h-2zM45 717h1v2h-1zM44 717h1v1h-1zM20 707h1v1h-1zM42 703h1v1h-1zM32 708h2v1h-2zM48 712h1v1h-1zM11 703h1v2h-1zM40 710h1v1h-1zM21 700h2v1h-2zM43 705h1v1h-1zM44 710h2v2h-2zM35 704h2v2h-2zM14 700h2v1h-2zM8 703h2v1h-2zM10 705h2v2h-2zM23 706h2v2h-2zM8 707h2v1h-2zM22 702h2v2h-2zM37 709h1v2h-1zM40 705h1v2h-1zM22 706h1v2h-1zM41 703h1v1h-1zM8 706h2v1h-2zM41 704h2v2h-2zM190 725h3v2h-3zM196 720h1v2h-1zM207 698h3v2h-3zM220 700h1v1h-1zM197 731h3v1h-3zM214 702h3v2h-3zM199 718h2v1h-2zM214 687h3v2h-3zM206 674h2v1h-2zM208 680h2v2h-2zM219 683h1v3h-1zM202 708h2v3h-2zM189 719h3v2h-3zM217 704h2v2h-2zM199 723h2v3h-2zM219 673h3v1h-3zM212 704h3v1h-3zM219 697h2v1h-2zM216 689h1v1h-1zM219 689h1v1h-1zM199 708h3v3h-3zM204 703h2v1h-2zM205 696h2v3h-2zM219 694h3v3h-3zM218 678h3v1h-3zM195 705h1v3h-1zM220 673h2v3h-2zM215 674h2v3h-2zM197 722h2v1h-2zM224 674h2v1h-2zM201 706h2v3h-2zM215 693h3v1h-3zM215 684h3v1h-3zM192 710h2v3h-2zM200 705h2v2h-2zM217 706h1v2h-1zM212 699h2v1h-2zM189 711h1v1h-1zM218 691h2v3h-2zM190 715h2v2h-2zM197 722h1v3h-1zM208 682h2v2h-2zM190 721h2v3h-2zM193 710h3v1h-3zM209 681h3v3h-3zM208 670h3v1h-3zM218 677h2v3h-2zM195 729h2v3h-2zM207 706h3v2h-3zM191 719h2v3h-2zM199 720h2v1h-2zM197 714h3v2h-3zM217 679h2v2h-2zM201 702h1v2h-1zM198 730h3v3h-3zM207 704h2v2h-2zM224 690h1v2h-1zM217 689h3v1h-3zM194 726h1v3h-1zM200 705h3v1h-3zM193 719h3v1h-3zM224 675h1v1h-1zM216 669h1v1h-1zM203 699h3v2h-3zM189 715h1v1h-1zM189 721h2v1h-2zM192 727h3v1h-3zM192 726h2v2h-2zM214 706h3v3h-3zM197 724h2v2h-2zM215 677h3v2h-3zM222 676h3v1h-3zM195 717h3v3h-3zM219 704h1v3h-1zM223 680h1v2h-1zM189 714h2v1h-2zM203 704h3v1h-3zM207 697h3v1h-3zM216 670h1v1h-1zM223 672h1v3h-1zM207 709h1v1h-1zM210 684h2v3h-2zM219 684h2v3h-2zM193 708h2v2h-2zM222 680h1v3h-1zM203 698h2v1h-2zM209 705h3v1h-3zM211 672h2v1h-2zM217 702h3v3h-3zM190 715h3v2h-3zM223 678h2v3h-2zM216 684h2v1h-2zM208 684h2v1h-2zM210 671h2v3h-2zM212 672h2v3h-2zM221 694h1v1h-1zM204 702h3v3h-3zM207 697h1v3h-1zM211 704h3v2h-3zM206 707h3v3h-3zM186 718h2v1h-2zM198 721h3v3h-3zM190 709h1v1h-1zM207 677h3v3h-3zM195 718h3v2h-3zM196 717h2v1h-2zM211 707h3v2h-3zM213 672h1v3h-1zM194 711h1v2h-1zM196 716h1v1h-1zM225 682h1v2h-1zM213 684h1v3h-1zM215 706h3v1h-3zM224 676h1v2h-1zM221 688h3v2h-3zM223 673h1v2h-1zM196 724h1v3h-1zM204 710h2v1h-2zM211 696h2v1h-2zM195 725h2v2h-2zM204 669h3v1h-3zM219 686h1v1h-1zM197 717h3v2h-3zM220 679h3v3h-3zM205 707h2v2h-2zM196 719h3v2h-3zM206 676h1v1h-1zM197 726h3v3h-3zM201 717h2v2h-2zM215 690h2v1h-2zM208 697h3v1h-3zM219 676h2v3h-2zM213 684h1v1h-1zM194 714h2v3h-2zM215 676h1v1h-1zM196 718h1v2h-1zM207 701h2v1h-2zM197 723h3v2h-3zM193 718h2v1h-2zM214 705h1v2h-1zM225 685h2v2h-2zM189 711h2v2h-2zM223 689h1v1h-1zM211 687h2v1h-2zM217 689h3v2h-3zM201 723h3v1h-3zM221 696h3v1h-3zM198 718h3v3h-3zM211 699h2v2h-2zM210 686h1v3h-1zM209 690h2v1h-2zM218 704h1v1h-1zM224 672h3v3h-3zM215 697h3v1h-3zM188 719h3v2h-3zM203 700h2v3h-2zM193 709h3v1h-3zM206 670h3v2h-3zM203 709h3v1h-3zM225 678h2v2h-2zM197 719h3v2h-3zM202 701h3v1h-3zM218 702h1v1h-1zM218 706h1v1h-1zM219 680h2v1h-2zM202 710h1v3h-1zM192 711h3v1h-3zM200 724h3v2h-3zM213 682h1v1h-1zM217 680h3v2h-3zM150 724h2v2h-2zM167 728h1v1h-1zM158 730h1v1h-1zM168 731h3v2h-3zM153 716h3v3h-3zM162 734h1v2h-1zM168 728h2v2h-2zM166 741h2v2h-2zM160 738h2v2h-2zM162 727h3v1h-3zM160 728h3v3h-3zM163 728h2v3h-2zM159 742h3v1h-3zM174 741h3v1h-3zM163 730h3v1h-3zM164 738h2v2h-2zM174 735h1v3h-1zM163 752h2v2h-2zM154 728h2v1h-2zM151 722h3v1h-3zM164 725h2v1h-2zM156 730h1v1h-1zM152 718h1v3h-1zM165 730h3v3h-3zM173 745h3v2h-3zM158 755h3v1h-3zM161 725h1v2h-1zM165 741h2v2h-2zM161 741h2v2h-2zM153 726h3v1h-3zM154 729h2v2h-2zM173 742h3v2h-3zM165 745h2v2h-2zM170 750h1v3h-1zM155 717h2v1h-2zM167 748h2v3h-2zM158 742h1v2h-1zM159 726h1v2h-1zM168 737h2v3h-2zM170 740h3v1h-3zM171 730h3v3h-3zM162 746h2v2h-2zM169 748h2v2h-2zM160 749h3v1h-3zM170 729h3v3h-3zM166 753h1v1h-1zM161 736h1v1h-1zM160 742h2v2h-2zM162 748h3v2h-3zM155 727h1v3h-1zM160 738h3v3h-3zM161 738h2v2h-2zM170 729h1v3h-1zM164 740h2v3h-2zM157 722h1v2h-1zM165 729h1v1h-1zM169 734h1v1h-1zM164 732h2v2h-2zM156 720h3v3h-3zM172 738h2v3h-2zM167 749h2v1h-2zM158 723h1v2h-1zM158 724h3v1h-3zM167 736h3v1h-3zM165 741h3v3h-3zM163 728h3v1h-3zM166 727h1v1h-1zM177 741h1v2h-1zM165 728h2v1h-2zM153 720h3v2h-3zM156 724h1v3h-1zM167 743h3v3h-3zM158 725h1v2h-1zM170 735h3v3h-3zM161 727h2v2h-2zM157 738h3v3h-3zM159 742h2v3h-2zM154 718h2v2h-2zM163 747h2v1h-2zM155 722h2v3h-2zM159 744h3v1h-3zM173 736h1v3h-1zM156 730h1v2h-1zM176 737h3v1h-3zM163 749h1v1h-1zM164 729h1v2h-1zM159 754h1v3h-1zM175 742h2v2h-2zM159 738h2v3h-2zM165 749h2v3h-2zM146 757h3v3h-3zM133 756h3v3h-3zM131 748h3v2h-3zM136 757h2v2h-2zM130 742h2v3h-2zM130 753h2v3h-2zM130 742h1v2h-1zM130 743h2v3h-2zM141 748h1v2h-1zM130 745h1v2h-1zM134 750h2v3h-2zM138 750h2v1h-2zM136 755h3v3h-3zM137 749h2v2h-2zM135 755h1v3h-1zM146 754h3v1h-3zM138 749h2v1h-2zM139 747h3v2h-3zM139 748h3v3h-3zM140 751h2v1h-2zM131 748h2v1h-2zM141 756h2v3h-2zM144 753h2v1h-2zM137 749h1v2h-1zM135 751h3v2h-3zM135 751h1v3h-1zM134 752h2v2h-2zM134 756h1v3h-1zM141 748h3v3h-3zM146 755h3v1h-3zM131 757h2v2h-2zM134 750h2v3h-2zM145 753h1v3h-1zM134 748h2v1h-2zM136 746h1v1h-1zM138 757h1v3h-1zM132 747h2v2h-2zM134 753h1v2h-1zM130 749h3v3h-3zM135 748h1v2h-1zM131 743h2v1h-2zM130 755h3v1h-3zM138 752h1v2h-1zM133 750h1v2h-1zM130 746h3v3h-3zM146 753h1v1h-1zM137 748h2v3h-2zM139 751h3v2h-3zM140 747h1v3h-1zM131 743h1v3h-1zM208 693h2v3h-2zM211 703h1v3h-1zM207 672h1v2h-1zM209 680h1v3h-1zM207 681h3v3h-3zM214 675h2v2h-2zM213 697h3v3h-3zM214 673h3v1h-3zM210 693h2v1h-2zM213 701h3v2h-3zM218 678h1v3h-1zM215 694h2v3h-2zM208 682h1v3h-1zM216 687h2v1h-2zM211 703h3v2h-3zM214 685h2v1h-2zM214 683h3v1h-3zM214 682h1v2h-1zM216 697h3v3h-3zM213 698h3v1h-3zM211 700h3v3h-3zM210 682h3v1h-3zM212 699h1v2h-1zM212 687h1v3h-1zM220 688h2v3h-2zM207 679h3v2h-3zM207 710h3v2h-3zM220 694h2v2h-2zM219 693h3v1h-3zM221 683h3v3h-3zM224 681h3v2h-3zM216 690h1v3h-1zM221 690h2v2h-2zM206 689h3v2h-3zM212 701h1v1h-1zM211 699h3v2h-3zM222 685h2v1h-2zM213 692h1v3h-1zM213 697h1v2h-1zM218 678h1v1h-1zM206 678h1v2h-1zM207 694h3v2h-3zM222 678h3v2h-3zM219 684h1v2h-1zM211 691h2v1h-2zM216 695h2v1h-2zM209 677h3v3h-3zM221 689h3v3h-3zM212 702h2v1h-2zM215 672h2v3h-2zM206 683h3v2h-3zM221 690h3v2h-3zM207 674h1v3h-1zM218 693h1v3h-1zM209 698h1v2h-1zM221 679h1v2h-1zM224 682h1v1h-1zM213 687h1v2h-1zM209 676h1v2h-1zM219 677h3v3h-3zM141 749h3v3h-3zM122 755h2v3h-2zM123 749h3v3h-3zM124 748h3v1h-3zM135 747h1v2h-1zM144 756h3v2h-3zM138 754h2v1h-2zM128 751h3v3h-3zM145 756h1v1h-1zM133 750h2v1h-2zM144 750h1v3h-1zM119 748h3v1h-3zM145 752h3v3h-3zM116 754h1v2h-1zM140 746h2v1h-2zM146 753h2v3h-2zM146 752h1v1h-1zM139 757h3v1h-3zM122 747h1v3h-1zM120 748h3v3h-3zM125 746h3v1h-3zM144 753h2v3h-2zM136 749h3v1h-3zM122 747h1v3h-1zM138 748h3v3h-3zM118 752h3v3h-3zM138 757h2v2h-2zM134 744h2v1h-2zM118 748h3v2h-3zM133 748h3v3h-3zM131 750h3v3h-3zM135 749h2v3h-2zM127 746h2v3h-2zM127 745h2v3h-2zM135 757h1v3h-1zM127 744h1v1h-1zM143 752h1v3h-1zM121 752h1v1h-1zM120 751h2v2h-2zM119 751h3v1h-3zM793 604h1v1h-1zM797 595h3v2h-3zM789 640h3v1h-3zM804 556h3v3h-3zM791 634h1v2h-1zM798 647h3v3h-3zM800 647h3v3h-3zM805 644h3v2h-3zM791 606h1v2h-1zM801 624h4v3h-4zM790 657h4v2h-4zM791 625h1v3h-1zM789 607h2v3h-2zM792 582h1v1h-1zM794 653h4v2h-4zM800 646h4v3h-4zM792 595h3v4h-3zM796 620h2v2h-2zM798 569h1v4h-1zM794 572h2v3h-2zM805 558h1v1h-1zM795 644h1v1h-1zM796 566h3v1h-3zM793 623h3v4h-3zM797 616h1v3h-1zM791 637h4v4h-4zM790 600h3v4h-3zM798 608h3v1h-3zM796 591h3v1h-3zM805 639h3v1h-3zM795 607h3v4h-3zM805 627h4v4h-4zM803 560h1v1h-1zM800 610h2v4h-2zM788 598h2v2h-2zM794 584h3v4h-3zM803 575h1v1h-1zM803 605h2v2h-2zM788 649h1v2h-1zM790 601h1v3h-1zM804 588h2v4h-2zM801 564h1v3h-1zM795 651h2v1h-2zM804 571h4v3h-4zM792 597h1v4h-1zM804 656h2v3h-2zM804 659h2v2h-2zM802 608h3v2h-3zM803 617h3v2h-3zM792 598h2v4h-2zM794 645h4v3h-4zM789 560h2v2h-2zM797 619h4v4h-4zM804 638h1v3h-1zM793 590h3v2h-3zM802 594h1v3h-1zM793 614h2v3h-2zM797 621h2v1h-2zM796 637h4v2h-4zM799 655h3v4h-3zM802 585h4v1h-4zM801 606h1v1h-1zM794 561h1v2h-1zM795 617h3v3h-3zM793 653h1v2h-1zM792 621h2v1h-2zM796 571h2v3h-2zM805 615h3v1h-3zM801 623h4v2h-4zM801 625h2v4h-2zM802 633h4v1h-4zM802 634h2v3h-2zM798 619h1v3h-1zM796 562h2v1h-2zM792 623h2v4h-2zM792 623h4v4h-4zM795 612h2v4h-2zM802 593h2v4h-2zM802 659h2v4h-2zM804 574h1v3h-1zM804 652h4v2h-4zM804 561h3v3h-3zM794 602h4v3h-4zM801 607h3v2h-3zM797 654h1v4h-1zM799 576h3v1h-3zM788 638h1v4h-1zM792 572h3v1h-3zM794 636h2v1h-2zM789 593h4v1h-4zM800 585h4v4h-4zM793 603h3v1h-3zM804 618h1v2h-1zM803 588h2v1h-2zM795 651h1v3h-1zM790 650h1v1h-1zM791 652h4v4h-4zM804 617h4v1h-4zM794 596h3v4h-3zM796 595h3v3h-3zM792 606h4v1h-4zM791 584h1v2h-1zM793 600h2v1h-2zM794 596h4v1h-4zM792 634h4v2h-4zM799 602h1v1h-1zM797 566h1v2h-1zM803 581h4v1h-4zM800 585h4v1h-4zM792 650h4v3h-4zM805 597h4v1h-4zM797 629h1v1h-1zM794 579h2v1h-2zM797 593h4v1h-4zM802 565h1v2h-1zM792 597h4v4h-4zM803 610h2v2h-2zM795 622h3v3h-3zM800 644h1v2h-1zM796 600h3v4h-3z"/>
<path id="borders" stroke="#000" d="M6 105.3 L155 105.3 L156.2 113.1 L161.2 113.6 L161.2 121.8 L155 127.9 L147.6 135.3 L142.7 142.7 L137.8 149.3 L188.3 149.3M201.8 6C201.8 6.7 201.1 8.7 201.4 10.1C201.8 11.4 202.9 12.5 203.9 14.1C204.8 15.7 206.5 17.7 207.3 19.6C208.1 21.4 208.5 23.4 208.6 25C208.7 26.6 208.7 28.1 207.9 29C207.1 29.9 205 29.6 203.9 30.4C202.8 31.2 201.7 32.8 201.4 33.8C201.2 34.8 201.8 35.8 202.5 36.5C203.2 37.2 204.8 36.8 205.5 37.8C206.2 38.9 206 41.1 206.6 42.6C207.2 44.1 208.4 45.3 209.3 46.7C210.2 48 211.4 49.4 212 50.7C212.6 52.1 212.9 53.7 213.1 54.8C213.3 55.9 212.9 56.9 213.4 57.2C213.9 57.5 215.2 56.7 216.1 56.4C217 56.1 217.9 55.3 218.8 55.5C219.7 55.6 221.2 56.7 221.5 57.5C221.8 58.3 221.4 59.6 220.8 60.2C220.2 60.8 218.9 61.1 218.1 60.9C217.3 60.7 216.3 59.6 216.1 58.8C215.8 58.1 216.1 57 216.7 56.4C217.4 55.8 218.9 55.1 220.1 55.1C221.4 55.1 223.3 56 224.2 56.4C225.1 56.9 225.6 57.5 225.8 57.8M305.5 6C306.2 6.9 309 9.5 309.6 11.4C310.1 13.3 310.5 16.3 308.9 17.5C307.3 18.8 302.9 18.4 300.1 18.9C297.3 19.3 294.2 19.6 292 20.2C289.7 20.9 288.3 22.5 286.5 22.9C284.7 23.4 282.5 22.4 281.1 22.9C279.8 23.5 279 25 278.4 26.3C277.8 27.7 277.9 29.6 277.7 31.1C277.5 32.5 276.7 33.9 277 35.1C277.4 36.4 278.9 37.3 279.8 38.5C280.7 39.8 281.8 41.2 282.5 42.6C283.1 43.9 283.7 45.1 283.6 46.7C283.4 48.2 282.6 50.8 281.8 52.1C280.9 53.4 279.6 54.2 278.4 54.5C277.2 54.8 275.7 54.4 274.3 53.7C273 53 271.9 51 270.3 50C268.7 49.1 266.9 48.7 264.9 48C262.8 47.3 260.3 46.9 258.1 46C255.8 45.1 253.2 43.6 251.3 42.6C249.4 41.6 248.4 40.4 246.6 39.9C244.8 39.3 242.2 38.9 240.5 39.2C238.8 39.5 237.6 40.7 236.4 41.9C235.2 43.1 234.3 45.1 233 46.7C231.8 48.2 230.1 49.9 228.9 51.4C227.8 52.9 226.8 54.1 226.2 55.5C225.7 56.8 225.2 58.5 225.6 59.5C225.9 60.5 227.2 61.3 228.3 61.6C229.3 61.8 230.9 60.4 231.7 60.9C232.4 61.3 232.6 62.9 232.6 64.3C232.6 65.6 232.1 67.7 231.7 69C231.2 70.4 230.4 71.4 229.6 72.4C228.8 73.4 227.2 74.1 226.9 75.1C226.6 76.1 226.9 77.7 227.6 78.5C228.3 79.3 230.3 79.3 231 79.8C231.7 80.4 232.1 81.4 231.7 81.9C231.2 82.3 229.2 82.1 228.3 82.6C227.3 83 226.2 83.8 225.8 84.6C225.5 85.4 225.8 86.4 226.2 87.3C226.7 88.2 228.3 89.1 228.5 90C228.8 90.9 228.1 91.9 227.6 92.7C227.1 93.5 226 93.9 225.6 94.8C225.1 95.7 225.6 97.4 224.9 98.1C224.2 98.9 222.5 99.7 221.5 99.5C220.5 99.3 219.6 97.8 218.8 96.8C218 95.8 217.5 94.1 216.7 93.4C216 92.7 214.8 92.4 214 92.7C213.2 93.1 212.6 94.1 212 95.4C211.4 96.8 211.1 99.4 210.7 100.9C210.2 102.3 210 103.1 209.3 104.2C208.6 105.4 207.5 107.2 206.6 107.6C205.7 108.1 204.4 107.4 203.9 106.9C203.3 106.5 203.1 105.6 203.2 104.9C203.3 104.2 204.2 103.8 204.6 102.9C204.9 102 205.7 100.4 205.2 99.5C204.8 98.6 203 97.7 201.8 97.5C200.7 97.2 199.2 97.6 198.5 98.1C197.7 98.7 197.4 99.8 197.5 100.9C197.6 101.9 198.4 103.4 199.1 104.2C199.9 105 201.6 104.8 201.8 105.6C202.1 106.4 200.8 108 200.5 109C200.2 110 200.1 111.2 200.1 111.7M209.3 104.2 L264.9 104.6 L264.9 105.6 L311.6 105.6 L312.3 100.9 L310.9 94.1 L309.6 88.7 L317.7 88.4 L320 88.7M321.8 91 L406 91.5M406 91 L479.9 92.9 L509.4 93.4 L606 96.6M606 96.6 L635.6 96.6 L766.1 95.9 L787 94.2 L806 98.4M635.6 96.6 L642.9 91 L655.3 87.3 L675 82.8 L679.9 77.4 L684.8 73 L695.9 70 L698.4 61.4 L707 55.3 L708.2 49.8 L719.3 44.2 L734.1 36.8 L743.9 30.6 L753.8 20.8 L762.4 13.4 L764.9 14.6 L766.1 12.2 L761.2 10.9 L753.8 10.9 L748.9 6M762.4 13.4 L766.1 20.8 L768.6 26.9 L776 33.1 L783.3 40.5 L790.7 41.7 L800.6 36.8 L806 31.9M787 94.2 L783.3 100.8 L783.8 107 L780.9 114.4 L782.1 119.3 L776 118.1 L768.6 123 L763.6 131.6 L758.7 137.8 L752.6 139 L746.4 135.3 L736.5 137.8 L729.2 142.7 L724.2 150.1 L718.1 152.6 L714.4 148.9 L715.6 143.9 L710.7 145.2 L704.5 148.9 L700.8 153.8 L694.7 155 L693.4 161.2 L689.7 167.3 L679.9 168.6 L672.5 173.5 L665.1 177.2 L657.7 182.1 L650.3 188.3 L640.5 187 L630.6 188.3 L620.8 192 L613.4 198.1 L610.9 206M610.9 206 L609.7 207.2 L606 210.9M606 215.9 L595.7 214.6 L590.7 218.3 L589.5 228.2 L588.3 238.8M155.7 205.8C155.9 206 156.4 206.6 156.8 207.2C157.2 207.9 158.3 208.9 158.4 209.7C158.5 210.6 158 211.4 157.5 212.2C157 213 155.7 213.8 155.4 214.3C155.1 214.9 155.2 215.1 155.6 215.3C156 215.6 157 215.5 157.8 215.8C158.5 216.1 159.8 216.4 160.1 217C160.4 217.7 160 219 159.6 219.7C159.3 220.3 157.8 220.3 158 220.7C158.1 221.2 159.8 221.4 160.4 222.1C161.1 222.9 161.9 224.5 161.7 225.1C161.5 225.7 159.8 225.6 159.3 225.8C158.7 225.9 158.8 225.6 158.3 226.2C157.8 226.9 157.1 229.2 156.3 229.6C155.5 230 154.4 228.9 153.5 228.7C152.6 228.4 151.6 227.8 151.2 228.1C150.8 228.4 151.3 229.6 151.1 230.4C150.9 231.2 150.7 232.5 149.9 232.9C149.2 233.4 147.5 232.9 146.8 233C146 233.1 145.7 233 145.7 233.7C145.7 234.4 147 236.5 146.9 237.3C146.7 238.1 145.6 237.9 144.8 238.4C144.1 239 142.5 240.3 142.4 240.8C142.4 241.2 143.7 240.8 144.7 241.2C145.6 241.5 147.8 242 148 242.8C148.2 243.6 146.5 245.5 145.7 245.9C144.9 246.3 143.4 244.8 143.3 245.3C143.2 245.7 144.9 247.3 145.1 248.4C145.2 249.5 145.1 251.7 144.4 251.9C143.6 252.2 141.3 250 140.6 249.8C139.8 249.6 140.3 249.8 139.9 250.7C139.5 251.5 139 254.6 138.1 254.9C137.1 255.3 134.6 253.7 134.2 252.8C133.7 251.9 135.5 250.2 135.5 249.7C135.5 249.2 134.6 249.9 134.3 249.9C134 249.9 134 249.3 133.6 249.7C133.1 250 132.6 251.4 131.7 251.8C130.8 252.2 128.9 251.8 128.3 252C127.7 252.2 128 252.4 128.2 253C128.4 253.7 129.5 255 129.6 255.9C129.6 256.7 129.2 257.6 128.6 258.3C128 259 126.1 259.7 125.8 260.2C125.4 260.7 125.7 261 126.4 261.1C127.1 261.2 129.2 260.1 130.1 260.9C131 261.7 132 265 131.7 265.7C131.4 266.5 129.1 265.5 128.1 265.3C127.2 265.1 126.1 264.2 126 264.4C125.9 264.7 127.2 265.9 127.5 267C127.7 268.1 128.1 270.2 127.6 271C127 271.9 125.4 271.8 124.4 272.2C123.3 272.5 121.5 273 121.2 273.3C121 273.5 122 273.4 123 273.9C123.9 274.3 126.2 275.1 126.7 275.9C127.1 276.8 126.6 278.1 125.9 278.8C125.2 279.5 123.2 280.1 122.4 280.4C121.6 280.7 121 280.5 121.3 280.8C121.6 281.1 123.4 281.6 124.3 282.3C125.2 283 126.4 284.2 126.4 285C126.5 285.8 125.4 286.7 124.5 287.3C123.6 287.9 121.6 288.5 121.2 288.5C120.8 288.4 121.9 286.8 122.1 287.1C122.3 287.4 122.6 289.2 122.5 290.3C122.4 291.5 122.3 293.4 121.7 294C121 294.5 119.5 294.3 118.5 293.8C117.4 293.3 116.2 291 115.3 290.8C114.3 290.5 112.6 291.5 112.8 292.1C113 292.7 115.5 293.5 116.4 294.4C117.2 295.3 118.5 296.6 118.1 297.5C117.7 298.4 115.1 299.9 114 299.8C112.8 299.8 111.7 297.6 111.1 297.1C110.6 296.6 110.5 296.2 110.6 296.8C110.6 297.4 111.4 299.7 111.2 300.9C111.1 302.1 110.6 303.7 109.8 304C109 304.3 107.5 303.1 106.5 302.8C105.4 302.4 103.7 301.6 103.5 301.9C103.3 302.3 105.2 303.5 105.3 304.8C105.4 306.1 104.8 309.2 104 309.8C103.3 310.3 101.8 308.8 101 308.1C100.1 307.4 99.6 305.6 99.2 305.5C98.7 305.4 97.6 306.7 98 307.4C98.4 308.2 101.4 308.8 101.5 309.8C101.6 310.8 99.3 312.7 98.6 313.4C97.9 314 96.9 313.4 97.1 313.8C97.3 314.1 99.1 314.8 99.8 315.6C100.4 316.3 101.2 317.6 101 318.4C100.9 319.3 99.4 320.2 98.7 320.5C98.1 320.9 97.5 320.1 97.2 320.4C97 320.8 97.3 321.7 97.2 322.6C97.1 323.5 97.2 325.3 96.5 325.8C95.8 326.3 94 325.8 93.1 325.7C92.2 325.5 91.3 324.3 91.1 324.8C90.9 325.3 92 327.5 91.8 328.5C91.6 329.5 90.6 330.6 89.7 331C88.9 331.5 87.3 331.1 86.6 331.4C85.9 331.7 85.4 332.4 85.6 332.7C85.9 332.9 87.2 332.7 88.1 332.9C89 333.1 90.7 333.1 91.2 333.9C91.6 334.7 91.4 336.9 90.9 337.6C90.3 338.3 88.5 337.9 87.8 338.1C87.2 338.3 87 338.4 87 338.8C87.1 339.3 87.8 340.2 88.2 340.6C88.5 341.1 88.8 340.8 88.9 341.5C89 342.3 88.8 344.2 88.6 345.1C88.5 346 87.5 346.6 88 347.1C88.5 347.5 91.4 347.6 91.6 347.9C91.8 348.3 90 349.4 89.2 349.4C88.5 349.3 87.6 348.4 87 347.8C86.4 347.2 86.1 346 85.6 345.9C85.2 345.8 84.9 346.8 84.6 346.9C84.2 347.1 83.6 346.5 83.5 346.8C83.5 347.2 84.4 348.3 84.4 349C84.3 349.8 83.4 350.7 83.1 351.3C82.9 352 82.5 352.3 82.8 352.7C83.2 353.1 85.3 353.2 85.4 353.7C85.5 354.3 84.1 355.6 83.4 355.9C82.6 356.1 81.5 355.7 80.7 355.2C79.9 354.8 79.4 353.3 78.6 353.1C77.9 352.9 76.4 353.5 76.2 354C75.9 354.5 77 355.5 77.3 356.4C77.5 357.2 77.8 358.5 77.7 359.1C77.5 359.7 76.8 359.3 76.3 359.9C75.8 360.5 75.1 362.1 74.9 362.7C74.6 363.4 74.5 363.6 74.9 363.8C75.4 364 76.8 363.2 77.7 363.8C78.6 364.4 80.4 366.6 80.3 367.4C80.2 368.2 78.1 368.3 77.1 368.4C76.2 368.6 75.1 368 74.6 368.4C74 368.7 73.5 370.2 73.9 370.8C74.2 371.4 76.2 371.4 76.9 372C77.6 372.6 78.1 373.6 77.9 374.6C77.8 375.5 75.9 376.6 75.9 377.6C75.9 378.6 77.5 380.5 78 380.6C78.4 380.6 78.2 378.8 78.7 378C79.1 377.1 79.7 375.9 80.4 375.5C81.2 375.2 82.6 375.5 83.2 375.7C83.7 375.9 83.7 376.4 83.7 376.7C83.8 377.1 83.1 377.6 83.4 377.9C83.6 378.2 84.6 378.1 85.3 378.8C85.9 379.4 87.3 381.1 87.3 381.8C87.3 382.5 86.1 382.9 85.4 383.1C84.7 383.4 83.8 383.3 83.1 383.3C82.4 383.4 81.7 383.1 81.3 383.6C80.8 384 80.2 385.3 80.4 385.8C80.6 386.4 81.9 386.3 82.5 386.7C83.1 387.1 83.9 387.6 84.1 388.3C84.4 389 84.3 390 84.2 390.7C84.2 391.3 83.9 391.9 83.9 392.4C83.9 392.9 83.9 393.3 84.2 393.7C84.5 394.1 85.1 394.2 85.6 394.9C86.2 395.5 87.3 396.7 87.3 397.5C87.3 398.2 86.3 398.8 85.7 399.2C85.1 399.6 84.1 399.6 83.5 399.9C82.9 400.2 82.4 400.3 82.3 400.8C82.2 401.3 82.8 402 82.7 402.8C82.6 403.5 82.3 404.8 81.7 405.3C81.1 405.9 79.9 405.8 79.2 406C78.5 406.1 77.7 406 77.4 406M200.6 109C200.7 109.9 201.4 112.6 201.3 114.2C201.2 115.8 200.8 117.8 199.8 118.7C198.8 119.5 196.3 118.8 195.4 119.4C194.5 120 193.9 121.5 194.7 122.4C195.4 123.2 199.2 123.8 199.8 124.6C200.5 125.3 199.6 126.5 198.4 126.8C197.1 127 194 125.8 192.4 126C190.8 126.3 188.9 127.3 188.7 128.3C188.6 129.2 190.5 130.7 191.7 132C192.9 133.2 195.5 134.5 196.1 135.7C196.8 136.8 196.3 137.8 195.4 138.6C194.5 139.5 192.1 139.8 191 140.8C189.9 141.8 189.4 143.2 188.7 144.5C188.1 145.9 187.5 147.7 187.3 149C187 150.2 186.7 151.1 187.3 151.9C187.9 152.8 190.1 153.3 191 154.1C191.8 155 192.8 156.5 192.4 157.1C192.1 157.7 190 157.6 188.7 157.8C187.5 158.1 185.9 158.1 185.1 158.6C184.2 159.1 183.2 160.2 183.6 160.8C183.9 161.4 186.4 161.7 187.3 162.3C188.1 162.9 189.1 163.9 188.7 164.5C188.4 165.1 186.4 165.3 185.1 166C183.7 166.6 182 167.3 180.6 168.2C179.3 169 178.4 170.6 176.9 171.1C175.4 171.6 173 170.6 171.7 171.1C170.5 171.6 169.7 173 169.5 174.1C169.4 175.2 170 176.9 171 177.8C172 178.7 174.6 178.7 175.4 179.3C176.3 179.9 176.7 180.7 176.2 181.5C175.7 182.2 173.6 182.7 172.5 183.7C171.4 184.7 169.7 186 169.5 187.4C169.4 188.8 172 191.5 171.7 191.8C171.5 192.2 169.3 190 168 189.6C166.8 189.2 165.3 189 164.4 189.6C163.4 190.2 162.3 191.8 162.1 193.3C162 194.8 163.6 196.9 163.6 198.5C163.6 200.1 162.8 202.6 162.1 202.9C161.5 203.3 160.4 201.7 159.9 200.7C159.4 199.7 159.9 197.6 159.2 197C158.4 196.4 156.5 196.4 155.5 197C154.4 197.6 152.9 199.5 152.8 200.7C152.7 201.9 153.6 203.7 154.7 204.4C155.9 205.1 159.4 204.5 159.9 205.1C160.4 205.8 158.6 207.1 157.7 208.1C156.8 209.1 155.4 209.9 154.7 211.1C154.1 212.2 154.2 214.1 154 215C153.8 216 153.8 216.3 153.7 216.5M143.9 238 L206 238M206 238 L299.6 238 L299.6 237 L335.3 237 L336.5 238 L406 238M406 238 L445.4 238.5 L471.3 238 L606 239.3M606 239.3 L678.7 238M299.6 238 L302.1 242.9 L307 246.6 L306.5 255.3 L303.3 284.8 L300.8 309.4 L298.4 334.1 L295.9 358.7 L293.4 383.3 L291 406M291 406 L288.5 430.6 L284.8 462.7 L281.1 492.2 L279.4 514.4 L279.9 534.1 L281.1 558.7 L282.4 583.3 L283.6 606M283.6 606 L284.3 620.8 L284.8 638 L285.3 647.9M492.2 239.3 L495.9 255.3 L499.6 277.4 L504.5 304.5 L509.4 334.1 L514.4 363.6 L518.1 388.3 L520.5 406M520.5 406 L523 420.8 L526.7 433.1 L530.4 447.9 L536.5 457.7 L540.2 467.6 L537.8 476.2 L545.2 479.9 L543.9 484.8 L535.3 488.5 L532.8 497.1 L533.6 504.5 L529.2 514.4 L530.4 524.2 L532.8 536.5 L534.1 551.3 L531.6 563.6 L529.2 576 L532.8 583.3 L536.5 594.4 L539 600.6 L540.2 606M678.7 238 L689.7 233.1 L704.5 230.6 L714.4 225.7 L729.2 222 L732.8 219.5 L734.1 222 L743.9 220.3 L766.1 221.3 L806 223.2M678.7 238 L676.2 244.2 L668.8 249.1 L663.9 255.3 L660.2 263.9 L665.1 268.8 L672.5 275 L679.9 281.1 L686 284.3 L693.4 283.6 L697.1 288.5 L700.8 297.1 L704.5 303.3 L707 311.9 L714.4 321.8 L719.3 330.4 L729.2 337.8 L737.8 345.2 L743.9 353.8 L750.1 361.2 L757.5 366.1 L763.6 373.5 L767.3 378.4 L766.1 385.8 L771 389.5 L774.7 396.9 L780.9 403 L783.3 406M783.3 406 L788.3 409.7 L794.4 413.4 L798.1 419.5 L800.6 426.9 L803 433.1 L804.3 440.5 L806 442.9M6 415.4 L79.9 415.4M76.3 407.3C76.5 407.3 77 407.4 77.7 407.4C78.4 407.4 79.7 407.1 80.5 407.3C81.3 407.6 82.3 408.2 82.5 408.8C82.6 409.4 81.8 410.6 81.4 411.1C81 411.6 80.3 411.3 80.3 411.8C80.3 412.3 81.1 413 81.2 413.9C81.4 414.8 81.7 416.5 81.1 417C80.5 417.6 78.4 417.1 77.7 417.3C76.9 417.4 76.6 417.6 76.6 418C76.5 418.3 77.1 418.6 77.4 419.4C77.7 420.1 78.4 421.4 78.4 422.4C78.3 423.4 77.1 424.7 77.2 425.3C77.3 425.8 78.6 426.2 79.1 425.8C79.7 425.4 79.8 423.2 80.6 422.9C81.5 422.5 83.6 423.9 84.1 423.7C84.5 423.5 83.1 421.9 83.3 421.8C83.5 421.7 84.8 422.6 85.3 423.3C85.8 423.9 86.3 424.8 86.1 425.6C86 426.3 84.9 427.1 84.4 427.7C83.9 428.2 82.9 428.3 83.1 428.7C83.3 429.2 85.4 429.8 85.7 430.6C86 431.4 85.7 433.1 85.1 433.6C84.4 434 82.5 433.5 81.6 433.4C80.7 433.3 79.9 432.6 79.7 432.8C79.4 433.1 79.6 434.1 80.1 434.8C80.6 435.5 82.8 436.2 82.8 437.1C82.8 438 80.9 439.4 80.2 440.1C79.5 440.8 78.2 441 78.4 441.3C78.5 441.6 80 441.7 81 442C81.9 442.3 83.8 442.4 84.2 443.2C84.6 443.9 83.8 445.5 83.3 446.5C82.9 447.4 81.4 448.4 81.4 448.7C81.4 449 82.2 448.5 83.2 448.5C84.1 448.5 86.4 448.5 86.9 448.7C87.4 448.9 85.7 449.4 86 450C86.3 450.6 88.4 452 88.9 452.3C89.5 452.5 88.8 452 89.5 451.4C90.1 450.8 92.4 448.7 92.8 448.7C93.1 448.8 92.4 451 91.8 451.7C91.2 452.5 89.5 452.9 89.4 453.4C89.2 453.8 90.9 453.7 91.1 454.4C91.3 455 91.1 456.8 90.6 457.5C90.1 458.2 89.1 458.7 88.2 458.6C87.3 458.6 86.1 457.1 85.2 457.2C84.3 457.2 82.4 458.5 82.7 458.9C82.9 459.4 85.7 459.3 86.6 460C87.5 460.7 88 461.9 88 463.1C87.9 464.2 86.6 466 86.4 466.8C86.2 467.6 86.3 468.2 86.8 468C87.3 467.7 88.2 465.8 89.2 465.2C90.2 464.6 92.3 463.6 92.8 464.2C93.3 464.8 92.7 467.7 92.5 468.6C92.2 469.5 90.8 469.3 91.4 469.6C92 470 95.4 470.5 96 470.8C96.5 471 94.3 470.7 94.6 471.3C94.8 471.9 96.8 473.5 97.5 474.2C98.1 475 98.2 476.2 98.5 475.7C98.9 475.3 98.8 471.7 99.3 471.5C99.8 471.3 101.4 473.5 101.5 474.4C101.7 475.3 101.1 476.6 100.4 476.9C99.6 477.2 97.8 476.6 97 476.3C96.3 476 96 475 95.9 475.2C95.7 475.5 96.2 476.8 96.1 477.9C96 479 95.8 481.2 95.3 481.9C94.7 482.6 94 482.2 92.9 481.9C91.8 481.6 89.4 480.2 88.6 479.9C87.8 479.6 87.9 479.4 88.1 480C88.3 480.6 90 482.1 89.9 483.5C89.7 484.8 88 488 87 488.1C86.1 488.3 84.8 485.4 84.2 484.2C83.6 483.1 83.7 481.3 83.3 481.2C83 481.2 82 482.9 82 483.9C82.1 485 84 486.8 83.5 487.7C83 488.6 80 488.6 79.3 489.6C78.6 490.6 79 493.5 79.2 493.7C79.5 493.9 80.1 491.5 80.9 490.7C81.7 489.9 83.3 488.5 84.2 488.8C85.1 489.1 86.1 491.7 86.2 492.5C86.3 493.2 84.6 493.2 84.9 493.3C85.3 493.3 87.1 492.7 88.1 492.9C89.2 493.1 91.3 493.6 91.4 494.4C91.6 495.1 89.6 497.3 88.9 497.5C88.1 497.7 87.1 495.7 86.8 495.8C86.5 496 87.1 497.3 87.1 498.2C87 499.2 86.7 501 86.3 501.5C86 501.9 85.4 500.7 84.8 501C84.2 501.3 83.3 502.6 82.9 503.2C82.6 503.7 82.5 503.7 82.9 504.2C83.4 504.7 85.6 505.5 85.8 506.2C85.9 506.9 84.9 508.2 84 508.4C83.2 508.5 81.5 507.5 80.7 507.2C79.9 506.9 79.4 506.1 79.3 506.5C79.2 506.9 80 508.5 79.9 509.5C79.9 510.6 79.7 512.1 78.9 512.6C78.1 513.1 75.8 512.4 74.9 512.4C74 512.4 73.7 512.1 73.6 512.6C73.6 513.2 74.6 514.7 74.6 515.6C74.6 516.6 74 517.9 73.4 518.3C72.7 518.8 71.5 518.4 70.6 518.1C69.8 517.9 68.9 517 68.4 516.8C67.8 516.6 67.6 516.6 67.3 516.9C67.1 517.2 66.9 517.9 67.1 518.6C67.3 519.3 68.8 520.2 68.6 521.1C68.5 521.9 66.9 523.1 66.4 523.7C65.8 524.4 65.2 524.5 65.3 524.9C65.4 525.4 66.4 526.4 67 526.4C67.7 526.4 68.5 525.2 69.2 525.1C69.9 525.1 71 526.2 71.4 526.2C71.8 526.2 71.5 524.9 71.5 525.2C71.5 525.5 71.8 527 71.3 528C70.9 528.9 69.6 530.7 68.8 530.9C68 531.2 67.3 530.1 66.7 529.6C66.1 529.1 65.9 528.1 65.3 527.9C64.7 527.7 63.1 527.9 63 528.4C62.9 528.9 64.4 530.1 64.6 531C64.8 531.9 64.7 533 64.1 533.7C63.5 534.4 61.7 534.8 61.1 535C60.5 535.2 60.9 534.6 60.7 534.8C60.5 535 60.2 535.5 60 536.1C59.8 536.8 59.7 537.8 59.3 538.6C58.9 539.3 58.2 540.5 57.6 540.6C57 540.8 56.4 539.4 55.8 539.6C55.2 539.8 53.9 541 54 541.7C54.1 542.5 55.7 544.2 56.3 544.2C56.9 544.1 56.8 542.2 57.3 541.4C57.8 540.7 58.6 539.6 59.3 539.7C60 539.8 61.6 541.7 61.5 542.2C61.4 542.7 59.2 542.3 58.8 542.5C58.3 542.8 58.5 543 58.7 543.7C58.9 544.4 59.9 546 59.8 546.9C59.8 547.8 59 549 58.3 549.3C57.6 549.6 56.4 549.1 55.6 548.8C54.8 548.4 54 547.4 53.4 547.2C52.7 547 51.9 547.1 51.7 547.7C51.5 548.2 52.3 549.5 52.3 550.4C52.3 551.4 52.4 552.7 51.8 553.4C51.3 554.1 49.8 554 48.9 554.4C48.1 554.7 47.1 555 46.9 555.5C46.8 556 47.9 556.8 48.1 557.3C48.3 557.8 47.6 558.1 48 558.5C48.4 558.9 49.7 559.3 50.4 559.9C51 560.4 51.6 561.8 52 562C52.5 562.1 52.7 560.7 53 560.8C53.3 560.8 53.4 561.8 53.6 562.4C53.9 563.1 54.4 563.8 54.4 564.5C54.4 565.2 54 566 53.5 566.6C53.1 567.2 51.9 567.7 51.5 568.1C51.2 568.4 51.8 568.3 51.5 568.6C51.3 569 50.5 569.6 49.9 570.1C49.3 570.6 48.3 571.6 47.7 571.7C47.1 571.8 46.7 570.5 46.3 570.6C45.9 570.8 45.6 572 45.4 572.6C45.2 573.2 45.1 573.6 45.2 574C45.3 574.4 45.8 574.6 46.3 575C46.8 575.3 47.9 575.4 48.4 576.1C48.8 576.8 49.2 578.4 49 579.1C48.7 579.9 47.6 580.1 46.9 580.4C46.3 580.8 45.4 580.8 45 581.3C44.6 581.9 44.3 583.1 44.5 583.6C44.7 584.1 45.8 584 46.5 584.3C47.1 584.6 48.1 585 48.5 585.6C49 586.2 49.2 587.4 49.1 587.9C49 588.5 48.3 588.7 48 589C47.6 589.4 47.2 589.6 47.1 590.2C47 590.9 47.8 592.2 47.5 592.9C47.2 593.5 45.8 594.2 45.4 594.4M44.2 594.4 L185.8 594.4 L187 596.9 L183.3 600.6 L184.6 606M183.3 606 L178.4 615.9 L179.6 625.7 L183.3 633.1 L189.5 640.5 L188.3 649.1 L192 655.3 L195.7 662.7 L196.9 667.6M406 595.2 L345.2 595.2 L343.9 600.6 L341.5 606M341.5 606 L348.9 615.9 L356.2 623.2 L358.7 630.6 L356.2 638 L357.5 645.4M406 594.4 L536.5 594.4M547.6 620.8 L563.6 621.3 L606 622.7M606 623.2 L640.5 625.7 L679.9 628.7 L716.8 630.6 L743.9 631.9 L745.2 640.5 L747.6 650.3 L756.2 651.6 L759.9 642.9 L758.7 633.1 L759.9 623.2 L757.5 615.9 L763.6 610.9 L773.5 612.9 L783.3 615.9 L788.3 618.3M524.2 713.4 L531.6 715.9 L534.1 720 L540.2 718.8 L548.9 715.1 L558.7 709 L565.6 704M406 648.6 L418.3 648.4 L430.6 649.3 L442.9 651.8 L455.3 655.5M249.1 678.7 L254 684.8 L254.5 694.7 L250.3 707 L242.9 716.8 L233.1 726.7 L224.5 731.6M228.5 663.4 L235.5 661.5M241.1 664.1 L249.5 662.1M258 660.5 L270.6 662.7 L284.7 664.8M311.4 664.6 L321.8 663.6 L335.1 661.7M342.2 659.2 L353.8 656.7 L366.1 654.3 L378.4 651.8 L393.2 649.3 L406 648.1"/>
<g id="rings" stroke="#d0d0d0"><circle cx="407" cy="407" r="159.5"/><circle cx="407" cy="407" r="279.5"/><circle cx="407" cy="407" r="399.5"/></g>
<circle cx="407" cy="407" r="39.5" stroke="#ff0000"/>
<path stroke="#c8c8c8" d="M364 163L409 118"/>
<g id="strikes" shape-rendering="geometricPrecision" stroke-width="1.2">
<path stroke="#f86000" d="M397.5 54.5a4 4 0 1 0 8 0a4 4 0 1 0-8 0M399.0 54.5h5M440.5 39.5a4 4 0 1 0 8 0a4 4 0 1 0-8 0M442.0 39.5h5M444.5 37.0v5M437.5 42.5a4 4 0 1 0 8 0a4 4 0 1 0-8 0M439.0 42.5h5M441.5 40.0v5M435.0 47.5h7M438.5 44.0v7M432.5 68.5a4 4 0 1 0 8 0a4 4 0 1 0-8 0M434.0 68.5h5"/>
<path stroke="#ff7800" d="M405.0 58.5h7M408.5 55.0v7M415.0 56.5h7M432.0 57.5h7M435.5 54.0v7M411.0 63.5h7M414.5 60.0v7M413.5 68.5a4 4 0 1 0 8 0a4 4 0 1 0-8 0M415.0 68.5h5M417.5 66.0v5M358.0 101.5h7M552.5 10.5a4 4 0 1 0 8 0a4 4 0 1 0-8 0M554.0 10.5h5M358.0 101.5h7M417.5 80.5a4 4 0 1 0 8 0a4 4 0 1 0-8 0M419.0 80.5h5M427.5 83.5a4 4 0 1 0 8 0a4 4 0 1 0-8 0M429.0 83.5h5M452.0 73.5h7M377.0 88.5h7M380.5 85.0v7M409.5 87.5a4 4 0 1 0 8 0a4 4 0 1 0-8 0M411.0 87.5h5M434.0 90.5h7M437.5 87.0v7M411.0 99.5h7M414.5 96.0v7M438.0 110.5h7M441.5 107.0v7"/>
<path stroke="#ff9000" d="M407.0 36.5h7M410.5 33.0v7M396.0 39.5h7M399.5 36.0v7M405.5 48.5a4 4 0 1 0 8 0a4 4 0 1 0-8 0M407.0 48.5h5M410.0 45.5h7M430.0 47.5h7M433.5 44.0v7M423.5 52.5a4 4 0 1 0 8 0a4 4 0 1 0-8 0M425.0 52.5h5M427.5 50.0v5M421.5 55.5a4 4 0 1 0 8 0a4 4 0 1 0-8 0M423.0 55.5h5M425.5 53.0v5M450.0 50.5h7M453.5 47.0v7M421.5 64.5a4 4 0 1 0 8 0a4 4 0 1 0-8 0M423.0 64.5h5M382.0 65.5h7M385.5 62.0v7M389.5 69.5a4 4 0 1 0 8 0a4 4 0 1 0-8 0M391.0 69.5h5M393.5 67.0v5M396.5 70.5a4 4 0 1 0 8 0a4 4 0 1 0-8 0M398.0 70.5h5M400.5 68.0v5M382.5 73.5a4 4 0 1 0 8 0a4 4 0 1 0-8 0M384.0 73.5h5M396.5 71.5a4 4 0 1 0 8 0a4 4 0 1 0-8 0M398.0 71.5h5M400.5 69.0v5M410.5 77.5a4 4 0 1 0 8 0a4 4 0 1 0-8 0M412.0 77.5h5M414.5 75.0v5M408.0 83.5h7M409.0 85.5h7M394.5 96.5a4 4 0 1 0 8 0a4 4 0 1 0-8 0M396.0 96.5h5M395.5 98.5a4 4 0 1 0 8 0a4 4 0 1 0-8 0M397.0 98.5h5M399.5 96.0v5M391.0 98.5h7M394.5 95.0v7M435.0 107.5h7M438.5 104.0v7M441.0 106.5h7M444.5 103.0v7M417.0 124.5h7M420.5 121.0v7M431.5 124.5a4 4 0 1 0 8 0a4 4 0 1 0-8 0M433.0 124.5h5M441.5 124.5a4 4 0 1 0 8 0a4 4 0 1 0-8 0M443.0 124.5h5M439.0 113.5h7M442.5 110.0v7M431.5 71.5a4 4 0 1 0 8 0a4 4 0 1 0-8 0M433.0 71.5h5M410.0 85.5h7M413.5 82.0v7M416.5 122.5a4 4 0 1 0 8 0a4 4 0 1 0-8 0M418.0 122.5h5M420.5 120.0v5M416.5 116.5a4 4 0 1 0 8 0a4 4 0 1 0-8 0M418.0 116.5h5M407.5 69.5a4 4 0 1 0 8 0a4 4 0 1 0-8 0M409.0 69.5h5M411.5 67.0v5M414.5 99.5a4 4 0 1 0 8 0a4 4 0 1 0-8 0M416.0 99.5h5M418.5 97.0v5M404.5 80.5a4 4 0 1 0 8 0a4 4 0 1 0-8 0M406.0 80.5h5M408.5 78.0v5M420.5 110.5a4 4 0 1 0 8 0a4 4 0 1 0-8 0M422.0 110.5h5M424.5 108.0v5"/>
<path stroke="#ffb400" d="M411.5 28.5a4 4 0 1 0 8 0a4 4 0 1 0-8 0M413.0 28.5h5M419.5 27.5a4 4 0 1 0 8 0a4 4 0 1 0-8 0M421.0 27.5h5M423.5 25.0v5M414.5 33.5a4 4 0 1 0 8 0a4 4 0 1 0-8 0M416.0 33.5h5M418.5 31.0v5M404.0 29.5h7M396.5 33.5a4 4 0 1 0 8 0a4 4 0 1 0-8 0M398.0 33.5h5M400.5 31.0v5M398.0 44.5h7M401.5 41.0v7M405.5 53.5a4 4 0 1 0 8 0a4 4 0 1 0-8 0M407.0 53.5h5M418.5 51.5a4 4 0 1 0 8 0a4 4 0 1 0-8 0M420.0 51.5h5M419.5 55.5a4 4 0 1 0 8 0a4 4 0 1 0-8 0M421.0 55.5h5M445.0 53.5h7M451.5 56.5a4 4 0 1 0 8 0a4 4 0 1 0-8 0M453.0 56.5h5M454.0 62.5h7M442.5 65.5a4 4 0 1 0 8 0a4 4 0 1 0-8 0M444.0 65.5h5M446.5 63.0v5M435.5 60.5a4 4 0 1 0 8 0a4 4 0 1 0-8 0M437.0 60.5h5M427.5 62.5a4 4 0 1 0 8 0a4 4 0 1 0-8 0M429.0 62.5h5M431.5 60.0v5M424.5 69.5a4 4 0 1 0 8 0a4 4 0 1 0-8 0M426.0 69.5h5M428.5 67.0v5M409.5 70.5a4 4 0 1 0 8 0a4 4 0 1 0-8 0M411.0 70.5h5M413.5 68.0v5M386.5 68.5a4 4 0 1 0 8 0a4 4 0 1 0-8 0M388.0 68.5h5M390.5 66.0v5M456.5 76.5a4 4 0 1 0 8 0a4 4 0 1 0-8 0M458.0 76.5h5M423.0 59.5h7M426.5 56.0v7M421.0 65.5h7M407.0 129.5h7M410.5 126.0v7M428.0 136.5h7M427.0 142.5h7M430.5 139.0v7M437.0 139.5h7M516.5 17.5a4 4 0 1 0 8 0a4 4 0 1 0-8 0M518.0 17.5h5M229.0 28.5h7M409.5 71.5a4 4 0 1 0 8 0a4 4 0 1 0-8 0M411.0 71.5h5M413.5 69.0v5M442.5 77.5a4 4 0 1 0 8 0a4 4 0 1 0-8 0M444.0 77.5h5M446.5 75.0v5M431.0 76.5h7M454.5 77.5a4 4 0 1 0 8 0a4 4 0 1 0-8 0M456.0 77.5h5M379.0 80.5h7M403.5 82.5a4 4 0 1 0 8 0a4 4 0 1 0-8 0M405.0 82.5h5M388.5 87.5a4 4 0 1 0 8 0a4 4 0 1 0-8 0M390.0 87.5h5M392.5 85.0v5M382.5 93.5a4 4 0 1 0 8 0a4 4 0 1 0-8 0M384.0 93.5h5M386.5 91.0v5M445.5 84.5a4 4 0 1 0 8 0a4 4 0 1 0-8 0M447.0 84.5h5M450.5 86.5a4 4 0 1 0 8 0a4 4 0 1 0-8 0M452.0 86.5h5M420.0 91.5h7M419.0 93.5h7M418.0 99.5h7M421.5 96.0v7M417.0 101.5h7M420.5 98.0v7M423.5 99.5a4 4 0 1 0 8 0a4 4 0 1 0-8 0M425.0 99.5h5M424.5 101.5a4 4 0 1 0 8 0a4 4 0 1 0-8 0M426.0 101.5h5M445.5 100.5a4 4 0 1 0 8 0a4 4 0 1 0-8 0M447.0 100.5h5M449.5 98.0v5M439.0 98.5h7M437.0 102.5h7M440.5 99.0v7M417.5 108.5a4 4 0 1 0 8 0a4 4 0 1 0-8 0M419.0 108.5h5M421.5 106.0v5M446.5 113.5a4 4 0 1 0 8 0a4 4 0 1 0-8 0M448.0 113.5h5M387.0 111.5h7M424.0 114.5h7M427.5 111.0v7M420.0 115.5h7M451.5 123.5a4 4 0 1 0 8 0a4 4 0 1 0-8 0M453.0 123.5h5M455.5 121.0v5M447.5 118.5a4 4 0 1 0 8 0a4 4 0 1 0-8 0M449.0 118.5h5M438.0 116.5h7M424.5 71.5a4 4 0 1 0 8 0a4 4 0 1 0-8 0M426.0 71.5h5M428.5 69.0v5M386.0 72.5h7M429.0 102.5h7M432.5 99.0v7M427.0 94.5h7M421.5 94.5a4 4 0 1 0 8 0a4 4 0 1 0-8 0M423.0 94.5h5M427.5 84.5a4 4 0 1 0 8 0a4 4 0 1 0-8 0M429.0 84.5h5M432.5 110.5a4 4 0 1 0 8 0a4 4 0 1 0-8 0M434.0 110.5h5M420.5 60.5a4 4 0 1 0 8 0a4 4 0 1 0-8 0M422.0 60.5h5M423.0 64.5h7M426.5 61.0v7M416.5 53.5a4 4 0 1 0 8 0a4 4 0 1 0-8 0M418.0 53.5h5M420.5 51.0v5"/>
<path stroke="#ffd200" d="M235.0 58.5h7M167.0 38.5h7"/>
<path stroke="#ffff00" d="M460.0 70.5h7M369.5 84.5a4 4 0 1 0 8 0a4 4 0 1 0-8 0M371.0 84.5h5M484.0 119.5h7M487.5 116.0v7M484.0 136.5h7M487.5 133.0v7M453.0 136.5h7M456.5 133.0v7M479.0 160.5h7M482.5 157.0v7M407.0 171.5h7M500.0 108.5h7M503.5 105.0v7M496.5 124.5a4 4 0 1 0 8 0a4 4 0 1 0-8 0M498.0 124.5h5M564.0 16.5h7M567.5 13.0v7M589.5 24.5a4 4 0 1 0 8 0a4 4 0 1 0-8 0M591.0 24.5h5M530.5 65.5a4 4 0 1 0 8 0a4 4 0 1 0-8 0M532.0 65.5h5M534.5 63.0v5M529.5 69.5a4 4 0 1 0 8 0a4 4 0 1 0-8 0M531.0 69.5h5M533.5 67.0v5M442.0 466.5h7M437.0 76.5h7M380.0 81.5h7M393.0 81.5h7M396.5 78.0v7M397.0 81.5h7M449.0 84.5h7M443.5 91.5a4 4 0 1 0 8 0a4 4 0 1 0-8 0M445.0 91.5h5M447.5 89.0v5M428.0 90.5h7M431.5 87.0v7M425.0 91.5h7M428.5 88.0v7M406.5 94.5a4 4 0 1 0 8 0a4 4 0 1 0-8 0M408.0 94.5h5M410.5 92.0v5M402.5 101.5a4 4 0 1 0 8 0a4 4 0 1 0-8 0M404.0 101.5h5M406.5 99.0v5M404.5 103.5a4 4 0 1 0 8 0a4 4 0 1 0-8 0M406.0 103.5h5M408.5 101.0v5M389.0 102.5h7M446.0 108.5h7M395.5 111.5a4 4 0 1 0 8 0a4 4 0 1 0-8 0M397.0 111.5h5M399.5 114.5a4 4 0 1 0 8 0a4 4 0 1 0-8 0M401.0 114.5h5M403.5 112.0v5M407.5 111.5a4 4 0 1 0 8 0a4 4 0 1 0-8 0M409.0 111.5h5M411.5 109.0v5M414.0 113.5h7M430.5 114.5a4 4 0 1 0 8 0a4 4 0 1 0-8 0M432.0 114.5h5M424.0 118.5h7M420.0 122.5h7M404.0 100.5h7M407.5 97.0v7M406.0 105.5h7M426.5 103.5a4 4 0 1 0 8 0a4 4 0 1 0-8 0M428.0 103.5h5M419.5 119.5a4 4 0 1 0 8 0a4 4 0 1 0-8 0M421.0 119.5h5M416.5 119.5a4 4 0 1 0 8 0a4 4 0 1 0-8 0M418.0 119.5h5M428.5 86.5a4 4 0 1 0 8 0a4 4 0 1 0-8 0M430.0 86.5h5M400.0 108.5h7M403.5 105.0v7M405.0 103.5h7M408.5 100.0v7"/>
<path stroke="#00f0ff" d="M456.5 91.5a4 4 0 1 0 8 0a4 4 0 1 0-8 0M458.0 91.5h5M474.0 130.5h7M425.0 139.5h7M390.0 144.5h7M393.5 141.0v7M435.0 81.5h7M438.5 78.0v7M438.0 91.5h7M455.5 91.5a4 4 0 1 0 8 0a4 4 0 1 0-8 0M457.0 91.5h5M445.5 126.5a4 4 0 1 0 8 0a4 4 0 1 0-8 0M447.0 126.5h5M449.5 124.0v5"/>
</g>
<g font-family="DejaVu Sans, Liberation Sans, sans-serif" font-size="9.5" fill="#f2f0b4" stroke="none" letter-spacing="0.6" shape-rendering="auto">
<text x="396" y="12.5">313</text><text x="396" y="131">219</text><text x="397" y="251">125</text><text x="400" y="371">31</text>
</g>
<text x="353.5" y="175" font-family="DejaVu Sans, Liberation Sans, sans-serif" font-size="9.5" letter-spacing="0.7" fill="#f4f4f4" stroke="none" shape-rendering="auto">R-2588<tspan fill="#ff2020">+</tspan>8</text>
</svg>
<div id="legend" style="position:absolute;left:3px;top:753px;width:241px;height:42px;background:#000;border:1px solid #9c9c9c;font-family:'DejaVu Sans Condensed','Liberation Sans',sans-serif;font-size:9px;color:#ececec;line-height:12px;white-space:pre;">
<span style="position:absolute;left:4px;top:2px;">Symbols</span><span style="position:absolute;left:43px;top:2px;">-CG</span><span style="position:absolute;left:69px;top:2px;">-IC</span><span style="position:absolute;left:90px;top:2px;">+CG</span><span style="position:absolute;left:115px;top:2px;">+IC</span><span style="position:absolute;left:144px;top:2px;">Strike age color codes</span>
<span style="position:absolute;left:4px;top:15px;">Recent</span><span style="position:absolute;left:4px;top:28px;">Old</span>
<span style="position:absolute;left:144px;top:15px;color:#f0d41a;">15+</span><span style="position:absolute;left:179px;top:15px;color:#f0a414;">30+</span><span style="position:absolute;left:214px;top:15px;color:#ee9012;">45+</span>
<span style="position:absolute;left:144px;top:28px;color:#e88014;">60+</span><span style="position:absolute;left:179px;top:28px;color:#e8600e;">75+</span><span style="position:absolute;left:214px;top:28px;color:#e83a0a;">90+</span>
<svg width="241" height="42" viewBox="0 0 241 42" style="position:absolute;left:0;top:0;" fill="none" stroke-width="1">
<path stroke="#00f0ff" d="M46.5 20.5a4 4 0 1 0 8 0a4 4 0 1 0-8 0M48 20.5h5M72 20.5h7M96.5 20.5a4 4 0 1 0 8 0a4 4 0 1 0-8 0M98 20.5h5M100.5 18.0v5M122 20.5h7M125.5 17.0v7"/>
<path stroke="#ffff00" d="M46.5 33.5a4 4 0 1 0 8 0a4 4 0 1 0-8 0M48 33.5h5M72 33.5h7M96.5 33.5a4 4 0 1 0 8 0a4 4 0 1 0-8 0M98 33.5h5M100.5 31.0v5M122 33.5h7M125.5 30.0v7"/>
</svg>
</div>
<div id="copy" style="position:absolute;left:679px;top:786px;width:121px;height:14px;background:#000;font-family:'DejaVu Sans Condensed','Liberation Sans',sans-serif;font-size:9.2px;line-height:11px;color:#f0f0f0;white-space:pre;padding-left:3px;box-sizing:border-box;">©2005 Astrogenic Systems</div>
</div>
<!-- ============ side panel ============ -->
<div class="panel" style="top:8px;height:318px;"></div>
<div class="panel" style="top:333px;height:113px;"></div>
<div class="panel" style="top:453px;height:347px;"></div>

<div class="hb" style="left:819px;width:56px;background:#5c0000;color:#f2e6e6;">STRIKE</div>
<div class="hb" style="left:883px;width:56px;background:#303030;color:#b4bcbc;">NOISE</div>
<div class="hb" style="left:994px;width:126px;background:#202020;"><span style="position:absolute;left:4px;top:0;color:#fff;">Bng 357°</span><span style="position:absolute;right:3px;top:0;color:#00f000;">204mi</span></div>

<div class="lb" style="left:821px;">Strikes/min</div>
<div class="lb" style="left:931px;">Close/min</div>
<div class="lb" style="left:1041px;">Noises/min</div>

<div class="big" style="left:813px;">7</div>
<div class="big" style="left:923px;">0</div>
<div class="big" style="left:1033px;color:#c0c0c0;">0</div>

<div class="t r" style="left:803px;width:100px;top:131px;">Total Strikes</div>
<div class="t r" style="left:803px;width:100px;top:149px;">7868</div>
<div class="t r" style="left:913px;width:100px;top:131px;">Total Close</div>
<div class="t r" style="left:913px;width:100px;top:149px;">0</div>
<div class="t r g" style="left:1023px;width:100px;top:131px;">Total Noises</div>
<div class="t r" style="left:1023px;width:100px;top:149px;">424</div>

<div class="t g" style="left:820px;top:203px;letter-spacing:-0.3px;">Lightning type distribution</div>
<div class="hr" style="left:821px;top:217px;width:303px;"></div>

<div class="t b" style="left:821px;top:225px;">Cloud-ground</div>
<div class="t b" style="left:912px;top:225px;font-weight:normal;">+</div>
<div class="bar" style="left:925px;top:227px;"><i style="width:17px;background:#ff0000;"></i></div>
<div class="t b pc" style="left:979px;top:225px;">34%</div>
<div class="t b" style="left:1015px;top:225px;">−</div>
<div class="bar" style="left:1028px;top:227px;"><i style="width:8px;background:#8cd0ff;"></i></div>
<div class="t b pc" style="left:1082px;top:225px;">17%</div>
<div class="t b g" style="left:821px;top:249px;">Count</div>
<div class="t b ct" style="left:925px;top:249px;">2700</div>
<div class="t b ct" style="left:1028px;top:249px;">1308</div>

<div class="t b" style="left:821px;top:279px;">Intracloud</div>
<div class="t b" style="left:912px;top:279px;font-weight:normal;">+</div>
<div class="bar" style="left:925px;top:281px;"><i style="width:8px;background:#f060b0;"></i></div>
<div class="t b pc" style="left:979px;top:279px;">16%</div>
<div class="t b" style="left:1015px;top:279px;">−</div>
<div class="bar" style="left:1028px;top:281px;"><i style="width:17px;background:#00f000;"></i></div>
<div class="t b pc" style="left:1082px;top:279px;">34%</div>
<div class="t b g" style="left:821px;top:303px;">Count</div>
<div class="t b ct" style="left:925px;top:303px;">1222</div>
<div class="t b ct" style="left:1028px;top:303px;">2638</div>

<div class="t gr" id="clock" style="color:#00ff00;left:821px;top:336px;height:22px;line-height:22px;font-family:'DejaVu Sans Condensed','DejaVu Sans',sans-serif;font-weight:bold;font-size:17px;letter-spacing:0.75px;">10/25/2025 12:29:16 PM</div>
<div class="hr" style="left:821px;top:358px;width:302px;"></div>

<div class="t" style="left:821px;top:376px;">Squelch</div>
<div class="t" style="left:909px;top:376px;">0</div>
<div class="t" style="left:981px;top:376px;">Upload</div>
<div class="t g" style="left:1061px;top:376px;">Disabled</div>
<div class="t" style="left:821px;top:396px;">Persistence</div>
<div class="t mn" style="left:909px;top:396px;">90 min</div>
<div class="t" style="left:981px;top:396px;">Capture</div>
<div class="t gr" style="left:1061px;top:396px;letter-spacing:-0.5px;">Active</div>
<div class="t" style="left:821px;top:416px;">Range</div>
<div class="t mn" style="left:909px;top:416px;">313 mi</div>
<div class="t" style="left:981px;top:416px;">Receiver</div>
<div class="t gr" style="left:1061px;top:416px;">Enabled</div>

<div class="t g" style="left:821px;top:463px;">Uptime</div>
<div class="t" style="left:909px;top:463px;">199:59</div>
<div class="t g" style="left:981px;top:463px;">Peak time</div>
<div class="t g" style="left:1061px;top:463px;">Plot</div>
<div class="t g" style="left:821px;top:486px;">Peak rate</div>
<div class="t mn" style="left:909px;top:486px;">43/min</div>
<div class="t" style="left:981px;top:486px;">4:22 AM</div>
<div class="t" style="left:1061px;top:486px;">Strike</div>
<div class="t g" style="left:822px;top:516px;">Trend graph</div>
<div class="t mn" style="left:908px;top:516px;">60 min</div>
<!-- ============ trend graph ============ -->
<svg id="graph" width="320" height="270" viewBox="812 535 320 270" style="position:absolute;left:812px;top:535px;" shape-rendering="crispEdges">
<polyline points="821.0,777.0 823.5,769.2 826.5,777.0 828.5,777.0 831.0,777.0 832.0,777.0 834.5,769.2 839.0,769.2 842.8,777.0 845.8,777.0 853.2,769.2 855.2,769.2 854.5,769.2 858.2,769.2 860.8,777.0 864.0,777.0 868.5,769.2 871.5,777.0 875.2,769.2 875.0,769.2 879.8,777.0 882.8,769.2 883.2,777.0 889.0,769.2 891.0,777.0 894.2,769.2 895.8,769.2 900.8,761.4 901.5,769.2 906.5,777.0 907.5,769.2 910.0,761.4 910.2,769.2 912.5,769.2 915.0,769.2 918.8,777.0 922.0,769.2 924.5,777.0 925.5,777.0 928.0,777.0 931.5,769.2 931.2,769.2 933.8,769.2 937.0,769.2 939.5,769.2 942.8,777.0 945.2,777.0 948.8,769.2 952.0,769.2 954.2,769.2 957.0,769.2 956.5,769.2 959.2,769.2 960.0,769.2 964.2,769.2 968.0,777.0 971.8,777.0 976.8,777.0 981.8,769.2 985.0,777.0 988.0,769.2 989.5,769.2 992.0,777.0 995.8,769.2 1000.2,777.0 1001.8,777.0 1005.5,777.0 1009.8,769.2 1009.5,769.2 1014.5,777.0 1019.0,769.2 1021.5,761.4 1026.5,769.2 1029.2,769.2 1033.0,761.4 1037.0,769.2 1038.2,769.2 1040.8,777.0 1043.2,777.0 1047.0,777.0 1052.8,777.0 1054.5,777.0 1059.8,769.2 1060.8,761.4 1063.2,761.4 1068.0,777.0 1070.5,769.2 1073.0,769.2 1076.0,769.2 1078.5,769.2 1079.5,777.0 1085.2,777.0 1088.5,761.4" fill="none" stroke="#f060b0" stroke-width="1"/>
<polyline points="821.0,777.0 825.5,777.0 826.5,777.0 826.5,769.2 830.0,769.2 832.0,777.0 835.5,769.2 837.0,769.2 840.8,777.0 847.8,777.0 851.2,769.2 853.2,777.0 855.5,769.2 858.2,769.2 861.8,777.0 864.0,769.2 867.5,769.2 869.5,777.0 874.2,769.2 877.0,769.2 878.8,769.2 880.8,777.0 883.2,777.0 888.0,769.2 892.0,777.0 894.2,769.2 896.8,769.2 898.8,761.4 901.5,769.2 906.5,769.2 907.5,769.2 910.0,761.4 911.2,761.4 913.5,769.2 915.0,769.2 917.8,777.0 920.0,769.2 922.5,769.2 925.5,777.0 927.0,769.2 931.5,769.2 933.2,769.2 932.8,769.2 935.0,769.2 939.5,769.2 942.8,777.0 943.2,777.0 947.8,769.2 950.0,769.2 953.2,769.2 955.0,769.2 957.5,761.4 959.2,769.2 960.0,761.4 964.2,769.2 969.0,769.2 972.8,777.0 977.8,777.0 980.8,769.2 984.0,777.0 987.0,769.2 989.5,769.2 993.0,777.0 995.8,769.2 999.2,769.2 1002.8,777.0 1004.5,777.0 1007.8,761.4 1010.5,753.5 1012.5,777.0 1019.0,777.0 1021.5,769.2 1026.5,769.2 1030.2,769.2 1034.0,737.9 1037.0,761.4 1039.2,761.4 1040.8,769.2 1044.2,777.0 1047.0,769.2 1050.8,769.2 1055.5,777.0 1057.8,769.2 1061.8,761.4 1065.2,769.2 1067.0,777.0 1069.5,769.2 1074.0,769.2 1075.0,777.0 1077.5,777.0 1079.5,769.2 1083.2,777.0 1087.5,761.4" fill="none" stroke="#8cd0ff" stroke-width="1"/>
<polyline points="823.0,777.0 823.5,769.2 826.5,769.2 827.5,769.2 830.0,769.2 833.0,777.0 836.5,769.2 839.0,769.2 841.8,777.0 846.8,777.0 851.2,769.2 853.2,777.0 854.5,769.2 859.2,777.0 860.8,777.0 864.0,769.2 868.5,769.2 870.5,777.0 875.2,769.2 877.0,761.4 878.8,777.0 880.8,777.0 883.2,769.2 887.0,769.2 890.0,777.0 894.2,769.2 895.8,769.2 898.8,761.4 902.5,769.2 905.5,769.2 907.5,761.4 909.0,761.4 910.2,761.4 911.5,761.4 914.0,769.2 918.8,777.0 922.0,769.2 923.5,769.2 926.5,777.0 928.0,769.2 930.5,769.2 931.2,777.0 934.8,769.2 937.0,761.4 938.5,769.2 942.8,777.0 944.2,777.0 948.8,769.2 951.0,769.2 953.2,761.4 957.0,769.2 956.5,761.4 959.2,761.4 960.0,769.2 965.2,769.2 968.0,769.2 970.8,777.0 976.8,777.0 982.8,761.4 986.0,769.2 988.0,769.2 989.5,769.2 993.0,777.0 996.8,769.2 1000.2,769.2 1000.8,777.0 1005.5,769.2 1007.8,769.2 1010.5,769.2 1013.5,777.0 1017.0,777.0 1021.5,761.4 1024.5,777.0 1030.2,777.0 1032.0,753.5 1037.0,769.2 1040.2,761.4 1040.8,769.2 1045.2,777.0 1049.0,769.2 1051.8,769.2 1055.5,777.0 1059.8,777.0 1060.8,753.5 1065.2,761.4 1069.0,769.2 1071.5,769.2 1072.0,769.2 1077.0,769.2 1077.5,769.2 1081.5,769.2 1085.2,777.0 1088.5,761.4" fill="none" stroke="#ff0000" stroke-width="1"/>
<polyline points="821.0,769.2 823.5,777.0 824.5,769.2 827.5,769.2 831.0,769.2 834.0,777.0 835.5,761.4 838.0,769.2 842.8,769.2 847.8,769.2 853.2,769.2 855.2,777.0 854.5,769.2 858.2,769.2 860.8,777.0 866.0,769.2 867.5,769.2 869.5,777.0 875.2,769.2 875.0,769.2 879.8,769.2 882.8,769.2 884.2,777.0 889.0,769.2 892.0,777.0 894.2,769.2 896.8,769.2 898.8,753.5 903.5,761.4 906.5,777.0 907.5,769.2 909.0,761.4 912.2,753.5 911.5,761.4 914.0,761.4 917.8,777.0 921.0,769.2 923.5,769.2 924.5,777.0 927.0,769.2 931.5,769.2 932.2,777.0 934.8,769.2 935.0,761.4 937.5,761.4 941.8,777.0 943.2,777.0 948.8,769.2 951.0,769.2 953.2,761.4 956.0,761.4 957.5,745.7 959.2,753.5 960.0,753.5 963.2,761.4 969.0,769.2 971.8,777.0 976.8,777.0 982.8,761.4 985.0,777.0 987.0,761.4 989.5,769.2 993.0,769.2 995.8,761.4 999.2,769.2 1001.8,777.0 1005.5,777.0 1008.8,761.4 1011.5,761.4 1014.5,777.0 1019.0,777.0 1023.5,761.4 1026.5,769.2 1030.2,769.2 1033.0,745.7 1037.0,769.2 1039.2,761.4 1041.8,769.2 1045.2,777.0 1049.0,769.2 1052.8,769.2 1055.5,777.0 1058.8,769.2 1062.8,753.5 1063.2,753.5 1068.0,777.0 1070.5,769.2 1073.0,761.4 1077.0,777.0 1077.5,769.2 1081.5,769.2 1083.2,777.0 1088.5,745.7" fill="none" stroke="#00e000" stroke-width="1"/>
<polyline points="822.0,761.4 824.5,761.4 825.5,769.2 827.5,761.4 830.0,761.4 833.0,777.0 835.5,753.5 838.0,753.5 841.8,769.2 846.8,769.2 852.2,753.5 854.2,769.2 855.5,761.4 859.2,761.4 861.8,777.0 865.0,761.4 867.5,761.4 870.5,777.0 874.2,753.5 876.0,753.5 878.8,769.2 881.8,761.4 884.2,769.2 888.0,753.5 891.0,769.2 894.2,761.4 896.8,753.5 899.8,737.9 902.5,753.5 905.5,769.2 907.5,753.5 910.0,737.9 911.2,745.7 912.5,737.9 915.0,753.5 918.8,777.0 921.0,761.4 923.5,761.4 925.5,777.0 928.0,761.4 930.5,761.4 932.2,769.2 933.8,753.5 936.0,745.7 938.5,753.5 941.8,769.2 944.2,777.0 948.8,753.5 951.0,761.4 954.2,737.9 956.0,745.7 957.5,737.9 959.2,745.7 961.0,737.9 964.2,753.5 968.0,761.4 971.8,777.0 976.8,777.0 981.8,753.5 985.0,769.2 988.0,753.5 990.5,753.5 993.0,761.4 996.8,745.7 999.2,761.4 1001.8,769.2 1005.5,769.2 1008.8,745.7 1010.5,745.7 1013.5,769.2 1018.0,769.2 1022.5,737.9 1025.5,761.4 1029.2,761.4 1033.0,714.4 1036.0,753.5 1039.2,737.9 1041.8,761.4 1044.2,777.0 1048.0,769.2 1051.8,761.4 1055.5,777.0 1058.8,761.4 1061.8,722.3 1064.2,737.9 1068.0,769.2 1070.5,753.5 1073.0,753.5 1076.0,769.2 1078.5,761.4 1080.5,761.4 1084.2,777.0 1087.5,718.4" fill="none" stroke="#ffffff" stroke-width="1"/>
<path d="M822.5,770V777.5H1088.5" fill="none" stroke="#ffffff" stroke-width="1"/>
<path d="M1088.5,542V778" fill="none" stroke="#b4b4b4" stroke-width="1"/>
<path d="M1084,738.5H1089" stroke="#b4b4b4" stroke-width="1"/>
<path d="M1084,699.5H1089" stroke="#b4b4b4" stroke-width="1"/>
<path d="M1084,660.5H1089" stroke="#b4b4b4" stroke-width="1"/>
<path d="M1084,621.5H1089" stroke="#b4b4b4" stroke-width="1"/>
<path d="M1084,582.5H1089" stroke="#b4b4b4" stroke-width="1"/>
<path d="M1084,542.5H1089" stroke="#b4b4b4" stroke-width="1"/>
<path d="M1088.5,777V780" stroke="#b4b4b4" stroke-width="1"/>
<path d="M1044.5,777V780" stroke="#b4b4b4" stroke-width="1"/>
<path d="M999.5,777V780" stroke="#b4b4b4" stroke-width="1"/>
<path d="M955.5,777V780" stroke="#b4b4b4" stroke-width="1"/>
<path d="M911.5,777V780" stroke="#b4b4b4" stroke-width="1"/>
<path d="M866.5,777V780" stroke="#b4b4b4" stroke-width="1"/>
<path d="M822.5,777V780" stroke="#b4b4b4" stroke-width="1"/>
<g font-family="Liberation Sans, sans-serif" font-size="12.2" fill="#c4ccd4" shape-rendering="auto" text-rendering="geometricPrecision">
<text x="1092.5" y="703.4">10</text>
<text x="1092.5" y="625.2">20</text>
<text x="1092.5" y="547.0">30</text>
<text x="827.5" y="792.7" text-anchor="middle">60</text>
<text x="871.9" y="792.7" text-anchor="middle">50</text>
<text x="916.2" y="792.7" text-anchor="middle">40</text>
<text x="960.5" y="792.7" text-anchor="middle">30</text>
<text x="1004.8" y="792.7" text-anchor="middle">20</text>
<text x="1049.2" y="792.7" text-anchor="middle">10</text>
<text x="1087.7" y="792.7">0</text><text x="1100" y="792.7">min</text>
</g></svg>
</body>
</html>
